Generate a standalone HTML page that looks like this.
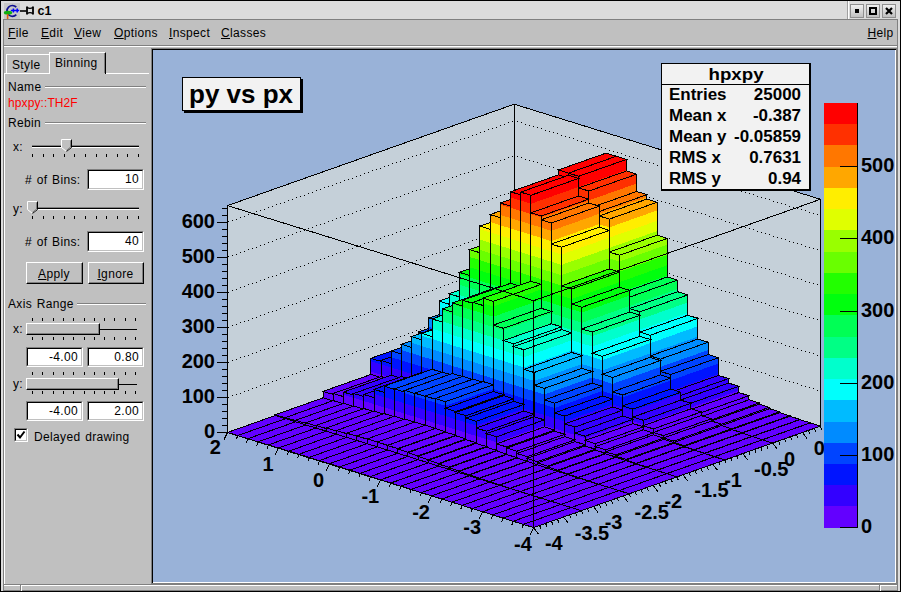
<!DOCTYPE html>
<html><head><meta charset="utf-8">
<style>
*{margin:0;padding:0;box-sizing:border-box}
html,body{width:901px;height:592px;overflow:hidden;background:#c0c0c0;font-family:"Liberation Sans",sans-serif;font-size:12px;color:#000;letter-spacing:0.35px;word-spacing:1px}
.a{position:absolute}
.t{position:absolute;white-space:nowrap;line-height:1}
.u{text-decoration:underline}
.entry{position:absolute;background:#fff;border-top:1px solid #808080;border-left:1px solid #808080;border-right:1px solid #fff;border-bottom:1px solid #fff}
.entry::before{content:"";position:absolute;left:0;top:0;right:0;bottom:0;border-top:1px solid #000;border-left:1px solid #000;border-right:1px solid #c0c0c0;border-bottom:1px solid #c0c0c0}
.entry span{position:absolute;right:4px;top:3px;line-height:1}
.btn{position:absolute;background:#c0c0c0;border-top:1px solid #fff;border-left:1px solid #fff;border-right:1px solid #000;border-bottom:1px solid #000}
.btn::before{content:"";position:absolute;left:0;top:0;right:0;bottom:0;border-right:1px solid #808080;border-bottom:1px solid #808080}
.btn>span{position:absolute;left:-1px;right:0;text-align:center;top:5px;line-height:1}
.groove{position:absolute;height:2px;border-top:1px solid #808080;border-bottom:1px solid #fff}
.tick{position:absolute;width:1px;height:3px;background:#000}
svg text{font-family:"Liberation Sans",sans-serif;font-weight:bold;letter-spacing:0;word-spacing:0}
.nb{letter-spacing:0;word-spacing:0}
</style></head>
<body>
<!-- outer window frame -->
<div class="a" style="left:0;top:0;width:901px;height:592px;background:#000"></div>
<div class="a" style="left:1px;top:1px;width:899px;height:590px;background:#dcdcdc"></div>
<!-- title bar -->
<div class="a" style="left:4px;top:3px;width:16px;height:16px;background:#c8c8c8"></div>
<svg class="a" style="left:0;top:0" width="40" height="22" viewBox="0 0 40 22">
  <path d="M16.3 7.2A5.4 5.4 0 1 0 16.3 14.6" fill="none" stroke="#101090" stroke-width="1.7"/>
  <path d="M10.8 10.6h8.4M13.4 8.6v4M17.2 8.6v4" stroke="#0000ff" stroke-width="1.5" fill="none"/>
  <ellipse cx="8" cy="12.7" rx="4.2" ry="1.9" fill="#10b010"/>
  <path d="M7.6 14v5" stroke="#e06010" stroke-width="1.6"/>
  <path d="M20 11h6.5" stroke="#000" stroke-width="1.6"/>
  <path d="M27 6.5v8M33 6.5v8" stroke="#000" stroke-width="1.8"/>
  <path d="M27 7.2q3 2.5 6 0M27 13.8q3 -2.5 6 0" stroke="#000" stroke-width="1.3" fill="none"/>
</svg>
<div class="t nb" style="left:37.5px;top:5px;font-weight:bold;font-size:12.5px">c1</div>
<div class="a" style="left:847px;top:1px;width:1px;height:18px;background:#a0a0a0"></div>
<div class="a" style="left:848px;top:1px;width:1px;height:18px;background:#fff"></div>
<div class="a" style="left:850px;top:4px;width:14px;height:14px;border:1px solid #909090;background:linear-gradient(#f0f0f0,#c0c0c0)"></div>
<div class="a" style="left:855px;top:9px;width:4px;height:4px;background:#000"></div>
<div class="a" style="left:866px;top:4px;width:14px;height:14px;border:1px solid #909090;background:linear-gradient(#f0f0f0,#c0c0c0)"></div>
<div class="a" style="left:869px;top:7px;width:8px;height:8px;border:2px solid #000"></div>
<div class="a" style="left:882px;top:4px;width:14px;height:14px;border:1px solid #909090;background:linear-gradient(#f0f0f0,#c0c0c0)"></div>
<svg class="a" style="left:882px;top:4px" width="14" height="14"><path d="M4 4l6 6M10 4l-6 6" stroke="#000" stroke-width="2.2"/></svg>

<!-- inner window -->
<div class="a" style="left:3px;top:19px;width:894px;height:572px;background:#808080"></div>
<div class="a" style="left:4px;top:20px;width:893px;height:570px;background:#c0c0c0"></div>
<!-- right edge light strip -->
<div class="a" style="left:897px;top:19px;width:3px;height:572px;background:#dcdcdc"></div>
<div class="a" style="left:897px;top:19px;width:1px;height:572px;background:#808080"></div>

<!-- menu bar -->
<div class="t" style="left:8px;top:27px"><span class="u">F</span>ile</div>
<div class="t" style="left:41px;top:27px"><span class="u">E</span>dit</div>
<div class="t" style="left:74px;top:27px"><span class="u">V</span>iew</div>
<div class="t" style="left:114px;top:27px"><span class="u">O</span>ptions</div>
<div class="t" style="left:169px;top:27px"><span class="u">I</span>nspect</div>
<div class="t" style="left:221px;top:27px"><span class="u">C</span>lasses</div>
<div class="t" style="left:867.5px;top:27px"><span class="u">H</span>elp</div>
<div class="a" style="left:4px;top:45px;width:893px;height:1px;background:#808080"></div>
<div class="a" style="left:4px;top:46px;width:893px;height:1px;background:#fff"></div>

<!-- left panel frame -->
<div class="a" style="left:4px;top:73px;width:1px;height:511px;background:#fff"></div>

<!-- tabs -->
<div class="a" style="left:6px;top:54px;width:44px;height:20px;border-top:1px solid #fff;border-left:1px solid #fff"></div>
<div class="t" style="left:12px;top:59px">Style</div>
<div class="a" style="left:49px;top:52px;width:57px;height:22px;border-top:1px solid #fff;border-left:1px solid #fff;border-right:1px solid #000;background:#c0c0c0"></div><div class="a" style="left:104px;top:53px;width:1px;height:20px;background:#808080"></div>
<div class="t" style="left:55px;top:57px">Binning</div>
<div class="a" style="left:4px;top:73px;width:46px;height:1px;background:#fff"></div>
<div class="a" style="left:106px;top:73px;width:43px;height:1px;background:#fff"></div>

<div class="t" style="left:8px;top:81px">Name</div>
<div class="groove" style="left:45px;top:86px;width:101px"></div>
<div class="t" style="left:8px;top:97px;color:#f00;letter-spacing:0.1px">hpxpy::TH2F</div>
<div class="t" style="left:8px;top:117px">Rebin</div>
<div class="groove" style="left:45px;top:122px;width:101px"></div>

<div class="t" style="left:13px;top:141px">x:</div>
<div class="a" style="left:32px;top:145px;width:107px;height:1px;background:#808080"></div>
<div class="a" style="left:32px;top:146px;width:107px;height:1px;background:#000"></div>
<div class="a" style="left:32px;top:147px;width:107px;height:1px;background:#fff"></div>
<div class="tick" style="left:32px;top:154px"></div>
<div class="tick" style="left:43px;top:154px"></div>
<div class="tick" style="left:53px;top:154px"></div>
<div class="tick" style="left:64px;top:154px"></div>
<div class="tick" style="left:74px;top:154px"></div>
<div class="tick" style="left:85px;top:154px"></div>
<div class="tick" style="left:96px;top:154px"></div>
<div class="tick" style="left:106px;top:154px"></div>
<div class="tick" style="left:117px;top:154px"></div>
<div class="tick" style="left:127px;top:154px"></div>
<div class="tick" style="left:138px;top:154px"></div>
<svg class="a" style="left:61px;top:139px" width="11" height="13"><path d="M0.5 0.5h10v8l-5 4-5-4z" fill="#c0c0c0" stroke="#fff"/><path d="M10.5 0.5v8l-5 4" fill="none" stroke="#000"/><path d="M9.5 1.5v6.5l-4 3.3" fill="none" stroke="#808080"/></svg>
<div class="t" style="left:25px;top:174px"># of Bins:</div>
<div class="entry" style="left:87px;top:169px;width:57px;height:21px"><span>10</span></div>
<div class="t" style="left:13px;top:203px">y:</div>
<div class="a" style="left:32px;top:207px;width:107px;height:1px;background:#808080"></div>
<div class="a" style="left:32px;top:208px;width:107px;height:1px;background:#000"></div>
<div class="a" style="left:32px;top:209px;width:107px;height:1px;background:#fff"></div>
<div class="tick" style="left:32px;top:216px"></div>
<div class="tick" style="left:43px;top:216px"></div>
<div class="tick" style="left:53px;top:216px"></div>
<div class="tick" style="left:64px;top:216px"></div>
<div class="tick" style="left:74px;top:216px"></div>
<div class="tick" style="left:85px;top:216px"></div>
<div class="tick" style="left:96px;top:216px"></div>
<div class="tick" style="left:106px;top:216px"></div>
<div class="tick" style="left:117px;top:216px"></div>
<div class="tick" style="left:127px;top:216px"></div>
<div class="tick" style="left:138px;top:216px"></div>
<svg class="a" style="left:27px;top:201px" width="11" height="13"><path d="M0.5 0.5h10v8l-5 4-5-4z" fill="#c0c0c0" stroke="#fff"/><path d="M10.5 0.5v8l-5 4" fill="none" stroke="#000"/><path d="M9.5 1.5v6.5l-4 3.3" fill="none" stroke="#808080"/></svg>
<div class="t" style="left:25px;top:236px"># of Bins:</div>
<div class="entry" style="left:87px;top:231px;width:57px;height:21px"><span>40</span></div>
<div class="btn" style="left:26px;top:262px;width:57px;height:22px"><span><span class="u">A</span>pply</span></div>
<div class="btn" style="left:88px;top:262px;width:56px;height:22px"><span><span class="u">I</span>gnore</span></div>
<div class="t" style="left:8px;top:298px">Axis Range</div>
<div class="groove" style="left:77px;top:303px;width:69px"></div>
<div class="t" style="left:13px;top:323px">x:</div>
<div class="tick" style="left:32px;top:318px"></div>
<div class="tick" style="left:32px;top:337px"></div>
<div class="tick" style="left:42px;top:318px"></div>
<div class="tick" style="left:42px;top:337px"></div>
<div class="tick" style="left:53px;top:318px"></div>
<div class="tick" style="left:53px;top:337px"></div>
<div class="tick" style="left:63px;top:318px"></div>
<div class="tick" style="left:63px;top:337px"></div>
<div class="tick" style="left:73px;top:318px"></div>
<div class="tick" style="left:73px;top:337px"></div>
<div class="tick" style="left:84px;top:318px"></div>
<div class="tick" style="left:84px;top:337px"></div>
<div class="tick" style="left:94px;top:318px"></div>
<div class="tick" style="left:94px;top:337px"></div>
<div class="tick" style="left:104px;top:318px"></div>
<div class="tick" style="left:104px;top:337px"></div>
<div class="tick" style="left:114px;top:318px"></div>
<div class="tick" style="left:114px;top:337px"></div>
<div class="tick" style="left:125px;top:318px"></div>
<div class="tick" style="left:125px;top:337px"></div>
<div class="tick" style="left:135px;top:318px"></div>
<div class="tick" style="left:135px;top:337px"></div>
<div class="a" style="left:26px;top:329px;width:111px;height:1px;background:#000"></div>
<div class="btn" style="left:26px;top:323px;width:74px;height:12px"></div>
<div class="entry" style="left:26px;top:347px;width:57px;height:20px"><span>-4.00</span></div>
<div class="entry" style="left:87px;top:347px;width:57px;height:20px"><span>0.80</span></div>
<div class="t" style="left:13px;top:378px">y:</div>
<div class="tick" style="left:32px;top:372px"></div>
<div class="tick" style="left:32px;top:391px"></div>
<div class="tick" style="left:42px;top:372px"></div>
<div class="tick" style="left:42px;top:391px"></div>
<div class="tick" style="left:53px;top:372px"></div>
<div class="tick" style="left:53px;top:391px"></div>
<div class="tick" style="left:63px;top:372px"></div>
<div class="tick" style="left:63px;top:391px"></div>
<div class="tick" style="left:73px;top:372px"></div>
<div class="tick" style="left:73px;top:391px"></div>
<div class="tick" style="left:84px;top:372px"></div>
<div class="tick" style="left:84px;top:391px"></div>
<div class="tick" style="left:94px;top:372px"></div>
<div class="tick" style="left:94px;top:391px"></div>
<div class="tick" style="left:104px;top:372px"></div>
<div class="tick" style="left:104px;top:391px"></div>
<div class="tick" style="left:114px;top:372px"></div>
<div class="tick" style="left:114px;top:391px"></div>
<div class="tick" style="left:125px;top:372px"></div>
<div class="tick" style="left:125px;top:391px"></div>
<div class="tick" style="left:135px;top:372px"></div>
<div class="tick" style="left:135px;top:391px"></div>
<div class="a" style="left:26px;top:384px;width:111px;height:1px;background:#000"></div>
<div class="btn" style="left:26px;top:378px;width:93px;height:12px"></div>
<div class="entry" style="left:26px;top:401px;width:57px;height:20px"><span>-4.00</span></div>
<div class="entry" style="left:87px;top:401px;width:57px;height:20px"><span>2.00</span></div>
<div class="entry" style="left:14px;top:428px;width:14px;height:14px"></div>
<svg class="a" style="left:14px;top:428px" width="14" height="14"><path d="M3.5 6.5l2.5 3 4.5-6" fill="none" stroke="#000" stroke-width="2"/></svg>
<div class="t" style="left:34px;top:431px">Delayed drawing</div>

<!-- canvas frame -->
<div class="a" style="left:151px;top:48px;width:746px;height:536px;background:#808080"></div>
<div class="a" style="left:152px;top:49px;width:744px;height:534px;background:#000"></div>
<div class="a" style="left:153px;top:50px;width:743px;height:533px;background:#fff"></div>
<div class="a" style="left:153px;top:50px;width:742px;height:532px;background:#99b2d8"></div>

<!-- status bar -->
<div class="a" style="left:4px;top:584px;width:893px;height:1px;background:#808080"></div>
<div class="a" style="left:4px;top:585px;width:893px;height:1px;background:#fff"></div>
<div class="a" style="left:20px;top:585px;width:1px;height:6px;background:#808080"></div>
<div class="a" style="left:21px;top:585px;width:1px;height:6px;background:#fff"></div>
<div class="a" style="left:879px;top:585px;width:1px;height:6px;background:#808080"></div>
<div class="a" style="left:880px;top:585px;width:1px;height:6px;background:#fff"></div>
<div class="a" style="left:0;top:591px;width:901px;height:1px;background:#000"></div>

<!-- plot -->
<svg class="a" style="left:0;top:0" width="901" height="592" viewBox="0 0 901 592" shape-rendering="crispEdges">
<polygon points="227.48,432.5 514.28,331.1 514.28,104.2 227.48,205.6" fill="#c5d0d9"/>
<polygon points="514.28,331.1 820.4,426.2 820.4,199.3 514.28,104.2" fill="#c5d0d9"/>
<path d="M228 397h1v1h-1zM232 395h1v1h-1zM236 394h1v1h-1zM240 393h1v1h-1zM244 391h1v1h-1zM248 390h1v1h-1zM252 388h1v1h-1zM256 387h1v1h-1zM260 385h1v1h-1zM264 384h1v1h-1zM268 383h1v1h-1zM272 381h1v1h-1zM276 380h1v1h-1zM280 378h1v1h-1zM284 377h1v1h-1zM288 376h1v1h-1zM292 374h1v1h-1zM296 373h1v1h-1zM300 371h1v1h-1zM304 370h1v1h-1zM308 368h1v1h-1zM312 367h1v1h-1zM316 366h1v1h-1zM320 364h1v1h-1zM324 363h1v1h-1zM328 361h1v1h-1zM332 360h1v1h-1zM336 359h1v1h-1zM340 357h1v1h-1zM344 356h1v1h-1zM348 354h1v1h-1zM352 353h1v1h-1zM356 351h1v1h-1zM360 350h1v1h-1zM364 349h1v1h-1zM368 347h1v1h-1zM372 346h1v1h-1zM376 344h1v1h-1zM380 343h1v1h-1zM384 342h1v1h-1zM388 340h1v1h-1zM392 339h1v1h-1zM396 337h1v1h-1zM400 336h1v1h-1zM404 335h1v1h-1zM408 333h1v1h-1zM412 332h1v1h-1zM416 330h1v1h-1zM420 329h1v1h-1zM424 327h1v1h-1zM428 326h1v1h-1zM432 325h1v1h-1zM436 323h1v1h-1zM440 322h1v1h-1zM444 320h1v1h-1zM448 319h1v1h-1zM452 318h1v1h-1zM456 316h1v1h-1zM460 315h1v1h-1zM464 313h1v1h-1zM468 312h1v1h-1zM472 310h1v1h-1zM476 309h1v1h-1zM480 308h1v1h-1zM484 306h1v1h-1zM488 305h1v1h-1zM492 303h1v1h-1zM496 302h1v1h-1zM500 301h1v1h-1zM504 299h1v1h-1zM508 298h1v1h-1zM512 296h1v1h-1zM517 296h1v1h-1zM521 298h1v1h-1zM525 299h1v1h-1zM529 300h1v1h-1zM533 301h1v1h-1zM537 303h1v1h-1zM541 304h1v1h-1zM545 305h1v1h-1zM549 306h1v1h-1zM553 308h1v1h-1zM557 309h1v1h-1zM561 310h1v1h-1zM565 311h1v1h-1zM569 313h1v1h-1zM573 314h1v1h-1zM577 315h1v1h-1zM581 316h1v1h-1zM585 318h1v1h-1zM589 319h1v1h-1zM593 320h1v1h-1zM597 321h1v1h-1zM601 322h1v1h-1zM605 324h1v1h-1zM609 325h1v1h-1zM613 326h1v1h-1zM617 327h1v1h-1zM621 329h1v1h-1zM625 330h1v1h-1zM629 331h1v1h-1zM633 332h1v1h-1zM637 334h1v1h-1zM641 335h1v1h-1zM645 336h1v1h-1zM649 337h1v1h-1zM653 339h1v1h-1zM657 340h1v1h-1zM661 341h1v1h-1zM665 342h1v1h-1zM669 344h1v1h-1zM673 345h1v1h-1zM677 346h1v1h-1zM681 347h1v1h-1zM685 349h1v1h-1zM689 350h1v1h-1zM693 351h1v1h-1zM697 352h1v1h-1zM701 354h1v1h-1zM705 355h1v1h-1zM709 356h1v1h-1zM713 357h1v1h-1zM717 359h1v1h-1zM721 360h1v1h-1zM725 361h1v1h-1zM729 362h1v1h-1zM733 363h1v1h-1zM737 365h1v1h-1zM741 366h1v1h-1zM745 367h1v1h-1zM749 368h1v1h-1zM753 370h1v1h-1zM757 371h1v1h-1zM761 372h1v1h-1zM765 373h1v1h-1zM769 375h1v1h-1zM773 376h1v1h-1zM777 377h1v1h-1zM781 378h1v1h-1zM785 380h1v1h-1zM789 381h1v1h-1zM793 382h1v1h-1zM797 383h1v1h-1zM801 385h1v1h-1zM805 386h1v1h-1zM809 387h1v1h-1zM813 388h1v1h-1zM817 390h1v1h-1zM228 362h1v1h-1zM232 360h1v1h-1zM236 359h1v1h-1zM240 357h1v1h-1zM244 356h1v1h-1zM248 355h1v1h-1zM252 353h1v1h-1zM256 352h1v1h-1zM260 350h1v1h-1zM264 349h1v1h-1zM268 348h1v1h-1zM272 346h1v1h-1zM276 345h1v1h-1zM280 343h1v1h-1zM284 342h1v1h-1zM288 340h1v1h-1zM292 339h1v1h-1zM296 338h1v1h-1zM300 336h1v1h-1zM304 335h1v1h-1zM308 333h1v1h-1zM312 332h1v1h-1zM316 331h1v1h-1zM320 329h1v1h-1zM324 328h1v1h-1zM328 326h1v1h-1zM332 325h1v1h-1zM336 323h1v1h-1zM340 322h1v1h-1zM344 321h1v1h-1zM348 319h1v1h-1zM352 318h1v1h-1zM356 316h1v1h-1zM360 315h1v1h-1zM364 314h1v1h-1zM368 312h1v1h-1zM372 311h1v1h-1zM376 309h1v1h-1zM380 308h1v1h-1zM384 307h1v1h-1zM388 305h1v1h-1zM392 304h1v1h-1zM396 302h1v1h-1zM400 301h1v1h-1zM404 299h1v1h-1zM408 298h1v1h-1zM412 297h1v1h-1zM416 295h1v1h-1zM420 294h1v1h-1zM424 292h1v1h-1zM428 291h1v1h-1zM432 290h1v1h-1zM436 288h1v1h-1zM440 287h1v1h-1zM444 285h1v1h-1zM448 284h1v1h-1zM452 282h1v1h-1zM456 281h1v1h-1zM460 280h1v1h-1zM464 278h1v1h-1zM468 277h1v1h-1zM472 275h1v1h-1zM476 274h1v1h-1zM480 273h1v1h-1zM484 271h1v1h-1zM488 270h1v1h-1zM492 268h1v1h-1zM496 267h1v1h-1zM500 266h1v1h-1zM504 264h1v1h-1zM508 263h1v1h-1zM512 261h1v1h-1zM517 261h1v1h-1zM521 263h1v1h-1zM525 264h1v1h-1zM529 265h1v1h-1zM533 266h1v1h-1zM537 268h1v1h-1zM541 269h1v1h-1zM545 270h1v1h-1zM549 271h1v1h-1zM553 272h1v1h-1zM557 274h1v1h-1zM561 275h1v1h-1zM565 276h1v1h-1zM569 277h1v1h-1zM573 279h1v1h-1zM577 280h1v1h-1zM581 281h1v1h-1zM585 282h1v1h-1zM589 284h1v1h-1zM593 285h1v1h-1zM597 286h1v1h-1zM601 287h1v1h-1zM605 289h1v1h-1zM609 290h1v1h-1zM613 291h1v1h-1zM617 292h1v1h-1zM621 294h1v1h-1zM625 295h1v1h-1zM629 296h1v1h-1zM633 297h1v1h-1zM637 299h1v1h-1zM641 300h1v1h-1zM645 301h1v1h-1zM649 302h1v1h-1zM653 304h1v1h-1zM657 305h1v1h-1zM661 306h1v1h-1zM665 307h1v1h-1zM669 309h1v1h-1zM673 310h1v1h-1zM677 311h1v1h-1zM681 312h1v1h-1zM685 313h1v1h-1zM689 315h1v1h-1zM693 316h1v1h-1zM697 317h1v1h-1zM701 318h1v1h-1zM705 320h1v1h-1zM709 321h1v1h-1zM713 322h1v1h-1zM717 323h1v1h-1zM721 325h1v1h-1zM725 326h1v1h-1zM729 327h1v1h-1zM733 328h1v1h-1zM737 330h1v1h-1zM741 331h1v1h-1zM745 332h1v1h-1zM749 333h1v1h-1zM753 335h1v1h-1zM757 336h1v1h-1zM761 337h1v1h-1zM765 338h1v1h-1zM769 340h1v1h-1zM773 341h1v1h-1zM777 342h1v1h-1zM781 343h1v1h-1zM785 345h1v1h-1zM789 346h1v1h-1zM793 347h1v1h-1zM797 348h1v1h-1zM801 350h1v1h-1zM805 351h1v1h-1zM809 352h1v1h-1zM813 353h1v1h-1zM817 355h1v1h-1zM228 327h1v1h-1zM232 325h1v1h-1zM236 324h1v1h-1zM240 322h1v1h-1zM244 321h1v1h-1zM248 320h1v1h-1zM252 318h1v1h-1zM256 317h1v1h-1zM260 315h1v1h-1zM264 314h1v1h-1zM268 312h1v1h-1zM272 311h1v1h-1zM276 310h1v1h-1zM280 308h1v1h-1zM284 307h1v1h-1zM288 305h1v1h-1zM292 304h1v1h-1zM296 303h1v1h-1zM300 301h1v1h-1zM304 300h1v1h-1zM308 298h1v1h-1zM312 297h1v1h-1zM316 295h1v1h-1zM320 294h1v1h-1zM324 293h1v1h-1zM328 291h1v1h-1zM332 290h1v1h-1zM336 288h1v1h-1zM340 287h1v1h-1zM344 286h1v1h-1zM348 284h1v1h-1zM352 283h1v1h-1zM356 281h1v1h-1zM360 280h1v1h-1zM364 279h1v1h-1zM368 277h1v1h-1zM372 276h1v1h-1zM376 274h1v1h-1zM380 273h1v1h-1zM384 271h1v1h-1zM388 270h1v1h-1zM392 269h1v1h-1zM396 267h1v1h-1zM400 266h1v1h-1zM404 264h1v1h-1zM408 263h1v1h-1zM412 262h1v1h-1zM416 260h1v1h-1zM420 259h1v1h-1zM424 257h1v1h-1zM428 256h1v1h-1zM432 254h1v1h-1zM436 253h1v1h-1zM440 252h1v1h-1zM444 250h1v1h-1zM448 249h1v1h-1zM452 247h1v1h-1zM456 246h1v1h-1zM460 245h1v1h-1zM464 243h1v1h-1zM468 242h1v1h-1zM472 240h1v1h-1zM476 239h1v1h-1zM480 238h1v1h-1zM484 236h1v1h-1zM488 235h1v1h-1zM492 233h1v1h-1zM496 232h1v1h-1zM500 230h1v1h-1zM504 229h1v1h-1zM508 228h1v1h-1zM512 226h1v1h-1zM517 226h1v1h-1zM521 227h1v1h-1zM525 229h1v1h-1zM529 230h1v1h-1zM533 231h1v1h-1zM537 232h1v1h-1zM541 234h1v1h-1zM545 235h1v1h-1zM549 236h1v1h-1zM553 237h1v1h-1zM557 239h1v1h-1zM561 240h1v1h-1zM565 241h1v1h-1zM569 242h1v1h-1zM573 244h1v1h-1zM577 245h1v1h-1zM581 246h1v1h-1zM585 247h1v1h-1zM589 249h1v1h-1zM593 250h1v1h-1zM597 251h1v1h-1zM601 252h1v1h-1zM605 254h1v1h-1zM609 255h1v1h-1zM613 256h1v1h-1zM617 257h1v1h-1zM621 259h1v1h-1zM625 260h1v1h-1zM629 261h1v1h-1zM633 262h1v1h-1zM637 264h1v1h-1zM641 265h1v1h-1zM645 266h1v1h-1zM649 267h1v1h-1zM653 268h1v1h-1zM657 270h1v1h-1zM661 271h1v1h-1zM665 272h1v1h-1zM669 273h1v1h-1zM673 275h1v1h-1zM677 276h1v1h-1zM681 277h1v1h-1zM685 278h1v1h-1zM689 280h1v1h-1zM693 281h1v1h-1zM697 282h1v1h-1zM701 283h1v1h-1zM705 285h1v1h-1zM709 286h1v1h-1zM713 287h1v1h-1zM717 288h1v1h-1zM721 290h1v1h-1zM725 291h1v1h-1zM729 292h1v1h-1zM733 293h1v1h-1zM737 295h1v1h-1zM741 296h1v1h-1zM745 297h1v1h-1zM749 298h1v1h-1zM753 300h1v1h-1zM757 301h1v1h-1zM761 302h1v1h-1zM765 303h1v1h-1zM769 305h1v1h-1zM773 306h1v1h-1zM777 307h1v1h-1zM781 308h1v1h-1zM785 309h1v1h-1zM789 311h1v1h-1zM793 312h1v1h-1zM797 313h1v1h-1zM801 314h1v1h-1zM805 316h1v1h-1zM809 317h1v1h-1zM813 318h1v1h-1zM817 319h1v1h-1zM228 292h1v1h-1zM232 290h1v1h-1zM236 289h1v1h-1zM240 287h1v1h-1zM244 286h1v1h-1zM248 284h1v1h-1zM252 283h1v1h-1zM256 282h1v1h-1zM260 280h1v1h-1zM264 279h1v1h-1zM268 277h1v1h-1zM272 276h1v1h-1zM276 275h1v1h-1zM280 273h1v1h-1zM284 272h1v1h-1zM288 270h1v1h-1zM292 269h1v1h-1zM296 267h1v1h-1zM300 266h1v1h-1zM304 265h1v1h-1zM308 263h1v1h-1zM312 262h1v1h-1zM316 260h1v1h-1zM320 259h1v1h-1zM324 258h1v1h-1zM328 256h1v1h-1zM332 255h1v1h-1zM336 253h1v1h-1zM340 252h1v1h-1zM344 251h1v1h-1zM348 249h1v1h-1zM352 248h1v1h-1zM356 246h1v1h-1zM360 245h1v1h-1zM364 243h1v1h-1zM368 242h1v1h-1zM372 241h1v1h-1zM376 239h1v1h-1zM380 238h1v1h-1zM384 236h1v1h-1zM388 235h1v1h-1zM392 234h1v1h-1zM396 232h1v1h-1zM400 231h1v1h-1zM404 229h1v1h-1zM408 228h1v1h-1zM412 226h1v1h-1zM416 225h1v1h-1zM420 224h1v1h-1zM424 222h1v1h-1zM428 221h1v1h-1zM432 219h1v1h-1zM436 218h1v1h-1zM440 217h1v1h-1zM444 215h1v1h-1zM448 214h1v1h-1zM452 212h1v1h-1zM456 211h1v1h-1zM460 210h1v1h-1zM464 208h1v1h-1zM468 207h1v1h-1zM472 205h1v1h-1zM476 204h1v1h-1zM480 202h1v1h-1zM484 201h1v1h-1zM488 200h1v1h-1zM492 198h1v1h-1zM496 197h1v1h-1zM500 195h1v1h-1zM504 194h1v1h-1zM508 193h1v1h-1zM512 191h1v1h-1zM517 191h1v1h-1zM521 192h1v1h-1zM525 194h1v1h-1zM529 195h1v1h-1zM533 196h1v1h-1zM537 197h1v1h-1zM541 199h1v1h-1zM545 200h1v1h-1zM549 201h1v1h-1zM553 202h1v1h-1zM557 204h1v1h-1zM561 205h1v1h-1zM565 206h1v1h-1zM569 207h1v1h-1zM573 209h1v1h-1zM577 210h1v1h-1zM581 211h1v1h-1zM585 212h1v1h-1zM589 214h1v1h-1zM593 215h1v1h-1zM597 216h1v1h-1zM601 217h1v1h-1zM605 219h1v1h-1zM609 220h1v1h-1zM613 221h1v1h-1zM617 222h1v1h-1zM621 223h1v1h-1zM625 225h1v1h-1zM629 226h1v1h-1zM633 227h1v1h-1zM637 228h1v1h-1zM641 230h1v1h-1zM645 231h1v1h-1zM649 232h1v1h-1zM653 233h1v1h-1zM657 235h1v1h-1zM661 236h1v1h-1zM665 237h1v1h-1zM669 238h1v1h-1zM673 240h1v1h-1zM677 241h1v1h-1zM681 242h1v1h-1zM685 243h1v1h-1zM689 245h1v1h-1zM693 246h1v1h-1zM697 247h1v1h-1zM701 248h1v1h-1zM705 250h1v1h-1zM709 251h1v1h-1zM713 252h1v1h-1zM717 253h1v1h-1zM721 255h1v1h-1zM725 256h1v1h-1zM729 257h1v1h-1zM733 258h1v1h-1zM737 260h1v1h-1zM741 261h1v1h-1zM745 262h1v1h-1zM749 263h1v1h-1zM753 264h1v1h-1zM757 266h1v1h-1zM761 267h1v1h-1zM765 268h1v1h-1zM769 269h1v1h-1zM773 271h1v1h-1zM777 272h1v1h-1zM781 273h1v1h-1zM785 274h1v1h-1zM789 276h1v1h-1zM793 277h1v1h-1zM797 278h1v1h-1zM801 279h1v1h-1zM805 281h1v1h-1zM809 282h1v1h-1zM813 283h1v1h-1zM817 284h1v1h-1zM228 256h1v1h-1zM232 255h1v1h-1zM236 254h1v1h-1zM240 252h1v1h-1zM244 251h1v1h-1zM248 249h1v1h-1zM252 248h1v1h-1zM256 247h1v1h-1zM260 245h1v1h-1zM264 244h1v1h-1zM268 242h1v1h-1zM272 241h1v1h-1zM276 239h1v1h-1zM280 238h1v1h-1zM284 237h1v1h-1zM288 235h1v1h-1zM292 234h1v1h-1zM296 232h1v1h-1zM300 231h1v1h-1zM304 230h1v1h-1zM308 228h1v1h-1zM312 227h1v1h-1zM316 225h1v1h-1zM320 224h1v1h-1zM324 223h1v1h-1zM328 221h1v1h-1zM332 220h1v1h-1zM336 218h1v1h-1zM340 217h1v1h-1zM344 215h1v1h-1zM348 214h1v1h-1zM352 213h1v1h-1zM356 211h1v1h-1zM360 210h1v1h-1zM364 208h1v1h-1zM368 207h1v1h-1zM372 206h1v1h-1zM376 204h1v1h-1zM380 203h1v1h-1zM384 201h1v1h-1zM388 200h1v1h-1zM392 198h1v1h-1zM396 197h1v1h-1zM400 196h1v1h-1zM404 194h1v1h-1zM408 193h1v1h-1zM412 191h1v1h-1zM416 190h1v1h-1zM420 189h1v1h-1zM424 187h1v1h-1zM428 186h1v1h-1zM432 184h1v1h-1zM436 183h1v1h-1zM440 182h1v1h-1zM444 180h1v1h-1zM448 179h1v1h-1zM452 177h1v1h-1zM456 176h1v1h-1zM460 174h1v1h-1zM464 173h1v1h-1zM468 172h1v1h-1zM472 170h1v1h-1zM476 169h1v1h-1zM480 167h1v1h-1zM484 166h1v1h-1zM488 165h1v1h-1zM492 163h1v1h-1zM496 162h1v1h-1zM500 160h1v1h-1zM504 159h1v1h-1zM508 157h1v1h-1zM512 156h1v1h-1zM517 156h1v1h-1zM521 157h1v1h-1zM525 159h1v1h-1zM529 160h1v1h-1zM533 161h1v1h-1zM537 162h1v1h-1zM541 164h1v1h-1zM545 165h1v1h-1zM549 166h1v1h-1zM553 167h1v1h-1zM557 169h1v1h-1zM561 170h1v1h-1zM565 171h1v1h-1zM569 172h1v1h-1zM573 173h1v1h-1zM577 175h1v1h-1zM581 176h1v1h-1zM585 177h1v1h-1zM589 178h1v1h-1zM593 180h1v1h-1zM597 181h1v1h-1zM601 182h1v1h-1zM605 183h1v1h-1zM609 185h1v1h-1zM613 186h1v1h-1zM617 187h1v1h-1zM621 188h1v1h-1zM625 190h1v1h-1zM629 191h1v1h-1zM633 192h1v1h-1zM637 193h1v1h-1zM641 195h1v1h-1zM645 196h1v1h-1zM649 197h1v1h-1zM653 198h1v1h-1zM657 200h1v1h-1zM661 201h1v1h-1zM665 202h1v1h-1zM669 203h1v1h-1zM673 205h1v1h-1zM677 206h1v1h-1zM681 207h1v1h-1zM685 208h1v1h-1zM689 210h1v1h-1zM693 211h1v1h-1zM697 212h1v1h-1zM701 213h1v1h-1zM705 214h1v1h-1zM709 216h1v1h-1zM713 217h1v1h-1zM717 218h1v1h-1zM721 219h1v1h-1zM725 221h1v1h-1zM729 222h1v1h-1zM733 223h1v1h-1zM737 224h1v1h-1zM741 226h1v1h-1zM745 227h1v1h-1zM749 228h1v1h-1zM753 229h1v1h-1zM757 231h1v1h-1zM761 232h1v1h-1zM765 233h1v1h-1zM769 234h1v1h-1zM773 236h1v1h-1zM777 237h1v1h-1zM781 238h1v1h-1zM785 239h1v1h-1zM789 241h1v1h-1zM793 242h1v1h-1zM797 243h1v1h-1zM801 244h1v1h-1zM805 246h1v1h-1zM809 247h1v1h-1zM813 248h1v1h-1zM817 249h1v1h-1zM228 221h1v1h-1zM232 220h1v1h-1zM236 219h1v1h-1zM240 217h1v1h-1zM244 216h1v1h-1zM248 214h1v1h-1zM252 213h1v1h-1zM256 211h1v1h-1zM260 210h1v1h-1zM264 209h1v1h-1zM268 207h1v1h-1zM272 206h1v1h-1zM276 204h1v1h-1zM280 203h1v1h-1zM284 202h1v1h-1zM288 200h1v1h-1zM292 199h1v1h-1zM296 197h1v1h-1zM300 196h1v1h-1zM304 195h1v1h-1zM308 193h1v1h-1zM312 192h1v1h-1zM316 190h1v1h-1zM320 189h1v1h-1zM324 187h1v1h-1zM328 186h1v1h-1zM332 185h1v1h-1zM336 183h1v1h-1zM340 182h1v1h-1zM344 180h1v1h-1zM348 179h1v1h-1zM352 178h1v1h-1zM356 176h1v1h-1zM360 175h1v1h-1zM364 173h1v1h-1zM368 172h1v1h-1zM372 170h1v1h-1zM376 169h1v1h-1zM380 168h1v1h-1zM384 166h1v1h-1zM388 165h1v1h-1zM392 163h1v1h-1zM396 162h1v1h-1zM400 161h1v1h-1zM404 159h1v1h-1zM408 158h1v1h-1zM412 156h1v1h-1zM416 155h1v1h-1zM420 154h1v1h-1zM424 152h1v1h-1zM428 151h1v1h-1zM432 149h1v1h-1zM436 148h1v1h-1zM440 146h1v1h-1zM444 145h1v1h-1zM448 144h1v1h-1zM452 142h1v1h-1zM456 141h1v1h-1zM460 139h1v1h-1zM464 138h1v1h-1zM468 137h1v1h-1zM472 135h1v1h-1zM476 134h1v1h-1zM480 132h1v1h-1zM484 131h1v1h-1zM488 129h1v1h-1zM492 128h1v1h-1zM496 127h1v1h-1zM500 125h1v1h-1zM504 124h1v1h-1zM508 122h1v1h-1zM512 121h1v1h-1zM517 121h1v1h-1zM521 122h1v1h-1zM525 124h1v1h-1zM529 125h1v1h-1zM533 126h1v1h-1zM537 127h1v1h-1zM541 128h1v1h-1zM545 130h1v1h-1zM549 131h1v1h-1zM553 132h1v1h-1zM557 133h1v1h-1zM561 135h1v1h-1zM565 136h1v1h-1zM569 137h1v1h-1zM573 138h1v1h-1zM577 140h1v1h-1zM581 141h1v1h-1zM585 142h1v1h-1zM589 143h1v1h-1zM593 145h1v1h-1zM597 146h1v1h-1zM601 147h1v1h-1zM605 148h1v1h-1zM609 150h1v1h-1zM613 151h1v1h-1zM617 152h1v1h-1zM621 153h1v1h-1zM625 155h1v1h-1zM629 156h1v1h-1zM633 157h1v1h-1zM637 158h1v1h-1zM641 160h1v1h-1zM645 161h1v1h-1zM649 162h1v1h-1zM653 163h1v1h-1zM657 165h1v1h-1zM661 166h1v1h-1zM665 167h1v1h-1zM669 168h1v1h-1zM673 169h1v1h-1zM677 171h1v1h-1zM681 172h1v1h-1zM685 173h1v1h-1zM689 174h1v1h-1zM693 176h1v1h-1zM697 177h1v1h-1zM701 178h1v1h-1zM705 179h1v1h-1zM709 181h1v1h-1zM713 182h1v1h-1zM717 183h1v1h-1zM721 184h1v1h-1zM725 186h1v1h-1zM729 187h1v1h-1zM733 188h1v1h-1zM737 189h1v1h-1zM741 191h1v1h-1zM745 192h1v1h-1zM749 193h1v1h-1zM753 194h1v1h-1zM757 196h1v1h-1zM761 197h1v1h-1zM765 198h1v1h-1zM769 199h1v1h-1zM773 201h1v1h-1zM777 202h1v1h-1zM781 203h1v1h-1zM785 204h1v1h-1zM789 206h1v1h-1zM793 207h1v1h-1zM797 208h1v1h-1zM801 209h1v1h-1zM805 210h1v1h-1zM809 212h1v1h-1zM813 213h1v1h-1zM817 214h1v1h-1z" fill="#000"/>
<line x1="227.48" y1="432.5" x2="227.48" y2="205.6" stroke="#000"/>
<line x1="514.28" y1="331.1" x2="514.28" y2="104.2" stroke="#000"/>
<line x1="820.4" y1="426.2" x2="820.4" y2="199.3" stroke="#000"/>
<line x1="227.48" y1="205.6" x2="514.28" y2="104.2" stroke="#000"/>
<line x1="514.28" y1="104.2" x2="820.4" y2="199.3" stroke="#000"/>
<line x1="227.48" y1="432.5" x2="514.28" y2="331.1" stroke="#000"/>
<line x1="514.28" y1="331.1" x2="820.4" y2="426.2" stroke="#000"/>
<polygon points="466.48,348 476.68,351.17 476.68,340.86 466.48,337.69" fill="#6300ff"/>
<polygon points="466.48,337.69 476.68,340.86 476.68,330.54 466.48,327.37" fill="#3300ff"/>
<polygon points="466.48,327.37 476.68,330.54 476.68,320.23 466.48,317.06" fill="#0014ff"/>
<polygon points="466.48,317.06 476.68,320.23 476.68,317.87 466.48,314.7" fill="#0044ff"/>
<polygon points="476.68,351.17 524.48,334.27 524.48,323.96 476.68,340.86" fill="#6300ff"/>
<polygon points="476.68,340.86 524.48,323.96 524.48,313.64 476.68,330.54" fill="#3300ff"/>
<polygon points="476.68,330.54 524.48,313.64 524.48,303.33 476.68,320.23" fill="#0014ff"/>
<polygon points="476.68,320.23 524.48,303.33 524.48,300.97 476.68,317.87" fill="#0044ff"/>
<polygon points="476.68,317.87 524.48,300.97 514.28,297.8 466.48,314.7" fill="#0044ff"/>
<polygon points="476.68,317.87 524.48,300.97 514.28,297.8 466.48,314.7" fill="none" stroke="#000"/>
<polygon points="466.48,348 476.68,351.17 476.68,317.87 466.48,314.7" fill="none" stroke="#000"/>
<polygon points="476.68,351.17 524.48,334.27 524.48,300.97 476.68,317.87" fill="none" stroke="#000"/>
<polygon points="476.68,351.17 486.89,354.34 486.89,344.03 476.68,340.86" fill="#6300ff"/>
<polygon points="476.68,340.86 486.89,344.03 486.89,333.71 476.68,330.54" fill="#3300ff"/>
<polygon points="476.68,330.54 486.89,333.71 486.89,323.4 476.68,320.23" fill="#0014ff"/>
<polygon points="476.68,320.23 486.89,323.4 486.89,313.08 476.68,309.91" fill="#0044ff"/>
<polygon points="476.68,309.91 486.89,313.08 486.89,306.67 476.68,303.5" fill="#008bff"/>
<polygon points="486.89,354.34 534.69,337.44 534.69,327.13 486.89,344.03" fill="#6300ff"/>
<polygon points="486.89,344.03 534.69,327.13 534.69,316.81 486.89,333.71" fill="#3300ff"/>
<polygon points="486.89,333.71 534.69,316.81 534.69,306.5 486.89,323.4" fill="#0014ff"/>
<polygon points="486.89,323.4 534.69,306.5 534.69,296.18 486.89,313.08" fill="#0044ff"/>
<polygon points="486.89,313.08 534.69,296.18 534.69,289.77 486.89,306.67" fill="#008bff"/>
<polygon points="486.89,306.67 534.69,289.77 524.48,286.6 476.68,303.5" fill="#008bff"/>
<polygon points="486.89,306.67 534.69,289.77 524.48,286.6 476.68,303.5" fill="none" stroke="#000"/>
<polygon points="476.68,351.17 486.89,354.34 486.89,306.67 476.68,303.5" fill="none" stroke="#000"/>
<polygon points="486.89,354.34 534.69,337.44 534.69,289.77 486.89,306.67" fill="none" stroke="#000"/>
<polygon points="486.89,354.34 497.09,357.51 497.09,347.2 486.89,344.03" fill="#6300ff"/>
<polygon points="486.89,344.03 497.09,347.2 497.09,336.88 486.89,333.71" fill="#3300ff"/>
<polygon points="486.89,333.71 497.09,336.88 497.09,326.57 486.89,323.4" fill="#0014ff"/>
<polygon points="486.89,323.4 497.09,326.57 497.09,316.25 486.89,313.08" fill="#0044ff"/>
<polygon points="486.89,313.08 497.09,316.25 497.09,305.94 486.89,302.77" fill="#008bff"/>
<polygon points="486.89,302.77 497.09,305.94 497.09,295.63 486.89,292.46" fill="#00bbff"/>
<polygon points="486.89,292.46 497.09,295.63 497.09,291.93 486.89,288.76" fill="#00fffc"/>
<polygon points="497.09,357.51 544.89,340.61 544.89,330.3 497.09,347.2" fill="#6300ff"/>
<polygon points="497.09,347.2 544.89,330.3 544.89,319.98 497.09,336.88" fill="#3300ff"/>
<polygon points="497.09,336.88 544.89,319.98 544.89,309.67 497.09,326.57" fill="#0014ff"/>
<polygon points="497.09,326.57 544.89,309.67 544.89,299.35 497.09,316.25" fill="#0044ff"/>
<polygon points="497.09,316.25 544.89,299.35 544.89,289.04 497.09,305.94" fill="#008bff"/>
<polygon points="497.09,305.94 544.89,289.04 544.89,278.73 497.09,295.63" fill="#00bbff"/>
<polygon points="497.09,295.63 544.89,278.73 544.89,275.03 497.09,291.93" fill="#00fffc"/>
<polygon points="497.09,291.93 544.89,275.03 534.69,271.86 486.89,288.76" fill="#00fffc"/>
<polygon points="497.09,291.93 544.89,275.03 534.69,271.86 486.89,288.76" fill="none" stroke="#000"/>
<polygon points="486.89,354.34 497.09,357.51 497.09,291.93 486.89,288.76" fill="none" stroke="#000"/>
<polygon points="497.09,357.51 544.89,340.61 544.89,275.03 497.09,291.93" fill="none" stroke="#000"/>
<polygon points="497.09,357.51 507.3,360.68 507.3,350.37 497.09,347.2" fill="#6300ff"/>
<polygon points="497.09,347.2 507.3,350.37 507.3,340.05 497.09,336.88" fill="#3300ff"/>
<polygon points="497.09,336.88 507.3,340.05 507.3,329.74 497.09,326.57" fill="#0014ff"/>
<polygon points="497.09,326.57 507.3,329.74 507.3,319.42 497.09,316.25" fill="#0044ff"/>
<polygon points="497.09,316.25 507.3,319.42 507.3,309.11 497.09,305.94" fill="#008bff"/>
<polygon points="497.09,305.94 507.3,309.11 507.3,298.8 497.09,295.63" fill="#00bbff"/>
<polygon points="497.09,295.63 507.3,298.8 507.3,288.48 497.09,285.31" fill="#00fffc"/>
<polygon points="497.09,285.31 507.3,288.48 507.3,278.17 497.09,275" fill="#00ffcc"/>
<polygon points="497.09,275 507.3,278.17 507.3,273.99 497.09,270.82" fill="#00ff85"/>
<polygon points="507.3,360.68 555.1,343.78 555.1,333.47 507.3,350.37" fill="#6300ff"/>
<polygon points="507.3,350.37 555.1,333.47 555.1,323.15 507.3,340.05" fill="#3300ff"/>
<polygon points="507.3,340.05 555.1,323.15 555.1,312.84 507.3,329.74" fill="#0014ff"/>
<polygon points="507.3,329.74 555.1,312.84 555.1,302.52 507.3,319.42" fill="#0044ff"/>
<polygon points="507.3,319.42 555.1,302.52 555.1,292.21 507.3,309.11" fill="#008bff"/>
<polygon points="507.3,309.11 555.1,292.21 555.1,281.9 507.3,298.8" fill="#00bbff"/>
<polygon points="507.3,298.8 555.1,281.9 555.1,271.58 507.3,288.48" fill="#00fffc"/>
<polygon points="507.3,288.48 555.1,271.58 555.1,261.27 507.3,278.17" fill="#00ffcc"/>
<polygon points="507.3,278.17 555.1,261.27 555.1,257.09 507.3,273.99" fill="#00ff85"/>
<polygon points="507.3,273.99 555.1,257.09 544.89,253.92 497.09,270.82" fill="#00ff85"/>
<polygon points="507.3,273.99 555.1,257.09 544.89,253.92 497.09,270.82" fill="none" stroke="#000"/>
<polygon points="497.09,357.51 507.3,360.68 507.3,273.99 497.09,270.82" fill="none" stroke="#000"/>
<polygon points="507.3,360.68 555.1,343.78 555.1,257.09 507.3,273.99" fill="none" stroke="#000"/>
<polygon points="507.3,360.68 517.5,363.85 517.5,353.54 507.3,350.37" fill="#6300ff"/>
<polygon points="507.3,350.37 517.5,353.54 517.5,343.22 507.3,340.05" fill="#3300ff"/>
<polygon points="507.3,340.05 517.5,343.22 517.5,332.91 507.3,329.74" fill="#0014ff"/>
<polygon points="507.3,329.74 517.5,332.91 517.5,322.59 507.3,319.42" fill="#0044ff"/>
<polygon points="507.3,319.42 517.5,322.59 517.5,312.28 507.3,309.11" fill="#008bff"/>
<polygon points="507.3,309.11 517.5,312.28 517.5,301.97 507.3,298.8" fill="#00bbff"/>
<polygon points="507.3,298.8 517.5,301.97 517.5,291.65 507.3,288.48" fill="#00fffc"/>
<polygon points="507.3,288.48 517.5,291.65 517.5,281.34 507.3,278.17" fill="#00ffcc"/>
<polygon points="507.3,278.17 517.5,281.34 517.5,271.02 507.3,267.85" fill="#00ff85"/>
<polygon points="507.3,267.85 517.5,271.02 517.5,260.71 507.3,257.54" fill="#00ff55"/>
<polygon points="507.3,257.54 517.5,260.71 517.5,253.74 507.3,250.57" fill="#00ff0e"/>
<polygon points="517.5,363.85 565.3,346.95 565.3,336.64 517.5,353.54" fill="#6300ff"/>
<polygon points="517.5,353.54 565.3,336.64 565.3,326.32 517.5,343.22" fill="#3300ff"/>
<polygon points="517.5,343.22 565.3,326.32 565.3,316.01 517.5,332.91" fill="#0014ff"/>
<polygon points="517.5,332.91 565.3,316.01 565.3,305.69 517.5,322.59" fill="#0044ff"/>
<polygon points="517.5,322.59 565.3,305.69 565.3,295.38 517.5,312.28" fill="#008bff"/>
<polygon points="517.5,312.28 565.3,295.38 565.3,285.07 517.5,301.97" fill="#00bbff"/>
<polygon points="517.5,301.97 565.3,285.07 565.3,274.75 517.5,291.65" fill="#00fffc"/>
<polygon points="517.5,291.65 565.3,274.75 565.3,264.44 517.5,281.34" fill="#00ffcc"/>
<polygon points="517.5,281.34 565.3,264.44 565.3,254.12 517.5,271.02" fill="#00ff85"/>
<polygon points="517.5,271.02 565.3,254.12 565.3,243.81 517.5,260.71" fill="#00ff55"/>
<polygon points="517.5,260.71 565.3,243.81 565.3,236.84 517.5,253.74" fill="#00ff0e"/>
<polygon points="517.5,253.74 565.3,236.84 555.1,233.67 507.3,250.57" fill="#00ff0e"/>
<polygon points="517.5,253.74 565.3,236.84 555.1,233.67 507.3,250.57" fill="none" stroke="#000"/>
<polygon points="507.3,360.68 517.5,363.85 517.5,253.74 507.3,250.57" fill="none" stroke="#000"/>
<polygon points="517.5,363.85 565.3,346.95 565.3,236.84 517.5,253.74" fill="none" stroke="#000"/>
<polygon points="517.5,363.85 527.7,367.02 527.7,356.71 517.5,353.54" fill="#6300ff"/>
<polygon points="517.5,353.54 527.7,356.71 527.7,346.39 517.5,343.22" fill="#3300ff"/>
<polygon points="517.5,343.22 527.7,346.39 527.7,336.08 517.5,332.91" fill="#0014ff"/>
<polygon points="517.5,332.91 527.7,336.08 527.7,325.76 517.5,322.59" fill="#0044ff"/>
<polygon points="517.5,322.59 527.7,325.76 527.7,315.45 517.5,312.28" fill="#008bff"/>
<polygon points="517.5,312.28 527.7,315.45 527.7,305.14 517.5,301.97" fill="#00bbff"/>
<polygon points="517.5,301.97 527.7,305.14 527.7,294.82 517.5,291.65" fill="#00fffc"/>
<polygon points="517.5,291.65 527.7,294.82 527.7,284.51 517.5,281.34" fill="#00ffcc"/>
<polygon points="517.5,281.34 527.7,284.51 527.7,274.19 517.5,271.02" fill="#00ff85"/>
<polygon points="517.5,271.02 527.7,274.19 527.7,263.88 517.5,260.71" fill="#00ff55"/>
<polygon points="517.5,260.71 527.7,263.88 527.7,253.57 517.5,250.4" fill="#00ff0e"/>
<polygon points="517.5,250.4 527.7,253.57 527.7,243.25 517.5,240.08" fill="#22ff00"/>
<polygon points="517.5,240.08 527.7,243.25 527.7,232.94 517.5,229.77" fill="#69ff00"/>
<polygon points="517.5,229.77 527.7,232.94 527.7,232.62 517.5,229.45" fill="#99ff00"/>
<polygon points="527.7,367.02 575.5,350.12 575.5,339.81 527.7,356.71" fill="#6300ff"/>
<polygon points="527.7,356.71 575.5,339.81 575.5,329.49 527.7,346.39" fill="#3300ff"/>
<polygon points="527.7,346.39 575.5,329.49 575.5,319.18 527.7,336.08" fill="#0014ff"/>
<polygon points="527.7,336.08 575.5,319.18 575.5,308.86 527.7,325.76" fill="#0044ff"/>
<polygon points="527.7,325.76 575.5,308.86 575.5,298.55 527.7,315.45" fill="#008bff"/>
<polygon points="527.7,315.45 575.5,298.55 575.5,288.24 527.7,305.14" fill="#00bbff"/>
<polygon points="527.7,305.14 575.5,288.24 575.5,277.92 527.7,294.82" fill="#00fffc"/>
<polygon points="527.7,294.82 575.5,277.92 575.5,267.61 527.7,284.51" fill="#00ffcc"/>
<polygon points="527.7,284.51 575.5,267.61 575.5,257.29 527.7,274.19" fill="#00ff85"/>
<polygon points="527.7,274.19 575.5,257.29 575.5,246.98 527.7,263.88" fill="#00ff55"/>
<polygon points="527.7,263.88 575.5,246.98 575.5,236.67 527.7,253.57" fill="#00ff0e"/>
<polygon points="527.7,253.57 575.5,236.67 575.5,226.35 527.7,243.25" fill="#22ff00"/>
<polygon points="527.7,243.25 575.5,226.35 575.5,216.04 527.7,232.94" fill="#69ff00"/>
<polygon points="527.7,232.94 575.5,216.04 575.5,215.72 527.7,232.62" fill="#99ff00"/>
<polygon points="527.7,232.62 575.5,215.72 565.3,212.55 517.5,229.45" fill="#99ff00"/>
<polygon points="527.7,232.62 575.5,215.72 565.3,212.55 517.5,229.45" fill="none" stroke="#000"/>
<polygon points="517.5,363.85 527.7,367.02 527.7,232.62 517.5,229.45" fill="none" stroke="#000"/>
<polygon points="527.7,367.02 575.5,350.12 575.5,215.72 527.7,232.62" fill="none" stroke="#000"/>
<polygon points="527.7,367.02 537.91,370.19 537.91,359.88 527.7,356.71" fill="#6300ff"/>
<polygon points="527.7,356.71 537.91,359.88 537.91,349.56 527.7,346.39" fill="#3300ff"/>
<polygon points="527.7,346.39 537.91,349.56 537.91,339.25 527.7,336.08" fill="#0014ff"/>
<polygon points="527.7,336.08 537.91,339.25 537.91,328.93 527.7,325.76" fill="#0044ff"/>
<polygon points="527.7,325.76 537.91,328.93 537.91,318.62 527.7,315.45" fill="#008bff"/>
<polygon points="527.7,315.45 537.91,318.62 537.91,308.31 527.7,305.14" fill="#00bbff"/>
<polygon points="527.7,305.14 537.91,308.31 537.91,297.99 527.7,294.82" fill="#00fffc"/>
<polygon points="527.7,294.82 537.91,297.99 537.91,287.68 527.7,284.51" fill="#00ffcc"/>
<polygon points="527.7,284.51 537.91,287.68 537.91,277.36 527.7,274.19" fill="#00ff85"/>
<polygon points="527.7,274.19 537.91,277.36 537.91,267.05 527.7,263.88" fill="#00ff55"/>
<polygon points="527.7,263.88 537.91,267.05 537.91,256.74 527.7,253.57" fill="#00ff0e"/>
<polygon points="527.7,253.57 537.91,256.74 537.91,246.42 527.7,243.25" fill="#22ff00"/>
<polygon points="527.7,243.25 537.91,246.42 537.91,236.11 527.7,232.94" fill="#69ff00"/>
<polygon points="527.7,232.94 537.91,236.11 537.91,225.79 527.7,222.62" fill="#99ff00"/>
<polygon points="527.7,222.62 537.91,225.79 537.91,215.48 527.7,212.31" fill="#e0ff00"/>
<polygon points="527.7,212.31 537.91,215.48 537.91,212.55 527.7,209.38" fill="#ffee00"/>
<polygon points="537.91,370.19 585.71,353.29 585.71,342.98 537.91,359.88" fill="#6300ff"/>
<polygon points="537.91,359.88 585.71,342.98 585.71,332.66 537.91,349.56" fill="#3300ff"/>
<polygon points="537.91,349.56 585.71,332.66 585.71,322.35 537.91,339.25" fill="#0014ff"/>
<polygon points="537.91,339.25 585.71,322.35 585.71,312.03 537.91,328.93" fill="#0044ff"/>
<polygon points="537.91,328.93 585.71,312.03 585.71,301.72 537.91,318.62" fill="#008bff"/>
<polygon points="537.91,318.62 585.71,301.72 585.71,291.41 537.91,308.31" fill="#00bbff"/>
<polygon points="537.91,308.31 585.71,291.41 585.71,281.09 537.91,297.99" fill="#00fffc"/>
<polygon points="537.91,297.99 585.71,281.09 585.71,270.78 537.91,287.68" fill="#00ffcc"/>
<polygon points="537.91,287.68 585.71,270.78 585.71,260.46 537.91,277.36" fill="#00ff85"/>
<polygon points="537.91,277.36 585.71,260.46 585.71,250.15 537.91,267.05" fill="#00ff55"/>
<polygon points="537.91,267.05 585.71,250.15 585.71,239.84 537.91,256.74" fill="#00ff0e"/>
<polygon points="537.91,256.74 585.71,239.84 585.71,229.52 537.91,246.42" fill="#22ff00"/>
<polygon points="537.91,246.42 585.71,229.52 585.71,219.21 537.91,236.11" fill="#69ff00"/>
<polygon points="537.91,236.11 585.71,219.21 585.71,208.89 537.91,225.79" fill="#99ff00"/>
<polygon points="537.91,225.79 585.71,208.89 585.71,198.58 537.91,215.48" fill="#e0ff00"/>
<polygon points="537.91,215.48 585.71,198.58 585.71,195.65 537.91,212.55" fill="#ffee00"/>
<polygon points="537.91,212.55 585.71,195.65 575.5,192.48 527.7,209.38" fill="#ffee00"/>
<polygon points="537.91,212.55 585.71,195.65 575.5,192.48 527.7,209.38" fill="none" stroke="#000"/>
<polygon points="527.7,367.02 537.91,370.19 537.91,212.55 527.7,209.38" fill="none" stroke="#000"/>
<polygon points="537.91,370.19 585.71,353.29 585.71,195.65 537.91,212.55" fill="none" stroke="#000"/>
<polygon points="537.91,370.19 548.11,373.36 548.11,363.05 537.91,359.88" fill="#6300ff"/>
<polygon points="537.91,359.88 548.11,363.05 548.11,352.73 537.91,349.56" fill="#3300ff"/>
<polygon points="537.91,349.56 548.11,352.73 548.11,342.42 537.91,339.25" fill="#0014ff"/>
<polygon points="537.91,339.25 548.11,342.42 548.11,332.1 537.91,328.93" fill="#0044ff"/>
<polygon points="537.91,328.93 548.11,332.1 548.11,321.79 537.91,318.62" fill="#008bff"/>
<polygon points="537.91,318.62 548.11,321.79 548.11,311.48 537.91,308.31" fill="#00bbff"/>
<polygon points="537.91,308.31 548.11,311.48 548.11,301.16 537.91,297.99" fill="#00fffc"/>
<polygon points="537.91,297.99 548.11,301.16 548.11,290.85 537.91,287.68" fill="#00ffcc"/>
<polygon points="537.91,287.68 548.11,290.85 548.11,280.53 537.91,277.36" fill="#00ff85"/>
<polygon points="537.91,277.36 548.11,280.53 548.11,270.22 537.91,267.05" fill="#00ff55"/>
<polygon points="537.91,267.05 548.11,270.22 548.11,259.91 537.91,256.74" fill="#00ff0e"/>
<polygon points="537.91,256.74 548.11,259.91 548.11,249.59 537.91,246.42" fill="#22ff00"/>
<polygon points="537.91,246.42 548.11,249.59 548.11,239.28 537.91,236.11" fill="#69ff00"/>
<polygon points="537.91,236.11 548.11,239.28 548.11,228.96 537.91,225.79" fill="#99ff00"/>
<polygon points="537.91,225.79 548.11,228.96 548.11,218.65 537.91,215.48" fill="#e0ff00"/>
<polygon points="537.91,215.48 548.11,218.65 548.11,208.33 537.91,205.16" fill="#ffee00"/>
<polygon points="537.91,205.16 548.11,208.33 548.11,198.02 537.91,194.85" fill="#ffa700"/>
<polygon points="537.91,194.85 548.11,198.02 548.11,195.7 537.91,192.53" fill="#ff7700"/>
<polygon points="548.11,373.36 595.91,356.46 595.91,346.15 548.11,363.05" fill="#6300ff"/>
<polygon points="548.11,363.05 595.91,346.15 595.91,335.83 548.11,352.73" fill="#3300ff"/>
<polygon points="548.11,352.73 595.91,335.83 595.91,325.52 548.11,342.42" fill="#0014ff"/>
<polygon points="548.11,342.42 595.91,325.52 595.91,315.2 548.11,332.1" fill="#0044ff"/>
<polygon points="548.11,332.1 595.91,315.2 595.91,304.89 548.11,321.79" fill="#008bff"/>
<polygon points="548.11,321.79 595.91,304.89 595.91,294.58 548.11,311.48" fill="#00bbff"/>
<polygon points="548.11,311.48 595.91,294.58 595.91,284.26 548.11,301.16" fill="#00fffc"/>
<polygon points="548.11,301.16 595.91,284.26 595.91,273.95 548.11,290.85" fill="#00ffcc"/>
<polygon points="548.11,290.85 595.91,273.95 595.91,263.63 548.11,280.53" fill="#00ff85"/>
<polygon points="548.11,280.53 595.91,263.63 595.91,253.32 548.11,270.22" fill="#00ff55"/>
<polygon points="548.11,270.22 595.91,253.32 595.91,243.01 548.11,259.91" fill="#00ff0e"/>
<polygon points="548.11,259.91 595.91,243.01 595.91,232.69 548.11,249.59" fill="#22ff00"/>
<polygon points="548.11,249.59 595.91,232.69 595.91,222.38 548.11,239.28" fill="#69ff00"/>
<polygon points="548.11,239.28 595.91,222.38 595.91,212.06 548.11,228.96" fill="#99ff00"/>
<polygon points="548.11,228.96 595.91,212.06 595.91,201.75 548.11,218.65" fill="#e0ff00"/>
<polygon points="548.11,218.65 595.91,201.75 595.91,191.43 548.11,208.33" fill="#ffee00"/>
<polygon points="548.11,208.33 595.91,191.43 595.91,181.12 548.11,198.02" fill="#ffa700"/>
<polygon points="548.11,198.02 595.91,181.12 595.91,178.8 548.11,195.7" fill="#ff7700"/>
<polygon points="548.11,195.7 595.91,178.8 585.71,175.63 537.91,192.53" fill="#ff7700"/>
<polygon points="548.11,195.7 595.91,178.8 585.71,175.63 537.91,192.53" fill="none" stroke="#000"/>
<polygon points="537.91,370.19 548.11,373.36 548.11,195.7 537.91,192.53" fill="none" stroke="#000"/>
<polygon points="548.11,373.36 595.91,356.46 595.91,178.8 548.11,195.7" fill="none" stroke="#000"/>
<polygon points="548.11,373.36 558.32,376.53 558.32,366.22 548.11,363.05" fill="#6300ff"/>
<polygon points="548.11,363.05 558.32,366.22 558.32,355.9 548.11,352.73" fill="#3300ff"/>
<polygon points="548.11,352.73 558.32,355.9 558.32,345.59 548.11,342.42" fill="#0014ff"/>
<polygon points="548.11,342.42 558.32,345.59 558.32,335.27 548.11,332.1" fill="#0044ff"/>
<polygon points="548.11,332.1 558.32,335.27 558.32,324.96 548.11,321.79" fill="#008bff"/>
<polygon points="548.11,321.79 558.32,324.96 558.32,314.65 548.11,311.48" fill="#00bbff"/>
<polygon points="548.11,311.48 558.32,314.65 558.32,304.33 548.11,301.16" fill="#00fffc"/>
<polygon points="548.11,301.16 558.32,304.33 558.32,294.02 548.11,290.85" fill="#00ffcc"/>
<polygon points="548.11,290.85 558.32,294.02 558.32,283.7 548.11,280.53" fill="#00ff85"/>
<polygon points="548.11,280.53 558.32,283.7 558.32,273.39 548.11,270.22" fill="#00ff55"/>
<polygon points="548.11,270.22 558.32,273.39 558.32,263.08 548.11,259.91" fill="#00ff0e"/>
<polygon points="548.11,259.91 558.32,263.08 558.32,252.76 548.11,249.59" fill="#22ff00"/>
<polygon points="548.11,249.59 558.32,252.76 558.32,242.45 548.11,239.28" fill="#69ff00"/>
<polygon points="548.11,239.28 558.32,242.45 558.32,232.13 548.11,228.96" fill="#99ff00"/>
<polygon points="548.11,228.96 558.32,232.13 558.32,221.82 548.11,218.65" fill="#e0ff00"/>
<polygon points="548.11,218.65 558.32,221.82 558.32,211.5 548.11,208.33" fill="#ffee00"/>
<polygon points="548.11,208.33 558.32,211.5 558.32,201.19 548.11,198.02" fill="#ffa700"/>
<polygon points="548.11,198.02 558.32,201.19 558.32,190.88 548.11,187.71" fill="#ff7700"/>
<polygon points="548.11,187.71 558.32,190.88 558.32,184.12 548.11,180.95" fill="#ff3000"/>
<polygon points="558.32,376.53 606.12,359.63 606.12,349.32 558.32,366.22" fill="#6300ff"/>
<polygon points="558.32,366.22 606.12,349.32 606.12,339 558.32,355.9" fill="#3300ff"/>
<polygon points="558.32,355.9 606.12,339 606.12,328.69 558.32,345.59" fill="#0014ff"/>
<polygon points="558.32,345.59 606.12,328.69 606.12,318.37 558.32,335.27" fill="#0044ff"/>
<polygon points="558.32,335.27 606.12,318.37 606.12,308.06 558.32,324.96" fill="#008bff"/>
<polygon points="558.32,324.96 606.12,308.06 606.12,297.75 558.32,314.65" fill="#00bbff"/>
<polygon points="558.32,314.65 606.12,297.75 606.12,287.43 558.32,304.33" fill="#00fffc"/>
<polygon points="558.32,304.33 606.12,287.43 606.12,277.12 558.32,294.02" fill="#00ffcc"/>
<polygon points="558.32,294.02 606.12,277.12 606.12,266.8 558.32,283.7" fill="#00ff85"/>
<polygon points="558.32,283.7 606.12,266.8 606.12,256.49 558.32,273.39" fill="#00ff55"/>
<polygon points="558.32,273.39 606.12,256.49 606.12,246.18 558.32,263.08" fill="#00ff0e"/>
<polygon points="558.32,263.08 606.12,246.18 606.12,235.86 558.32,252.76" fill="#22ff00"/>
<polygon points="558.32,252.76 606.12,235.86 606.12,225.55 558.32,242.45" fill="#69ff00"/>
<polygon points="558.32,242.45 606.12,225.55 606.12,215.23 558.32,232.13" fill="#99ff00"/>
<polygon points="558.32,232.13 606.12,215.23 606.12,204.92 558.32,221.82" fill="#e0ff00"/>
<polygon points="558.32,221.82 606.12,204.92 606.12,194.6 558.32,211.5" fill="#ffee00"/>
<polygon points="558.32,211.5 606.12,194.6 606.12,184.29 558.32,201.19" fill="#ffa700"/>
<polygon points="558.32,201.19 606.12,184.29 606.12,173.98 558.32,190.88" fill="#ff7700"/>
<polygon points="558.32,190.88 606.12,173.98 606.12,167.22 558.32,184.12" fill="#ff3000"/>
<polygon points="558.32,184.12 606.12,167.22 595.91,164.05 548.11,180.95" fill="#ff3000"/>
<polygon points="558.32,184.12 606.12,167.22 595.91,164.05 548.11,180.95" fill="none" stroke="#000"/>
<polygon points="548.11,373.36 558.32,376.53 558.32,184.12 548.11,180.95" fill="none" stroke="#000"/>
<polygon points="558.32,376.53 606.12,359.63 606.12,167.22 558.32,184.12" fill="none" stroke="#000"/>
<polygon points="558.32,376.53 568.52,379.7 568.52,369.39 558.32,366.22" fill="#6300ff"/>
<polygon points="558.32,366.22 568.52,369.39 568.52,359.07 558.32,355.9" fill="#3300ff"/>
<polygon points="558.32,355.9 568.52,359.07 568.52,348.76 558.32,345.59" fill="#0014ff"/>
<polygon points="558.32,345.59 568.52,348.76 568.52,338.44 558.32,335.27" fill="#0044ff"/>
<polygon points="558.32,335.27 568.52,338.44 568.52,328.13 558.32,324.96" fill="#008bff"/>
<polygon points="558.32,324.96 568.52,328.13 568.52,317.82 558.32,314.65" fill="#00bbff"/>
<polygon points="558.32,314.65 568.52,317.82 568.52,307.5 558.32,304.33" fill="#00fffc"/>
<polygon points="558.32,304.33 568.52,307.5 568.52,297.19 558.32,294.02" fill="#00ffcc"/>
<polygon points="558.32,294.02 568.52,297.19 568.52,286.87 558.32,283.7" fill="#00ff85"/>
<polygon points="558.32,283.7 568.52,286.87 568.52,276.56 558.32,273.39" fill="#00ff55"/>
<polygon points="558.32,273.39 568.52,276.56 568.52,266.25 558.32,263.08" fill="#00ff0e"/>
<polygon points="558.32,263.08 568.52,266.25 568.52,255.93 558.32,252.76" fill="#22ff00"/>
<polygon points="558.32,252.76 568.52,255.93 568.52,245.62 558.32,242.45" fill="#69ff00"/>
<polygon points="558.32,242.45 568.52,245.62 568.52,235.3 558.32,232.13" fill="#99ff00"/>
<polygon points="558.32,232.13 568.52,235.3 568.52,224.99 558.32,221.82" fill="#e0ff00"/>
<polygon points="558.32,221.82 568.52,224.99 568.52,214.67 558.32,211.5" fill="#ffee00"/>
<polygon points="558.32,211.5 568.52,214.67 568.52,204.36 558.32,201.19" fill="#ffa700"/>
<polygon points="558.32,201.19 568.52,204.36 568.52,194.05 558.32,190.88" fill="#ff7700"/>
<polygon points="558.32,190.88 568.52,194.05 568.52,183.73 558.32,180.56" fill="#ff3000"/>
<polygon points="558.32,180.56 568.52,183.73 568.52,173.42 558.32,170.25" fill="#ff0000"/>
<polygon points="558.32,170.25 568.52,173.42 568.52,173.14 558.32,169.97" fill="#ff0000"/>
<polygon points="568.52,379.7 616.32,362.8 616.32,352.49 568.52,369.39" fill="#6300ff"/>
<polygon points="568.52,369.39 616.32,352.49 616.32,342.17 568.52,359.07" fill="#3300ff"/>
<polygon points="568.52,359.07 616.32,342.17 616.32,331.86 568.52,348.76" fill="#0014ff"/>
<polygon points="568.52,348.76 616.32,331.86 616.32,321.54 568.52,338.44" fill="#0044ff"/>
<polygon points="568.52,338.44 616.32,321.54 616.32,311.23 568.52,328.13" fill="#008bff"/>
<polygon points="568.52,328.13 616.32,311.23 616.32,300.92 568.52,317.82" fill="#00bbff"/>
<polygon points="568.52,317.82 616.32,300.92 616.32,290.6 568.52,307.5" fill="#00fffc"/>
<polygon points="568.52,307.5 616.32,290.6 616.32,280.29 568.52,297.19" fill="#00ffcc"/>
<polygon points="568.52,297.19 616.32,280.29 616.32,269.97 568.52,286.87" fill="#00ff85"/>
<polygon points="568.52,286.87 616.32,269.97 616.32,259.66 568.52,276.56" fill="#00ff55"/>
<polygon points="568.52,276.56 616.32,259.66 616.32,249.35 568.52,266.25" fill="#00ff0e"/>
<polygon points="568.52,266.25 616.32,249.35 616.32,239.03 568.52,255.93" fill="#22ff00"/>
<polygon points="568.52,255.93 616.32,239.03 616.32,228.72 568.52,245.62" fill="#69ff00"/>
<polygon points="568.52,245.62 616.32,228.72 616.32,218.4 568.52,235.3" fill="#99ff00"/>
<polygon points="568.52,235.3 616.32,218.4 616.32,208.09 568.52,224.99" fill="#e0ff00"/>
<polygon points="568.52,224.99 616.32,208.09 616.32,197.77 568.52,214.67" fill="#ffee00"/>
<polygon points="568.52,214.67 616.32,197.77 616.32,187.46 568.52,204.36" fill="#ffa700"/>
<polygon points="568.52,204.36 616.32,187.46 616.32,177.15 568.52,194.05" fill="#ff7700"/>
<polygon points="568.52,194.05 616.32,177.15 616.32,166.83 568.52,183.73" fill="#ff3000"/>
<polygon points="568.52,183.73 616.32,166.83 616.32,156.52 568.52,173.42" fill="#ff0000"/>
<polygon points="568.52,173.42 616.32,156.52 616.32,156.24 568.52,173.14" fill="#ff0000"/>
<polygon points="568.52,173.14 616.32,156.24 606.12,153.07 558.32,169.97" fill="#ff0000"/>
<polygon points="568.52,173.14 616.32,156.24 606.12,153.07 558.32,169.97" fill="none" stroke="#000"/>
<polygon points="558.32,376.53 568.52,379.7 568.52,173.14 558.32,169.97" fill="none" stroke="#000"/>
<polygon points="568.52,379.7 616.32,362.8 616.32,156.24 568.52,173.14" fill="none" stroke="#000"/>
<polygon points="568.52,379.7 578.72,382.87 578.72,372.56 568.52,369.39" fill="#6300ff"/>
<polygon points="568.52,369.39 578.72,372.56 578.72,362.24 568.52,359.07" fill="#3300ff"/>
<polygon points="568.52,359.07 578.72,362.24 578.72,351.93 568.52,348.76" fill="#0014ff"/>
<polygon points="568.52,348.76 578.72,351.93 578.72,341.61 568.52,338.44" fill="#0044ff"/>
<polygon points="568.52,338.44 578.72,341.61 578.72,331.3 568.52,328.13" fill="#008bff"/>
<polygon points="568.52,328.13 578.72,331.3 578.72,320.99 568.52,317.82" fill="#00bbff"/>
<polygon points="568.52,317.82 578.72,320.99 578.72,310.67 568.52,307.5" fill="#00fffc"/>
<polygon points="568.52,307.5 578.72,310.67 578.72,300.36 568.52,297.19" fill="#00ffcc"/>
<polygon points="568.52,297.19 578.72,300.36 578.72,290.04 568.52,286.87" fill="#00ff85"/>
<polygon points="568.52,286.87 578.72,290.04 578.72,279.73 568.52,276.56" fill="#00ff55"/>
<polygon points="568.52,276.56 578.72,279.73 578.72,269.42 568.52,266.25" fill="#00ff0e"/>
<polygon points="568.52,266.25 578.72,269.42 578.72,259.1 568.52,255.93" fill="#22ff00"/>
<polygon points="568.52,255.93 578.72,259.1 578.72,248.79 568.52,245.62" fill="#69ff00"/>
<polygon points="568.52,245.62 578.72,248.79 578.72,238.47 568.52,235.3" fill="#99ff00"/>
<polygon points="568.52,235.3 578.72,238.47 578.72,228.16 568.52,224.99" fill="#e0ff00"/>
<polygon points="568.52,224.99 578.72,228.16 578.72,217.84 568.52,214.67" fill="#ffee00"/>
<polygon points="568.52,214.67 578.72,217.84 578.72,207.53 568.52,204.36" fill="#ffa700"/>
<polygon points="568.52,204.36 578.72,207.53 578.72,197.22 568.52,194.05" fill="#ff7700"/>
<polygon points="568.52,194.05 578.72,197.22 578.72,186.9 568.52,183.73" fill="#ff3000"/>
<polygon points="568.52,183.73 578.72,186.9 578.72,176.59 568.52,173.42" fill="#ff0000"/>
<polygon points="568.52,173.42 578.72,176.59 578.72,176.31 568.52,173.14" fill="#ff0000"/>
<polygon points="578.72,382.87 626.52,365.97 626.52,355.66 578.72,372.56" fill="#6300ff"/>
<polygon points="578.72,372.56 626.52,355.66 626.52,345.34 578.72,362.24" fill="#3300ff"/>
<polygon points="578.72,362.24 626.52,345.34 626.52,335.03 578.72,351.93" fill="#0014ff"/>
<polygon points="578.72,351.93 626.52,335.03 626.52,324.71 578.72,341.61" fill="#0044ff"/>
<polygon points="578.72,341.61 626.52,324.71 626.52,314.4 578.72,331.3" fill="#008bff"/>
<polygon points="578.72,331.3 626.52,314.4 626.52,304.09 578.72,320.99" fill="#00bbff"/>
<polygon points="578.72,320.99 626.52,304.09 626.52,293.77 578.72,310.67" fill="#00fffc"/>
<polygon points="578.72,310.67 626.52,293.77 626.52,283.46 578.72,300.36" fill="#00ffcc"/>
<polygon points="578.72,300.36 626.52,283.46 626.52,273.14 578.72,290.04" fill="#00ff85"/>
<polygon points="578.72,290.04 626.52,273.14 626.52,262.83 578.72,279.73" fill="#00ff55"/>
<polygon points="578.72,279.73 626.52,262.83 626.52,252.52 578.72,269.42" fill="#00ff0e"/>
<polygon points="578.72,269.42 626.52,252.52 626.52,242.2 578.72,259.1" fill="#22ff00"/>
<polygon points="578.72,259.1 626.52,242.2 626.52,231.89 578.72,248.79" fill="#69ff00"/>
<polygon points="578.72,248.79 626.52,231.89 626.52,221.57 578.72,238.47" fill="#99ff00"/>
<polygon points="578.72,238.47 626.52,221.57 626.52,211.26 578.72,228.16" fill="#e0ff00"/>
<polygon points="578.72,228.16 626.52,211.26 626.52,200.94 578.72,217.84" fill="#ffee00"/>
<polygon points="578.72,217.84 626.52,200.94 626.52,190.63 578.72,207.53" fill="#ffa700"/>
<polygon points="578.72,207.53 626.52,190.63 626.52,180.32 578.72,197.22" fill="#ff7700"/>
<polygon points="578.72,197.22 626.52,180.32 626.52,170 578.72,186.9" fill="#ff3000"/>
<polygon points="578.72,186.9 626.52,170 626.52,159.69 578.72,176.59" fill="#ff0000"/>
<polygon points="578.72,176.59 626.52,159.69 626.52,159.41 578.72,176.31" fill="#ff0000"/>
<polygon points="578.72,176.31 626.52,159.41 616.32,156.24 568.52,173.14" fill="#ff0000"/>
<polygon points="578.72,176.31 626.52,159.41 616.32,156.24 568.52,173.14" fill="none" stroke="#000"/>
<polygon points="568.52,379.7 578.72,382.87 578.72,176.31 568.52,173.14" fill="none" stroke="#000"/>
<polygon points="578.72,382.87 626.52,365.97 626.52,159.41 578.72,176.31" fill="none" stroke="#000"/>
<polygon points="578.72,382.87 588.93,386.04 588.93,375.73 578.72,372.56" fill="#6300ff"/>
<polygon points="578.72,372.56 588.93,375.73 588.93,365.41 578.72,362.24" fill="#3300ff"/>
<polygon points="578.72,362.24 588.93,365.41 588.93,355.1 578.72,351.93" fill="#0014ff"/>
<polygon points="578.72,351.93 588.93,355.1 588.93,344.78 578.72,341.61" fill="#0044ff"/>
<polygon points="578.72,341.61 588.93,344.78 588.93,334.47 578.72,331.3" fill="#008bff"/>
<polygon points="578.72,331.3 588.93,334.47 588.93,324.16 578.72,320.99" fill="#00bbff"/>
<polygon points="578.72,320.99 588.93,324.16 588.93,313.84 578.72,310.67" fill="#00fffc"/>
<polygon points="578.72,310.67 588.93,313.84 588.93,303.53 578.72,300.36" fill="#00ffcc"/>
<polygon points="578.72,300.36 588.93,303.53 588.93,293.21 578.72,290.04" fill="#00ff85"/>
<polygon points="578.72,290.04 588.93,293.21 588.93,282.9 578.72,279.73" fill="#00ff55"/>
<polygon points="578.72,279.73 588.93,282.9 588.93,272.59 578.72,269.42" fill="#00ff0e"/>
<polygon points="578.72,269.42 588.93,272.59 588.93,262.27 578.72,259.1" fill="#22ff00"/>
<polygon points="578.72,259.1 588.93,262.27 588.93,251.96 578.72,248.79" fill="#69ff00"/>
<polygon points="578.72,248.79 588.93,251.96 588.93,241.64 578.72,238.47" fill="#99ff00"/>
<polygon points="578.72,238.47 588.93,241.64 588.93,231.33 578.72,228.16" fill="#e0ff00"/>
<polygon points="578.72,228.16 588.93,231.33 588.93,221.01 578.72,217.84" fill="#ffee00"/>
<polygon points="578.72,217.84 588.93,221.01 588.93,210.7 578.72,207.53" fill="#ffa700"/>
<polygon points="578.72,207.53 588.93,210.7 588.93,200.39 578.72,197.22" fill="#ff7700"/>
<polygon points="578.72,197.22 588.93,200.39 588.93,191.05 578.72,187.88" fill="#ff3000"/>
<polygon points="588.93,386.04 636.73,369.14 636.73,358.83 588.93,375.73" fill="#6300ff"/>
<polygon points="588.93,375.73 636.73,358.83 636.73,348.51 588.93,365.41" fill="#3300ff"/>
<polygon points="588.93,365.41 636.73,348.51 636.73,338.2 588.93,355.1" fill="#0014ff"/>
<polygon points="588.93,355.1 636.73,338.2 636.73,327.88 588.93,344.78" fill="#0044ff"/>
<polygon points="588.93,344.78 636.73,327.88 636.73,317.57 588.93,334.47" fill="#008bff"/>
<polygon points="588.93,334.47 636.73,317.57 636.73,307.26 588.93,324.16" fill="#00bbff"/>
<polygon points="588.93,324.16 636.73,307.26 636.73,296.94 588.93,313.84" fill="#00fffc"/>
<polygon points="588.93,313.84 636.73,296.94 636.73,286.63 588.93,303.53" fill="#00ffcc"/>
<polygon points="588.93,303.53 636.73,286.63 636.73,276.31 588.93,293.21" fill="#00ff85"/>
<polygon points="588.93,293.21 636.73,276.31 636.73,266 588.93,282.9" fill="#00ff55"/>
<polygon points="588.93,282.9 636.73,266 636.73,255.69 588.93,272.59" fill="#00ff0e"/>
<polygon points="588.93,272.59 636.73,255.69 636.73,245.37 588.93,262.27" fill="#22ff00"/>
<polygon points="588.93,262.27 636.73,245.37 636.73,235.06 588.93,251.96" fill="#69ff00"/>
<polygon points="588.93,251.96 636.73,235.06 636.73,224.74 588.93,241.64" fill="#99ff00"/>
<polygon points="588.93,241.64 636.73,224.74 636.73,214.43 588.93,231.33" fill="#e0ff00"/>
<polygon points="588.93,231.33 636.73,214.43 636.73,204.11 588.93,221.01" fill="#ffee00"/>
<polygon points="588.93,221.01 636.73,204.11 636.73,193.8 588.93,210.7" fill="#ffa700"/>
<polygon points="588.93,210.7 636.73,193.8 636.73,183.49 588.93,200.39" fill="#ff7700"/>
<polygon points="588.93,200.39 636.73,183.49 636.73,174.15 588.93,191.05" fill="#ff3000"/>
<polygon points="588.93,191.05 636.73,174.15 626.52,170.98 578.72,187.88" fill="#ff3000"/>
<polygon points="588.93,191.05 636.73,174.15 626.52,170.98 578.72,187.88" fill="none" stroke="#000"/>
<polygon points="578.72,382.87 588.93,386.04 588.93,191.05 578.72,187.88" fill="none" stroke="#000"/>
<polygon points="588.93,386.04 636.73,369.14 636.73,174.15 588.93,191.05" fill="none" stroke="#000"/>
<polygon points="588.93,386.04 599.13,389.21 599.13,378.9 588.93,375.73" fill="#6300ff"/>
<polygon points="588.93,375.73 599.13,378.9 599.13,368.58 588.93,365.41" fill="#3300ff"/>
<polygon points="588.93,365.41 599.13,368.58 599.13,358.27 588.93,355.1" fill="#0014ff"/>
<polygon points="588.93,355.1 599.13,358.27 599.13,347.95 588.93,344.78" fill="#0044ff"/>
<polygon points="588.93,344.78 599.13,347.95 599.13,337.64 588.93,334.47" fill="#008bff"/>
<polygon points="588.93,334.47 599.13,337.64 599.13,327.33 588.93,324.16" fill="#00bbff"/>
<polygon points="588.93,324.16 599.13,327.33 599.13,317.01 588.93,313.84" fill="#00fffc"/>
<polygon points="588.93,313.84 599.13,317.01 599.13,306.7 588.93,303.53" fill="#00ffcc"/>
<polygon points="588.93,303.53 599.13,306.7 599.13,296.38 588.93,293.21" fill="#00ff85"/>
<polygon points="588.93,293.21 599.13,296.38 599.13,286.07 588.93,282.9" fill="#00ff55"/>
<polygon points="588.93,282.9 599.13,286.07 599.13,275.76 588.93,272.59" fill="#00ff0e"/>
<polygon points="588.93,272.59 599.13,275.76 599.13,265.44 588.93,262.27" fill="#22ff00"/>
<polygon points="588.93,262.27 599.13,265.44 599.13,255.13 588.93,251.96" fill="#69ff00"/>
<polygon points="588.93,251.96 599.13,255.13 599.13,244.81 588.93,241.64" fill="#99ff00"/>
<polygon points="588.93,241.64 599.13,244.81 599.13,234.5 588.93,231.33" fill="#e0ff00"/>
<polygon points="588.93,231.33 599.13,234.5 599.13,224.18 588.93,221.01" fill="#ffee00"/>
<polygon points="588.93,221.01 599.13,224.18 599.13,213.87 588.93,210.7" fill="#ffa700"/>
<polygon points="588.93,210.7 599.13,213.87 599.13,211.55 588.93,208.38" fill="#ff7700"/>
<polygon points="599.13,389.21 646.93,372.31 646.93,362 599.13,378.9" fill="#6300ff"/>
<polygon points="599.13,378.9 646.93,362 646.93,351.68 599.13,368.58" fill="#3300ff"/>
<polygon points="599.13,368.58 646.93,351.68 646.93,341.37 599.13,358.27" fill="#0014ff"/>
<polygon points="599.13,358.27 646.93,341.37 646.93,331.05 599.13,347.95" fill="#0044ff"/>
<polygon points="599.13,347.95 646.93,331.05 646.93,320.74 599.13,337.64" fill="#008bff"/>
<polygon points="599.13,337.64 646.93,320.74 646.93,310.43 599.13,327.33" fill="#00bbff"/>
<polygon points="599.13,327.33 646.93,310.43 646.93,300.11 599.13,317.01" fill="#00fffc"/>
<polygon points="599.13,317.01 646.93,300.11 646.93,289.8 599.13,306.7" fill="#00ffcc"/>
<polygon points="599.13,306.7 646.93,289.8 646.93,279.48 599.13,296.38" fill="#00ff85"/>
<polygon points="599.13,296.38 646.93,279.48 646.93,269.17 599.13,286.07" fill="#00ff55"/>
<polygon points="599.13,286.07 646.93,269.17 646.93,258.86 599.13,275.76" fill="#00ff0e"/>
<polygon points="599.13,275.76 646.93,258.86 646.93,248.54 599.13,265.44" fill="#22ff00"/>
<polygon points="599.13,265.44 646.93,248.54 646.93,238.23 599.13,255.13" fill="#69ff00"/>
<polygon points="599.13,255.13 646.93,238.23 646.93,227.91 599.13,244.81" fill="#99ff00"/>
<polygon points="599.13,244.81 646.93,227.91 646.93,217.6 599.13,234.5" fill="#e0ff00"/>
<polygon points="599.13,234.5 646.93,217.6 646.93,207.28 599.13,224.18" fill="#ffee00"/>
<polygon points="599.13,224.18 646.93,207.28 646.93,196.97 599.13,213.87" fill="#ffa700"/>
<polygon points="599.13,213.87 646.93,196.97 646.93,194.65 599.13,211.55" fill="#ff7700"/>
<polygon points="599.13,211.55 646.93,194.65 636.73,191.48 588.93,208.38" fill="#ff7700"/>
<polygon points="599.13,211.55 646.93,194.65 636.73,191.48 588.93,208.38" fill="none" stroke="#000"/>
<polygon points="588.93,386.04 599.13,389.21 599.13,211.55 588.93,208.38" fill="none" stroke="#000"/>
<polygon points="599.13,389.21 646.93,372.31 646.93,194.65 599.13,211.55" fill="none" stroke="#000"/>
<polygon points="599.13,389.21 609.34,392.38 609.34,382.07 599.13,378.9" fill="#6300ff"/>
<polygon points="599.13,378.9 609.34,382.07 609.34,371.75 599.13,368.58" fill="#3300ff"/>
<polygon points="599.13,368.58 609.34,371.75 609.34,361.44 599.13,358.27" fill="#0014ff"/>
<polygon points="599.13,358.27 609.34,361.44 609.34,351.12 599.13,347.95" fill="#0044ff"/>
<polygon points="599.13,347.95 609.34,351.12 609.34,340.81 599.13,337.64" fill="#008bff"/>
<polygon points="599.13,337.64 609.34,340.81 609.34,330.5 599.13,327.33" fill="#00bbff"/>
<polygon points="599.13,327.33 609.34,330.5 609.34,320.18 599.13,317.01" fill="#00fffc"/>
<polygon points="599.13,317.01 609.34,320.18 609.34,309.87 599.13,306.7" fill="#00ffcc"/>
<polygon points="599.13,306.7 609.34,309.87 609.34,299.55 599.13,296.38" fill="#00ff85"/>
<polygon points="599.13,296.38 609.34,299.55 609.34,289.24 599.13,286.07" fill="#00ff55"/>
<polygon points="599.13,286.07 609.34,289.24 609.34,278.93 599.13,275.76" fill="#00ff0e"/>
<polygon points="599.13,275.76 609.34,278.93 609.34,268.61 599.13,265.44" fill="#22ff00"/>
<polygon points="599.13,265.44 609.34,268.61 609.34,258.3 599.13,255.13" fill="#69ff00"/>
<polygon points="599.13,255.13 609.34,258.3 609.34,247.98 599.13,244.81" fill="#99ff00"/>
<polygon points="599.13,244.81 609.34,247.98 609.34,237.67 599.13,234.5" fill="#e0ff00"/>
<polygon points="599.13,234.5 609.34,237.67 609.34,227.35 599.13,224.18" fill="#ffee00"/>
<polygon points="599.13,224.18 609.34,227.35 609.34,219.13 599.13,215.96" fill="#ffa700"/>
<polygon points="609.34,392.38 657.14,375.48 657.14,365.17 609.34,382.07" fill="#6300ff"/>
<polygon points="609.34,382.07 657.14,365.17 657.14,354.85 609.34,371.75" fill="#3300ff"/>
<polygon points="609.34,371.75 657.14,354.85 657.14,344.54 609.34,361.44" fill="#0014ff"/>
<polygon points="609.34,361.44 657.14,344.54 657.14,334.22 609.34,351.12" fill="#0044ff"/>
<polygon points="609.34,351.12 657.14,334.22 657.14,323.91 609.34,340.81" fill="#008bff"/>
<polygon points="609.34,340.81 657.14,323.91 657.14,313.6 609.34,330.5" fill="#00bbff"/>
<polygon points="609.34,330.5 657.14,313.6 657.14,303.28 609.34,320.18" fill="#00fffc"/>
<polygon points="609.34,320.18 657.14,303.28 657.14,292.97 609.34,309.87" fill="#00ffcc"/>
<polygon points="609.34,309.87 657.14,292.97 657.14,282.65 609.34,299.55" fill="#00ff85"/>
<polygon points="609.34,299.55 657.14,282.65 657.14,272.34 609.34,289.24" fill="#00ff55"/>
<polygon points="609.34,289.24 657.14,272.34 657.14,262.03 609.34,278.93" fill="#00ff0e"/>
<polygon points="609.34,278.93 657.14,262.03 657.14,251.71 609.34,268.61" fill="#22ff00"/>
<polygon points="609.34,268.61 657.14,251.71 657.14,241.4 609.34,258.3" fill="#69ff00"/>
<polygon points="609.34,258.3 657.14,241.4 657.14,231.08 609.34,247.98" fill="#99ff00"/>
<polygon points="609.34,247.98 657.14,231.08 657.14,220.77 609.34,237.67" fill="#e0ff00"/>
<polygon points="609.34,237.67 657.14,220.77 657.14,210.45 609.34,227.35" fill="#ffee00"/>
<polygon points="609.34,227.35 657.14,210.45 657.14,202.23 609.34,219.13" fill="#ffa700"/>
<polygon points="609.34,219.13 657.14,202.23 646.93,199.06 599.13,215.96" fill="#ffa700"/>
<polygon points="609.34,219.13 657.14,202.23 646.93,199.06 599.13,215.96" fill="none" stroke="#000"/>
<polygon points="599.13,389.21 609.34,392.38 609.34,219.13 599.13,215.96" fill="none" stroke="#000"/>
<polygon points="609.34,392.38 657.14,375.48 657.14,202.23 609.34,219.13" fill="none" stroke="#000"/>
<polygon points="609.34,392.38 619.54,395.55 619.54,385.24 609.34,382.07" fill="#6300ff"/>
<polygon points="609.34,382.07 619.54,385.24 619.54,374.92 609.34,371.75" fill="#3300ff"/>
<polygon points="609.34,371.75 619.54,374.92 619.54,364.61 609.34,361.44" fill="#0014ff"/>
<polygon points="609.34,361.44 619.54,364.61 619.54,354.29 609.34,351.12" fill="#0044ff"/>
<polygon points="609.34,351.12 619.54,354.29 619.54,343.98 609.34,340.81" fill="#008bff"/>
<polygon points="609.34,340.81 619.54,343.98 619.54,333.67 609.34,330.5" fill="#00bbff"/>
<polygon points="609.34,330.5 619.54,333.67 619.54,323.35 609.34,320.18" fill="#00fffc"/>
<polygon points="609.34,320.18 619.54,323.35 619.54,313.04 609.34,309.87" fill="#00ffcc"/>
<polygon points="609.34,309.87 619.54,313.04 619.54,302.72 609.34,299.55" fill="#00ff85"/>
<polygon points="609.34,299.55 619.54,302.72 619.54,292.41 609.34,289.24" fill="#00ff55"/>
<polygon points="609.34,289.24 619.54,292.41 619.54,282.1 609.34,278.93" fill="#00ff0e"/>
<polygon points="609.34,278.93 619.54,282.1 619.54,271.78 609.34,268.61" fill="#22ff00"/>
<polygon points="609.34,268.61 619.54,271.78 619.54,261.47 609.34,258.3" fill="#69ff00"/>
<polygon points="609.34,258.3 619.54,261.47 619.54,255.27 609.34,252.1" fill="#99ff00"/>
<polygon points="619.54,395.55 667.34,378.65 667.34,368.34 619.54,385.24" fill="#6300ff"/>
<polygon points="619.54,385.24 667.34,368.34 667.34,358.02 619.54,374.92" fill="#3300ff"/>
<polygon points="619.54,374.92 667.34,358.02 667.34,347.71 619.54,364.61" fill="#0014ff"/>
<polygon points="619.54,364.61 667.34,347.71 667.34,337.39 619.54,354.29" fill="#0044ff"/>
<polygon points="619.54,354.29 667.34,337.39 667.34,327.08 619.54,343.98" fill="#008bff"/>
<polygon points="619.54,343.98 667.34,327.08 667.34,316.77 619.54,333.67" fill="#00bbff"/>
<polygon points="619.54,333.67 667.34,316.77 667.34,306.45 619.54,323.35" fill="#00fffc"/>
<polygon points="619.54,323.35 667.34,306.45 667.34,296.14 619.54,313.04" fill="#00ffcc"/>
<polygon points="619.54,313.04 667.34,296.14 667.34,285.82 619.54,302.72" fill="#00ff85"/>
<polygon points="619.54,302.72 667.34,285.82 667.34,275.51 619.54,292.41" fill="#00ff55"/>
<polygon points="619.54,292.41 667.34,275.51 667.34,265.2 619.54,282.1" fill="#00ff0e"/>
<polygon points="619.54,282.1 667.34,265.2 667.34,254.88 619.54,271.78" fill="#22ff00"/>
<polygon points="619.54,271.78 667.34,254.88 667.34,244.57 619.54,261.47" fill="#69ff00"/>
<polygon points="619.54,261.47 667.34,244.57 667.34,238.37 619.54,255.27" fill="#99ff00"/>
<polygon points="619.54,255.27 667.34,238.37 657.14,235.2 609.34,252.1" fill="#99ff00"/>
<polygon points="619.54,255.27 667.34,238.37 657.14,235.2 609.34,252.1" fill="none" stroke="#000"/>
<polygon points="609.34,392.38 619.54,395.55 619.54,255.27 609.34,252.1" fill="none" stroke="#000"/>
<polygon points="619.54,395.55 667.34,378.65 667.34,238.37 619.54,255.27" fill="none" stroke="#000"/>
<polygon points="619.54,395.55 629.74,398.72 629.74,388.41 619.54,385.24" fill="#6300ff"/>
<polygon points="619.54,385.24 629.74,388.41 629.74,378.09 619.54,374.92" fill="#3300ff"/>
<polygon points="619.54,374.92 629.74,378.09 629.74,367.78 619.54,364.61" fill="#0014ff"/>
<polygon points="619.54,364.61 629.74,367.78 629.74,357.46 619.54,354.29" fill="#0044ff"/>
<polygon points="619.54,354.29 629.74,357.46 629.74,347.15 619.54,343.98" fill="#008bff"/>
<polygon points="619.54,343.98 629.74,347.15 629.74,336.84 619.54,333.67" fill="#00bbff"/>
<polygon points="619.54,333.67 629.74,336.84 629.74,326.52 619.54,323.35" fill="#00fffc"/>
<polygon points="619.54,323.35 629.74,326.52 629.74,316.21 619.54,313.04" fill="#00ffcc"/>
<polygon points="619.54,313.04 629.74,316.21 629.74,305.89 619.54,302.72" fill="#00ff85"/>
<polygon points="619.54,302.72 629.74,305.89 629.74,297.02 619.54,293.85" fill="#00ff55"/>
<polygon points="629.74,398.72 677.54,381.82 677.54,371.51 629.74,388.41" fill="#6300ff"/>
<polygon points="629.74,388.41 677.54,371.51 677.54,361.19 629.74,378.09" fill="#3300ff"/>
<polygon points="629.74,378.09 677.54,361.19 677.54,350.88 629.74,367.78" fill="#0014ff"/>
<polygon points="629.74,367.78 677.54,350.88 677.54,340.56 629.74,357.46" fill="#0044ff"/>
<polygon points="629.74,357.46 677.54,340.56 677.54,330.25 629.74,347.15" fill="#008bff"/>
<polygon points="629.74,347.15 677.54,330.25 677.54,319.94 629.74,336.84" fill="#00bbff"/>
<polygon points="629.74,336.84 677.54,319.94 677.54,309.62 629.74,326.52" fill="#00fffc"/>
<polygon points="629.74,326.52 677.54,309.62 677.54,299.31 629.74,316.21" fill="#00ffcc"/>
<polygon points="629.74,316.21 677.54,299.31 677.54,288.99 629.74,305.89" fill="#00ff85"/>
<polygon points="629.74,305.89 677.54,288.99 677.54,280.12 629.74,297.02" fill="#00ff55"/>
<polygon points="629.74,297.02 677.54,280.12 667.34,276.95 619.54,293.85" fill="#00ff55"/>
<polygon points="629.74,297.02 677.54,280.12 667.34,276.95 619.54,293.85" fill="none" stroke="#000"/>
<polygon points="619.54,395.55 629.74,398.72 629.74,297.02 619.54,293.85" fill="none" stroke="#000"/>
<polygon points="629.74,398.72 677.54,381.82 677.54,280.12 629.74,297.02" fill="none" stroke="#000"/>
<polygon points="629.74,398.72 639.95,401.89 639.95,391.58 629.74,388.41" fill="#6300ff"/>
<polygon points="629.74,388.41 639.95,391.58 639.95,381.26 629.74,378.09" fill="#3300ff"/>
<polygon points="629.74,378.09 639.95,381.26 639.95,370.95 629.74,367.78" fill="#0014ff"/>
<polygon points="629.74,367.78 639.95,370.95 639.95,360.63 629.74,357.46" fill="#0044ff"/>
<polygon points="629.74,357.46 639.95,360.63 639.95,350.32 629.74,347.15" fill="#008bff"/>
<polygon points="629.74,347.15 639.95,350.32 639.95,340.01 629.74,336.84" fill="#00bbff"/>
<polygon points="629.74,336.84 639.95,340.01 639.95,329.69 629.74,326.52" fill="#00fffc"/>
<polygon points="629.74,326.52 639.95,329.69 639.95,319.38 629.74,316.21" fill="#00ffcc"/>
<polygon points="629.74,316.21 639.95,319.38 639.95,311.76 629.74,308.59" fill="#00ff85"/>
<polygon points="639.95,401.89 687.75,384.99 687.75,374.68 639.95,391.58" fill="#6300ff"/>
<polygon points="639.95,391.58 687.75,374.68 687.75,364.36 639.95,381.26" fill="#3300ff"/>
<polygon points="639.95,381.26 687.75,364.36 687.75,354.05 639.95,370.95" fill="#0014ff"/>
<polygon points="639.95,370.95 687.75,354.05 687.75,343.73 639.95,360.63" fill="#0044ff"/>
<polygon points="639.95,360.63 687.75,343.73 687.75,333.42 639.95,350.32" fill="#008bff"/>
<polygon points="639.95,350.32 687.75,333.42 687.75,323.11 639.95,340.01" fill="#00bbff"/>
<polygon points="639.95,340.01 687.75,323.11 687.75,312.79 639.95,329.69" fill="#00fffc"/>
<polygon points="639.95,329.69 687.75,312.79 687.75,302.48 639.95,319.38" fill="#00ffcc"/>
<polygon points="639.95,319.38 687.75,302.48 687.75,294.86 639.95,311.76" fill="#00ff85"/>
<polygon points="639.95,311.76 687.75,294.86 677.54,291.69 629.74,308.59" fill="#00ff85"/>
<polygon points="639.95,311.76 687.75,294.86 677.54,291.69 629.74,308.59" fill="none" stroke="#000"/>
<polygon points="629.74,398.72 639.95,401.89 639.95,311.76 629.74,308.59" fill="none" stroke="#000"/>
<polygon points="639.95,401.89 687.75,384.99 687.75,294.86 639.95,311.76" fill="none" stroke="#000"/>
<polygon points="639.95,401.89 650.15,405.06 650.15,394.75 639.95,391.58" fill="#6300ff"/>
<polygon points="639.95,391.58 650.15,394.75 650.15,384.43 639.95,381.26" fill="#3300ff"/>
<polygon points="639.95,381.26 650.15,384.43 650.15,374.12 639.95,370.95" fill="#0014ff"/>
<polygon points="639.95,370.95 650.15,374.12 650.15,363.8 639.95,360.63" fill="#0044ff"/>
<polygon points="639.95,360.63 650.15,363.8 650.15,353.49 639.95,350.32" fill="#008bff"/>
<polygon points="639.95,350.32 650.15,353.49 650.15,343.18 639.95,340.01" fill="#00bbff"/>
<polygon points="639.95,340.01 650.15,343.18 650.15,335.27 639.95,332.1" fill="#00fffc"/>
<polygon points="650.15,405.06 697.95,388.16 697.95,377.85 650.15,394.75" fill="#6300ff"/>
<polygon points="650.15,394.75 697.95,377.85 697.95,367.53 650.15,384.43" fill="#3300ff"/>
<polygon points="650.15,384.43 697.95,367.53 697.95,357.22 650.15,374.12" fill="#0014ff"/>
<polygon points="650.15,374.12 697.95,357.22 697.95,346.9 650.15,363.8" fill="#0044ff"/>
<polygon points="650.15,363.8 697.95,346.9 697.95,336.59 650.15,353.49" fill="#008bff"/>
<polygon points="650.15,353.49 697.95,336.59 697.95,326.28 650.15,343.18" fill="#00bbff"/>
<polygon points="650.15,343.18 697.95,326.28 697.95,318.37 650.15,335.27" fill="#00fffc"/>
<polygon points="650.15,335.27 697.95,318.37 687.75,315.2 639.95,332.1" fill="#00fffc"/>
<polygon points="650.15,335.27 697.95,318.37 687.75,315.2 639.95,332.1" fill="none" stroke="#000"/>
<polygon points="639.95,401.89 650.15,405.06 650.15,335.27 639.95,332.1" fill="none" stroke="#000"/>
<polygon points="650.15,405.06 697.95,388.16 697.95,318.37 650.15,335.27" fill="none" stroke="#000"/>
<polygon points="650.15,405.06 660.36,408.23 660.36,397.92 650.15,394.75" fill="#6300ff"/>
<polygon points="650.15,394.75 660.36,397.92 660.36,387.6 650.15,384.43" fill="#3300ff"/>
<polygon points="650.15,384.43 660.36,387.6 660.36,377.29 650.15,374.12" fill="#0014ff"/>
<polygon points="650.15,374.12 660.36,377.29 660.36,366.97 650.15,363.8" fill="#0044ff"/>
<polygon points="650.15,363.8 660.36,366.97 660.36,359.13 650.15,355.96" fill="#008bff"/>
<polygon points="660.36,408.23 708.16,391.33 708.16,381.02 660.36,397.92" fill="#6300ff"/>
<polygon points="660.36,397.92 708.16,381.02 708.16,370.7 660.36,387.6" fill="#3300ff"/>
<polygon points="660.36,387.6 708.16,370.7 708.16,360.39 660.36,377.29" fill="#0014ff"/>
<polygon points="660.36,377.29 708.16,360.39 708.16,350.07 660.36,366.97" fill="#0044ff"/>
<polygon points="660.36,366.97 708.16,350.07 708.16,342.23 660.36,359.13" fill="#008bff"/>
<polygon points="660.36,359.13 708.16,342.23 697.95,339.06 650.15,355.96" fill="#008bff"/>
<polygon points="660.36,359.13 708.16,342.23 697.95,339.06 650.15,355.96" fill="none" stroke="#000"/>
<polygon points="650.15,405.06 660.36,408.23 660.36,359.13 650.15,355.96" fill="none" stroke="#000"/>
<polygon points="660.36,408.23 708.16,391.33 708.16,342.23 660.36,359.13" fill="none" stroke="#000"/>
<polygon points="660.36,408.23 670.56,411.4 670.56,401.09 660.36,397.92" fill="#6300ff"/>
<polygon points="660.36,397.92 670.56,401.09 670.56,390.77 660.36,387.6" fill="#3300ff"/>
<polygon points="660.36,387.6 670.56,390.77 670.56,380.46 660.36,377.29" fill="#0014ff"/>
<polygon points="660.36,377.29 670.56,380.46 670.56,374.58 660.36,371.41" fill="#0044ff"/>
<polygon points="670.56,411.4 718.36,394.5 718.36,384.19 670.56,401.09" fill="#6300ff"/>
<polygon points="670.56,401.09 718.36,384.19 718.36,373.87 670.56,390.77" fill="#3300ff"/>
<polygon points="670.56,390.77 718.36,373.87 718.36,363.56 670.56,380.46" fill="#0014ff"/>
<polygon points="670.56,380.46 718.36,363.56 718.36,357.68 670.56,374.58" fill="#0044ff"/>
<polygon points="670.56,374.58 718.36,357.68 708.16,354.51 660.36,371.41" fill="#0044ff"/>
<polygon points="670.56,374.58 718.36,357.68 708.16,354.51 660.36,371.41" fill="none" stroke="#000"/>
<polygon points="660.36,408.23 670.56,411.4 670.56,374.58 660.36,371.41" fill="none" stroke="#000"/>
<polygon points="670.56,411.4 718.36,394.5 718.36,357.68 670.56,374.58" fill="none" stroke="#000"/>
<polygon points="670.56,411.4 680.76,414.57 680.76,404.26 670.56,401.09" fill="#6300ff"/>
<polygon points="670.56,401.09 680.76,404.26 680.76,395.46 670.56,392.29" fill="#3300ff"/>
<polygon points="680.76,414.57 728.56,397.67 728.56,387.36 680.76,404.26" fill="#6300ff"/>
<polygon points="680.76,404.26 728.56,387.36 728.56,378.56 680.76,395.46" fill="#3300ff"/>
<polygon points="680.76,395.46 728.56,378.56 718.36,375.39 670.56,392.29" fill="#3300ff"/>
<polygon points="680.76,395.46 728.56,378.56 718.36,375.39 670.56,392.29" fill="none" stroke="#000"/>
<polygon points="670.56,411.4 680.76,414.57 680.76,395.46 670.56,392.29" fill="none" stroke="#000"/>
<polygon points="680.76,414.57 728.56,397.67 728.56,378.56 680.76,395.46" fill="none" stroke="#000"/>
<polygon points="680.76,414.57 690.97,417.74 690.97,407.43 680.76,404.26" fill="#6300ff"/>
<polygon points="680.76,404.26 690.97,407.43 690.97,403.15 680.76,399.98" fill="#3300ff"/>
<polygon points="690.97,417.74 738.77,400.84 738.77,390.53 690.97,407.43" fill="#6300ff"/>
<polygon points="690.97,407.43 738.77,390.53 738.77,386.25 690.97,403.15" fill="#3300ff"/>
<polygon points="690.97,403.15 738.77,386.25 728.56,383.08 680.76,399.98" fill="#3300ff"/>
<polygon points="690.97,403.15 738.77,386.25 728.56,383.08 680.76,399.98" fill="none" stroke="#000"/>
<polygon points="680.76,414.57 690.97,417.74 690.97,403.15 680.76,399.98" fill="none" stroke="#000"/>
<polygon points="690.97,417.74 738.77,400.84 738.77,386.25 690.97,403.15" fill="none" stroke="#000"/>
<polygon points="690.97,417.74 701.17,420.91 701.17,412.6 690.97,409.43" fill="#6300ff"/>
<polygon points="701.17,420.91 748.97,404.01 748.97,395.7 701.17,412.6" fill="#6300ff"/>
<polygon points="701.17,412.6 748.97,395.7 738.77,392.53 690.97,409.43" fill="#6300ff"/>
<polygon points="701.17,412.6 748.97,395.7 738.77,392.53 690.97,409.43" fill="none" stroke="#000"/>
<polygon points="690.97,417.74 701.17,420.91 701.17,412.6 690.97,409.43" fill="none" stroke="#000"/>
<polygon points="701.17,420.91 748.97,404.01 748.97,395.7 701.17,412.6" fill="none" stroke="#000"/>
<polygon points="701.17,420.91 711.38,424.08 711.38,419.87 701.17,416.7" fill="#6300ff"/>
<polygon points="711.38,424.08 759.18,407.18 759.18,402.97 711.38,419.87" fill="#6300ff"/>
<polygon points="711.38,419.87 759.18,402.97 748.97,399.8 701.17,416.7" fill="#6300ff"/>
<polygon points="711.38,419.87 759.18,402.97 748.97,399.8 701.17,416.7" fill="none" stroke="#000"/>
<polygon points="701.17,420.91 711.38,424.08 711.38,419.87 701.17,416.7" fill="none" stroke="#000"/>
<polygon points="711.38,424.08 759.18,407.18 759.18,402.97 711.38,419.87" fill="none" stroke="#000"/>
<polygon points="711.38,424.08 721.58,427.25 721.58,424.21 711.38,421.04" fill="#6300ff"/>
<polygon points="721.58,427.25 769.38,410.35 769.38,407.31 721.58,424.21" fill="#6300ff"/>
<polygon points="721.58,424.21 769.38,407.31 759.18,404.14 711.38,421.04" fill="#6300ff"/>
<polygon points="721.58,424.21 769.38,407.31 759.18,404.14 711.38,421.04" fill="none" stroke="#000"/>
<polygon points="711.38,424.08 721.58,427.25 721.58,424.21 711.38,421.04" fill="none" stroke="#000"/>
<polygon points="721.58,427.25 769.38,410.35 769.38,407.31 721.58,424.21" fill="none" stroke="#000"/>
<polygon points="721.58,427.25 731.78,430.42 731.78,428.75 721.58,425.58" fill="#6300ff"/>
<polygon points="731.78,430.42 779.58,413.52 779.58,411.85 731.78,428.75" fill="#6300ff"/>
<polygon points="731.78,428.75 779.58,411.85 769.38,408.68 721.58,425.58" fill="#6300ff"/>
<polygon points="731.78,428.75 779.58,411.85 769.38,408.68 721.58,425.58" fill="none" stroke="#000"/>
<polygon points="721.58,427.25 731.78,430.42 731.78,428.75 721.58,425.58" fill="none" stroke="#000"/>
<polygon points="731.78,430.42 779.58,413.52 779.58,411.85 731.78,428.75" fill="none" stroke="#000"/>
<polygon points="731.78,430.42 741.99,433.59 741.99,432.71 731.78,429.54" fill="#6300ff"/>
<polygon points="741.99,433.59 789.79,416.69 789.79,415.81 741.99,432.71" fill="#6300ff"/>
<polygon points="741.99,432.71 789.79,415.81 779.58,412.64 731.78,429.54" fill="#6300ff"/>
<polygon points="741.99,432.71 789.79,415.81 779.58,412.64 731.78,429.54" fill="none" stroke="#000"/>
<polygon points="731.78,430.42 741.99,433.59 741.99,432.71 731.78,429.54" fill="none" stroke="#000"/>
<polygon points="741.99,433.59 789.79,416.69 789.79,415.81 741.99,432.71" fill="none" stroke="#000"/>
<polygon points="741.99,433.59 752.19,436.76 752.19,436.31 741.99,433.14" fill="#6300ff"/>
<polygon points="752.19,436.76 799.99,419.86 799.99,419.41 752.19,436.31" fill="#6300ff"/>
<polygon points="752.19,436.31 799.99,419.41 789.79,416.24 741.99,433.14" fill="#6300ff"/>
<polygon points="752.19,436.31 799.99,419.41 789.79,416.24 741.99,433.14" fill="none" stroke="#000"/>
<polygon points="741.99,433.59 752.19,436.76 752.19,436.31 741.99,433.14" fill="none" stroke="#000"/>
<polygon points="752.19,436.76 799.99,419.86 799.99,419.41 752.19,436.31" fill="none" stroke="#000"/>
<polygon points="752.19,436.76 762.4,439.93 762.4,439.71 752.19,436.54" fill="#6300ff"/>
<polygon points="762.4,439.93 810.2,423.03 810.2,422.81 762.4,439.71" fill="#6300ff"/>
<polygon points="762.4,439.71 810.2,422.81 799.99,419.64 752.19,436.54" fill="#6300ff"/>
<polygon points="762.4,439.71 810.2,422.81 799.99,419.64 752.19,436.54" fill="none" stroke="#000"/>
<polygon points="752.19,436.76 762.4,439.93 762.4,439.71 752.19,436.54" fill="none" stroke="#000"/>
<polygon points="762.4,439.93 810.2,423.03 810.2,422.81 762.4,439.71" fill="none" stroke="#000"/>
<polygon points="762.4,439.93 772.6,443.1 772.6,443 762.4,439.83" fill="#6300ff"/>
<polygon points="772.6,443.1 820.4,426.2 820.4,426.1 772.6,443" fill="#6300ff"/>
<polygon points="772.6,443 820.4,426.1 810.2,422.93 762.4,439.83" fill="#6300ff"/>
<polygon points="772.6,443 820.4,426.1 810.2,422.93 762.4,439.83" fill="none" stroke="#000"/>
<polygon points="762.4,439.93 772.6,443.1 772.6,443 762.4,439.83" fill="none" stroke="#000"/>
<polygon points="772.6,443.1 820.4,426.2 820.4,426.1 772.6,443" fill="none" stroke="#000"/>
<polygon points="418.68,364.9 428.88,368.07 428.88,357.76 418.68,354.59" fill="#6300ff"/>
<polygon points="418.68,354.59 428.88,357.76 428.88,347.44 418.68,344.27" fill="#3300ff"/>
<polygon points="418.68,344.27 428.88,347.44 428.88,337.13 418.68,333.96" fill="#0014ff"/>
<polygon points="418.68,333.96 428.88,337.13 428.88,335.1 418.68,331.93" fill="#0044ff"/>
<polygon points="428.88,368.07 476.68,351.17 476.68,340.86 428.88,357.76" fill="#6300ff"/>
<polygon points="428.88,357.76 476.68,340.86 476.68,330.54 428.88,347.44" fill="#3300ff"/>
<polygon points="428.88,347.44 476.68,330.54 476.68,320.23 428.88,337.13" fill="#0014ff"/>
<polygon points="428.88,337.13 476.68,320.23 476.68,318.2 428.88,335.1" fill="#0044ff"/>
<polygon points="428.88,335.1 476.68,318.2 466.48,315.03 418.68,331.93" fill="#0044ff"/>
<polygon points="428.88,335.1 476.68,318.2 466.48,315.03 418.68,331.93" fill="none" stroke="#000"/>
<polygon points="418.68,364.9 428.88,368.07 428.88,335.1 418.68,331.93" fill="none" stroke="#000"/>
<polygon points="428.88,368.07 476.68,351.17 476.68,318.2 428.88,335.1" fill="none" stroke="#000"/>
<polygon points="428.88,368.07 439.09,371.24 439.09,360.93 428.88,357.76" fill="#6300ff"/>
<polygon points="428.88,357.76 439.09,360.93 439.09,350.61 428.88,347.44" fill="#3300ff"/>
<polygon points="428.88,347.44 439.09,350.61 439.09,340.3 428.88,337.13" fill="#0014ff"/>
<polygon points="428.88,337.13 439.09,340.3 439.09,329.98 428.88,326.81" fill="#0044ff"/>
<polygon points="428.88,326.81 439.09,329.98 439.09,321.27 428.88,318.1" fill="#008bff"/>
<polygon points="439.09,371.24 486.89,354.34 486.89,344.03 439.09,360.93" fill="#6300ff"/>
<polygon points="439.09,360.93 486.89,344.03 486.89,333.71 439.09,350.61" fill="#3300ff"/>
<polygon points="439.09,350.61 486.89,333.71 486.89,323.4 439.09,340.3" fill="#0014ff"/>
<polygon points="439.09,340.3 486.89,323.4 486.89,313.08 439.09,329.98" fill="#0044ff"/>
<polygon points="439.09,329.98 486.89,313.08 486.89,304.37 439.09,321.27" fill="#008bff"/>
<polygon points="439.09,321.27 486.89,304.37 476.68,301.2 428.88,318.1" fill="#008bff"/>
<polygon points="439.09,321.27 486.89,304.37 476.68,301.2 428.88,318.1" fill="none" stroke="#000"/>
<polygon points="428.88,368.07 439.09,371.24 439.09,321.27 428.88,318.1" fill="none" stroke="#000"/>
<polygon points="439.09,371.24 486.89,354.34 486.89,304.37 439.09,321.27" fill="none" stroke="#000"/>
<polygon points="439.09,371.24 449.29,374.41 449.29,364.1 439.09,360.93" fill="#6300ff"/>
<polygon points="439.09,360.93 449.29,364.1 449.29,353.78 439.09,350.61" fill="#3300ff"/>
<polygon points="439.09,350.61 449.29,353.78 449.29,343.47 439.09,340.3" fill="#0014ff"/>
<polygon points="439.09,340.3 449.29,343.47 449.29,333.15 439.09,329.98" fill="#0044ff"/>
<polygon points="439.09,329.98 449.29,333.15 449.29,322.84 439.09,319.67" fill="#008bff"/>
<polygon points="439.09,319.67 449.29,322.84 449.29,312.53 439.09,309.36" fill="#00bbff"/>
<polygon points="439.09,309.36 449.29,312.53 449.29,304.27 439.09,301.1" fill="#00fffc"/>
<polygon points="449.29,374.41 497.09,357.51 497.09,347.2 449.29,364.1" fill="#6300ff"/>
<polygon points="449.29,364.1 497.09,347.2 497.09,336.88 449.29,353.78" fill="#3300ff"/>
<polygon points="449.29,353.78 497.09,336.88 497.09,326.57 449.29,343.47" fill="#0014ff"/>
<polygon points="449.29,343.47 497.09,326.57 497.09,316.25 449.29,333.15" fill="#0044ff"/>
<polygon points="449.29,333.15 497.09,316.25 497.09,305.94 449.29,322.84" fill="#008bff"/>
<polygon points="449.29,322.84 497.09,305.94 497.09,295.63 449.29,312.53" fill="#00bbff"/>
<polygon points="449.29,312.53 497.09,295.63 497.09,287.37 449.29,304.27" fill="#00fffc"/>
<polygon points="449.29,304.27 497.09,287.37 486.89,284.2 439.09,301.1" fill="#00fffc"/>
<polygon points="449.29,304.27 497.09,287.37 486.89,284.2 439.09,301.1" fill="none" stroke="#000"/>
<polygon points="439.09,371.24 449.29,374.41 449.29,304.27 439.09,301.1" fill="none" stroke="#000"/>
<polygon points="449.29,374.41 497.09,357.51 497.09,287.37 449.29,304.27" fill="none" stroke="#000"/>
<polygon points="449.29,374.41 459.5,377.58 459.5,367.27 449.29,364.1" fill="#6300ff"/>
<polygon points="449.29,364.1 459.5,367.27 459.5,356.95 449.29,353.78" fill="#3300ff"/>
<polygon points="449.29,353.78 459.5,356.95 459.5,346.64 449.29,343.47" fill="#0014ff"/>
<polygon points="449.29,343.47 459.5,346.64 459.5,336.32 449.29,333.15" fill="#0044ff"/>
<polygon points="449.29,333.15 459.5,336.32 459.5,326.01 449.29,322.84" fill="#008bff"/>
<polygon points="449.29,322.84 459.5,326.01 459.5,315.7 449.29,312.53" fill="#00bbff"/>
<polygon points="449.29,312.53 459.5,315.7 459.5,305.38 449.29,302.21" fill="#00fffc"/>
<polygon points="449.29,302.21 459.5,305.38 459.5,296.92 449.29,293.75" fill="#00ffcc"/>
<polygon points="459.5,377.58 507.3,360.68 507.3,350.37 459.5,367.27" fill="#6300ff"/>
<polygon points="459.5,367.27 507.3,350.37 507.3,340.05 459.5,356.95" fill="#3300ff"/>
<polygon points="459.5,356.95 507.3,340.05 507.3,329.74 459.5,346.64" fill="#0014ff"/>
<polygon points="459.5,346.64 507.3,329.74 507.3,319.42 459.5,336.32" fill="#0044ff"/>
<polygon points="459.5,336.32 507.3,319.42 507.3,309.11 459.5,326.01" fill="#008bff"/>
<polygon points="459.5,326.01 507.3,309.11 507.3,298.8 459.5,315.7" fill="#00bbff"/>
<polygon points="459.5,315.7 507.3,298.8 507.3,288.48 459.5,305.38" fill="#00fffc"/>
<polygon points="459.5,305.38 507.3,288.48 507.3,280.02 459.5,296.92" fill="#00ffcc"/>
<polygon points="459.5,296.92 507.3,280.02 497.09,276.85 449.29,293.75" fill="#00ffcc"/>
<polygon points="459.5,296.92 507.3,280.02 497.09,276.85 449.29,293.75" fill="none" stroke="#000"/>
<polygon points="449.29,374.41 459.5,377.58 459.5,296.92 449.29,293.75" fill="none" stroke="#000"/>
<polygon points="459.5,377.58 507.3,360.68 507.3,280.02 459.5,296.92" fill="none" stroke="#000"/>
<polygon points="459.5,377.58 469.7,380.75 469.7,370.44 459.5,367.27" fill="#6300ff"/>
<polygon points="459.5,367.27 469.7,370.44 469.7,360.12 459.5,356.95" fill="#3300ff"/>
<polygon points="459.5,356.95 469.7,360.12 469.7,349.81 459.5,346.64" fill="#0014ff"/>
<polygon points="459.5,346.64 469.7,349.81 469.7,339.49 459.5,336.32" fill="#0044ff"/>
<polygon points="459.5,336.32 469.7,339.49 469.7,329.18 459.5,326.01" fill="#008bff"/>
<polygon points="459.5,326.01 469.7,329.18 469.7,318.87 459.5,315.7" fill="#00bbff"/>
<polygon points="459.5,315.7 469.7,318.87 469.7,308.55 459.5,305.38" fill="#00fffc"/>
<polygon points="459.5,305.38 469.7,308.55 469.7,298.24 459.5,295.07" fill="#00ffcc"/>
<polygon points="459.5,295.07 469.7,298.24 469.7,287.92 459.5,284.75" fill="#00ff85"/>
<polygon points="459.5,284.75 469.7,287.92 469.7,277.61 459.5,274.44" fill="#00ff55"/>
<polygon points="459.5,274.44 469.7,277.61 469.7,275.54 459.5,272.37" fill="#00ff0e"/>
<polygon points="469.7,380.75 517.5,363.85 517.5,353.54 469.7,370.44" fill="#6300ff"/>
<polygon points="469.7,370.44 517.5,353.54 517.5,343.22 469.7,360.12" fill="#3300ff"/>
<polygon points="469.7,360.12 517.5,343.22 517.5,332.91 469.7,349.81" fill="#0014ff"/>
<polygon points="469.7,349.81 517.5,332.91 517.5,322.59 469.7,339.49" fill="#0044ff"/>
<polygon points="469.7,339.49 517.5,322.59 517.5,312.28 469.7,329.18" fill="#008bff"/>
<polygon points="469.7,329.18 517.5,312.28 517.5,301.97 469.7,318.87" fill="#00bbff"/>
<polygon points="469.7,318.87 517.5,301.97 517.5,291.65 469.7,308.55" fill="#00fffc"/>
<polygon points="469.7,308.55 517.5,291.65 517.5,281.34 469.7,298.24" fill="#00ffcc"/>
<polygon points="469.7,298.24 517.5,281.34 517.5,271.02 469.7,287.92" fill="#00ff85"/>
<polygon points="469.7,287.92 517.5,271.02 517.5,260.71 469.7,277.61" fill="#00ff55"/>
<polygon points="469.7,277.61 517.5,260.71 517.5,258.64 469.7,275.54" fill="#00ff0e"/>
<polygon points="469.7,275.54 517.5,258.64 507.3,255.47 459.5,272.37" fill="#00ff0e"/>
<polygon points="469.7,275.54 517.5,258.64 507.3,255.47 459.5,272.37" fill="none" stroke="#000"/>
<polygon points="459.5,377.58 469.7,380.75 469.7,275.54 459.5,272.37" fill="none" stroke="#000"/>
<polygon points="469.7,380.75 517.5,363.85 517.5,258.64 469.7,275.54" fill="none" stroke="#000"/>
<polygon points="469.7,380.75 479.9,383.92 479.9,373.61 469.7,370.44" fill="#6300ff"/>
<polygon points="469.7,370.44 479.9,373.61 479.9,363.29 469.7,360.12" fill="#3300ff"/>
<polygon points="469.7,360.12 479.9,363.29 479.9,352.98 469.7,349.81" fill="#0014ff"/>
<polygon points="469.7,349.81 479.9,352.98 479.9,342.66 469.7,339.49" fill="#0044ff"/>
<polygon points="469.7,339.49 479.9,342.66 479.9,332.35 469.7,329.18" fill="#008bff"/>
<polygon points="469.7,329.18 479.9,332.35 479.9,322.04 469.7,318.87" fill="#00bbff"/>
<polygon points="469.7,318.87 479.9,322.04 479.9,311.72 469.7,308.55" fill="#00fffc"/>
<polygon points="469.7,308.55 479.9,311.72 479.9,301.41 469.7,298.24" fill="#00ffcc"/>
<polygon points="469.7,298.24 479.9,301.41 479.9,291.09 469.7,287.92" fill="#00ff85"/>
<polygon points="469.7,287.92 479.9,291.09 479.9,280.78 469.7,277.61" fill="#00ff55"/>
<polygon points="469.7,277.61 479.9,280.78 479.9,270.47 469.7,267.3" fill="#00ff0e"/>
<polygon points="469.7,267.3 479.9,270.47 479.9,260.15 469.7,256.98" fill="#22ff00"/>
<polygon points="469.7,256.98 479.9,260.15 479.9,252.76 469.7,249.59" fill="#69ff00"/>
<polygon points="479.9,383.92 527.7,367.02 527.7,356.71 479.9,373.61" fill="#6300ff"/>
<polygon points="479.9,373.61 527.7,356.71 527.7,346.39 479.9,363.29" fill="#3300ff"/>
<polygon points="479.9,363.29 527.7,346.39 527.7,336.08 479.9,352.98" fill="#0014ff"/>
<polygon points="479.9,352.98 527.7,336.08 527.7,325.76 479.9,342.66" fill="#0044ff"/>
<polygon points="479.9,342.66 527.7,325.76 527.7,315.45 479.9,332.35" fill="#008bff"/>
<polygon points="479.9,332.35 527.7,315.45 527.7,305.14 479.9,322.04" fill="#00bbff"/>
<polygon points="479.9,322.04 527.7,305.14 527.7,294.82 479.9,311.72" fill="#00fffc"/>
<polygon points="479.9,311.72 527.7,294.82 527.7,284.51 479.9,301.41" fill="#00ffcc"/>
<polygon points="479.9,301.41 527.7,284.51 527.7,274.19 479.9,291.09" fill="#00ff85"/>
<polygon points="479.9,291.09 527.7,274.19 527.7,263.88 479.9,280.78" fill="#00ff55"/>
<polygon points="479.9,280.78 527.7,263.88 527.7,253.57 479.9,270.47" fill="#00ff0e"/>
<polygon points="479.9,270.47 527.7,253.57 527.7,243.25 479.9,260.15" fill="#22ff00"/>
<polygon points="479.9,260.15 527.7,243.25 527.7,235.86 479.9,252.76" fill="#69ff00"/>
<polygon points="479.9,252.76 527.7,235.86 517.5,232.69 469.7,249.59" fill="#69ff00"/>
<polygon points="479.9,252.76 527.7,235.86 517.5,232.69 469.7,249.59" fill="none" stroke="#000"/>
<polygon points="469.7,380.75 479.9,383.92 479.9,252.76 469.7,249.59" fill="none" stroke="#000"/>
<polygon points="479.9,383.92 527.7,367.02 527.7,235.86 479.9,252.76" fill="none" stroke="#000"/>
<polygon points="479.9,383.92 490.11,387.09 490.11,376.78 479.9,373.61" fill="#6300ff"/>
<polygon points="479.9,373.61 490.11,376.78 490.11,366.46 479.9,363.29" fill="#3300ff"/>
<polygon points="479.9,363.29 490.11,366.46 490.11,356.15 479.9,352.98" fill="#0014ff"/>
<polygon points="479.9,352.98 490.11,356.15 490.11,345.83 479.9,342.66" fill="#0044ff"/>
<polygon points="479.9,342.66 490.11,345.83 490.11,335.52 479.9,332.35" fill="#008bff"/>
<polygon points="479.9,332.35 490.11,335.52 490.11,325.21 479.9,322.04" fill="#00bbff"/>
<polygon points="479.9,322.04 490.11,325.21 490.11,314.89 479.9,311.72" fill="#00fffc"/>
<polygon points="479.9,311.72 490.11,314.89 490.11,304.58 479.9,301.41" fill="#00ffcc"/>
<polygon points="479.9,301.41 490.11,304.58 490.11,294.26 479.9,291.09" fill="#00ff85"/>
<polygon points="479.9,291.09 490.11,294.26 490.11,283.95 479.9,280.78" fill="#00ff55"/>
<polygon points="479.9,280.78 490.11,283.95 490.11,273.64 479.9,270.47" fill="#00ff0e"/>
<polygon points="479.9,270.47 490.11,273.64 490.11,263.32 479.9,260.15" fill="#22ff00"/>
<polygon points="479.9,260.15 490.11,263.32 490.11,253.01 479.9,249.84" fill="#69ff00"/>
<polygon points="479.9,249.84 490.11,253.01 490.11,242.69 479.9,239.52" fill="#99ff00"/>
<polygon points="479.9,239.52 490.11,242.69 490.11,232.38 479.9,229.21" fill="#e0ff00"/>
<polygon points="479.9,229.21 490.11,232.38 490.11,229.27 479.9,226.1" fill="#ffee00"/>
<polygon points="490.11,387.09 537.91,370.19 537.91,359.88 490.11,376.78" fill="#6300ff"/>
<polygon points="490.11,376.78 537.91,359.88 537.91,349.56 490.11,366.46" fill="#3300ff"/>
<polygon points="490.11,366.46 537.91,349.56 537.91,339.25 490.11,356.15" fill="#0014ff"/>
<polygon points="490.11,356.15 537.91,339.25 537.91,328.93 490.11,345.83" fill="#0044ff"/>
<polygon points="490.11,345.83 537.91,328.93 537.91,318.62 490.11,335.52" fill="#008bff"/>
<polygon points="490.11,335.52 537.91,318.62 537.91,308.31 490.11,325.21" fill="#00bbff"/>
<polygon points="490.11,325.21 537.91,308.31 537.91,297.99 490.11,314.89" fill="#00fffc"/>
<polygon points="490.11,314.89 537.91,297.99 537.91,287.68 490.11,304.58" fill="#00ffcc"/>
<polygon points="490.11,304.58 537.91,287.68 537.91,277.36 490.11,294.26" fill="#00ff85"/>
<polygon points="490.11,294.26 537.91,277.36 537.91,267.05 490.11,283.95" fill="#00ff55"/>
<polygon points="490.11,283.95 537.91,267.05 537.91,256.74 490.11,273.64" fill="#00ff0e"/>
<polygon points="490.11,273.64 537.91,256.74 537.91,246.42 490.11,263.32" fill="#22ff00"/>
<polygon points="490.11,263.32 537.91,246.42 537.91,236.11 490.11,253.01" fill="#69ff00"/>
<polygon points="490.11,253.01 537.91,236.11 537.91,225.79 490.11,242.69" fill="#99ff00"/>
<polygon points="490.11,242.69 537.91,225.79 537.91,215.48 490.11,232.38" fill="#e0ff00"/>
<polygon points="490.11,232.38 537.91,215.48 537.91,212.38 490.11,229.27" fill="#ffee00"/>
<polygon points="490.11,229.27 537.91,212.38 527.7,209.2 479.9,226.1" fill="#ffee00"/>
<polygon points="490.11,229.27 537.91,212.38 527.7,209.2 479.9,226.1" fill="none" stroke="#000"/>
<polygon points="479.9,383.92 490.11,387.09 490.11,229.27 479.9,226.1" fill="none" stroke="#000"/>
<polygon points="490.11,387.09 537.91,370.19 537.91,212.38 490.11,229.27" fill="none" stroke="#000"/>
<polygon points="490.11,387.09 500.31,390.26 500.31,379.95 490.11,376.78" fill="#6300ff"/>
<polygon points="490.11,376.78 500.31,379.95 500.31,369.63 490.11,366.46" fill="#3300ff"/>
<polygon points="490.11,366.46 500.31,369.63 500.31,359.32 490.11,356.15" fill="#0014ff"/>
<polygon points="490.11,356.15 500.31,359.32 500.31,349 490.11,345.83" fill="#0044ff"/>
<polygon points="490.11,345.83 500.31,349 500.31,338.69 490.11,335.52" fill="#008bff"/>
<polygon points="490.11,335.52 500.31,338.69 500.31,328.38 490.11,325.21" fill="#00bbff"/>
<polygon points="490.11,325.21 500.31,328.38 500.31,318.06 490.11,314.89" fill="#00fffc"/>
<polygon points="490.11,314.89 500.31,318.06 500.31,307.75 490.11,304.58" fill="#00ffcc"/>
<polygon points="490.11,304.58 500.31,307.75 500.31,297.43 490.11,294.26" fill="#00ff85"/>
<polygon points="490.11,294.26 500.31,297.43 500.31,287.12 490.11,283.95" fill="#00ff55"/>
<polygon points="490.11,283.95 500.31,287.12 500.31,276.81 490.11,273.64" fill="#00ff0e"/>
<polygon points="490.11,273.64 500.31,276.81 500.31,266.49 490.11,263.32" fill="#22ff00"/>
<polygon points="490.11,263.32 500.31,266.49 500.31,256.18 490.11,253.01" fill="#69ff00"/>
<polygon points="490.11,253.01 500.31,256.18 500.31,245.86 490.11,242.69" fill="#99ff00"/>
<polygon points="490.11,242.69 500.31,245.86 500.31,235.55 490.11,232.38" fill="#e0ff00"/>
<polygon points="490.11,232.38 500.31,235.55 500.31,225.23 490.11,222.06" fill="#ffee00"/>
<polygon points="490.11,222.06 500.31,225.23 500.31,217.72 490.11,214.55" fill="#ffa700"/>
<polygon points="500.31,390.26 548.11,373.36 548.11,363.05 500.31,379.95" fill="#6300ff"/>
<polygon points="500.31,379.95 548.11,363.05 548.11,352.73 500.31,369.63" fill="#3300ff"/>
<polygon points="500.31,369.63 548.11,352.73 548.11,342.42 500.31,359.32" fill="#0014ff"/>
<polygon points="500.31,359.32 548.11,342.42 548.11,332.1 500.31,349" fill="#0044ff"/>
<polygon points="500.31,349 548.11,332.1 548.11,321.79 500.31,338.69" fill="#008bff"/>
<polygon points="500.31,338.69 548.11,321.79 548.11,311.48 500.31,328.38" fill="#00bbff"/>
<polygon points="500.31,328.38 548.11,311.48 548.11,301.16 500.31,318.06" fill="#00fffc"/>
<polygon points="500.31,318.06 548.11,301.16 548.11,290.85 500.31,307.75" fill="#00ffcc"/>
<polygon points="500.31,307.75 548.11,290.85 548.11,280.53 500.31,297.43" fill="#00ff85"/>
<polygon points="500.31,297.43 548.11,280.53 548.11,270.22 500.31,287.12" fill="#00ff55"/>
<polygon points="500.31,287.12 548.11,270.22 548.11,259.91 500.31,276.81" fill="#00ff0e"/>
<polygon points="500.31,276.81 548.11,259.91 548.11,249.59 500.31,266.49" fill="#22ff00"/>
<polygon points="500.31,266.49 548.11,249.59 548.11,239.28 500.31,256.18" fill="#69ff00"/>
<polygon points="500.31,256.18 548.11,239.28 548.11,228.96 500.31,245.86" fill="#99ff00"/>
<polygon points="500.31,245.86 548.11,228.96 548.11,218.65 500.31,235.55" fill="#e0ff00"/>
<polygon points="500.31,235.55 548.11,218.65 548.11,208.33 500.31,225.23" fill="#ffee00"/>
<polygon points="500.31,225.23 548.11,208.33 548.11,200.82 500.31,217.72" fill="#ffa700"/>
<polygon points="500.31,217.72 548.11,200.82 537.91,197.65 490.11,214.55" fill="#ffa700"/>
<polygon points="500.31,217.72 548.11,200.82 537.91,197.65 490.11,214.55" fill="none" stroke="#000"/>
<polygon points="490.11,387.09 500.31,390.26 500.31,217.72 490.11,214.55" fill="none" stroke="#000"/>
<polygon points="500.31,390.26 548.11,373.36 548.11,200.82 500.31,217.72" fill="none" stroke="#000"/>
<polygon points="500.31,390.26 510.52,393.43 510.52,383.12 500.31,379.95" fill="#6300ff"/>
<polygon points="500.31,379.95 510.52,383.12 510.52,372.8 500.31,369.63" fill="#3300ff"/>
<polygon points="500.31,369.63 510.52,372.8 510.52,362.49 500.31,359.32" fill="#0014ff"/>
<polygon points="500.31,359.32 510.52,362.49 510.52,352.17 500.31,349" fill="#0044ff"/>
<polygon points="500.31,349 510.52,352.17 510.52,341.86 500.31,338.69" fill="#008bff"/>
<polygon points="500.31,338.69 510.52,341.86 510.52,331.55 500.31,328.38" fill="#00bbff"/>
<polygon points="500.31,328.38 510.52,331.55 510.52,321.23 500.31,318.06" fill="#00fffc"/>
<polygon points="500.31,318.06 510.52,321.23 510.52,310.92 500.31,307.75" fill="#00ffcc"/>
<polygon points="500.31,307.75 510.52,310.92 510.52,300.6 500.31,297.43" fill="#00ff85"/>
<polygon points="500.31,297.43 510.52,300.6 510.52,290.29 500.31,287.12" fill="#00ff55"/>
<polygon points="500.31,287.12 510.52,290.29 510.52,279.98 500.31,276.81" fill="#00ff0e"/>
<polygon points="500.31,276.81 510.52,279.98 510.52,269.66 500.31,266.49" fill="#22ff00"/>
<polygon points="500.31,266.49 510.52,269.66 510.52,259.35 500.31,256.18" fill="#69ff00"/>
<polygon points="500.31,256.18 510.52,259.35 510.52,249.03 500.31,245.86" fill="#99ff00"/>
<polygon points="500.31,245.86 510.52,249.03 510.52,238.72 500.31,235.55" fill="#e0ff00"/>
<polygon points="500.31,235.55 510.52,238.72 510.52,228.4 500.31,225.23" fill="#ffee00"/>
<polygon points="500.31,225.23 510.52,228.4 510.52,218.09 500.31,214.92" fill="#ffa700"/>
<polygon points="500.31,214.92 510.52,218.09 510.52,207.78 500.31,204.61" fill="#ff7700"/>
<polygon points="500.31,204.61 510.52,207.78 510.52,206.16 500.31,202.99" fill="#ff3000"/>
<polygon points="510.52,393.43 558.32,376.53 558.32,366.22 510.52,383.12" fill="#6300ff"/>
<polygon points="510.52,383.12 558.32,366.22 558.32,355.9 510.52,372.8" fill="#3300ff"/>
<polygon points="510.52,372.8 558.32,355.9 558.32,345.59 510.52,362.49" fill="#0014ff"/>
<polygon points="510.52,362.49 558.32,345.59 558.32,335.27 510.52,352.17" fill="#0044ff"/>
<polygon points="510.52,352.17 558.32,335.27 558.32,324.96 510.52,341.86" fill="#008bff"/>
<polygon points="510.52,341.86 558.32,324.96 558.32,314.65 510.52,331.55" fill="#00bbff"/>
<polygon points="510.52,331.55 558.32,314.65 558.32,304.33 510.52,321.23" fill="#00fffc"/>
<polygon points="510.52,321.23 558.32,304.33 558.32,294.02 510.52,310.92" fill="#00ffcc"/>
<polygon points="510.52,310.92 558.32,294.02 558.32,283.7 510.52,300.6" fill="#00ff85"/>
<polygon points="510.52,300.6 558.32,283.7 558.32,273.39 510.52,290.29" fill="#00ff55"/>
<polygon points="510.52,290.29 558.32,273.39 558.32,263.08 510.52,279.98" fill="#00ff0e"/>
<polygon points="510.52,279.98 558.32,263.08 558.32,252.76 510.52,269.66" fill="#22ff00"/>
<polygon points="510.52,269.66 558.32,252.76 558.32,242.45 510.52,259.35" fill="#69ff00"/>
<polygon points="510.52,259.35 558.32,242.45 558.32,232.13 510.52,249.03" fill="#99ff00"/>
<polygon points="510.52,249.03 558.32,232.13 558.32,221.82 510.52,238.72" fill="#e0ff00"/>
<polygon points="510.52,238.72 558.32,221.82 558.32,211.5 510.52,228.4" fill="#ffee00"/>
<polygon points="510.52,228.4 558.32,211.5 558.32,201.19 510.52,218.09" fill="#ffa700"/>
<polygon points="510.52,218.09 558.32,201.19 558.32,190.88 510.52,207.78" fill="#ff7700"/>
<polygon points="510.52,207.78 558.32,190.88 558.32,189.26 510.52,206.16" fill="#ff3000"/>
<polygon points="510.52,206.16 558.32,189.26 548.11,186.09 500.31,202.99" fill="#ff3000"/>
<polygon points="510.52,206.16 558.32,189.26 548.11,186.09 500.31,202.99" fill="none" stroke="#000"/>
<polygon points="500.31,390.26 510.52,393.43 510.52,206.16 500.31,202.99" fill="none" stroke="#000"/>
<polygon points="510.52,393.43 558.32,376.53 558.32,189.26 510.52,206.16" fill="none" stroke="#000"/>
<polygon points="510.52,393.43 520.72,396.6 520.72,386.29 510.52,383.12" fill="#6300ff"/>
<polygon points="510.52,383.12 520.72,386.29 520.72,375.97 510.52,372.8" fill="#3300ff"/>
<polygon points="510.52,372.8 520.72,375.97 520.72,365.66 510.52,362.49" fill="#0014ff"/>
<polygon points="510.52,362.49 520.72,365.66 520.72,355.34 510.52,352.17" fill="#0044ff"/>
<polygon points="510.52,352.17 520.72,355.34 520.72,345.03 510.52,341.86" fill="#008bff"/>
<polygon points="510.52,341.86 520.72,345.03 520.72,334.72 510.52,331.55" fill="#00bbff"/>
<polygon points="510.52,331.55 520.72,334.72 520.72,324.4 510.52,321.23" fill="#00fffc"/>
<polygon points="510.52,321.23 520.72,324.4 520.72,314.09 510.52,310.92" fill="#00ffcc"/>
<polygon points="510.52,310.92 520.72,314.09 520.72,303.77 510.52,300.6" fill="#00ff85"/>
<polygon points="510.52,300.6 520.72,303.77 520.72,293.46 510.52,290.29" fill="#00ff55"/>
<polygon points="510.52,290.29 520.72,293.46 520.72,283.15 510.52,279.98" fill="#00ff0e"/>
<polygon points="510.52,279.98 520.72,283.15 520.72,272.83 510.52,269.66" fill="#22ff00"/>
<polygon points="510.52,269.66 520.72,272.83 520.72,262.52 510.52,259.35" fill="#69ff00"/>
<polygon points="510.52,259.35 520.72,262.52 520.72,252.2 510.52,249.03" fill="#99ff00"/>
<polygon points="510.52,249.03 520.72,252.2 520.72,241.89 510.52,238.72" fill="#e0ff00"/>
<polygon points="510.52,238.72 520.72,241.89 520.72,231.57 510.52,228.4" fill="#ffee00"/>
<polygon points="510.52,228.4 520.72,231.57 520.72,221.26 510.52,218.09" fill="#ffa700"/>
<polygon points="510.52,218.09 520.72,221.26 520.72,210.95 510.52,207.78" fill="#ff7700"/>
<polygon points="510.52,207.78 520.72,210.95 520.72,200.63 510.52,197.46" fill="#ff3000"/>
<polygon points="510.52,197.46 520.72,200.63 520.72,194.95 510.52,191.78" fill="#ff0000"/>
<polygon points="520.72,396.6 568.52,379.7 568.52,369.39 520.72,386.29" fill="#6300ff"/>
<polygon points="520.72,386.29 568.52,369.39 568.52,359.07 520.72,375.97" fill="#3300ff"/>
<polygon points="520.72,375.97 568.52,359.07 568.52,348.76 520.72,365.66" fill="#0014ff"/>
<polygon points="520.72,365.66 568.52,348.76 568.52,338.44 520.72,355.34" fill="#0044ff"/>
<polygon points="520.72,355.34 568.52,338.44 568.52,328.13 520.72,345.03" fill="#008bff"/>
<polygon points="520.72,345.03 568.52,328.13 568.52,317.82 520.72,334.72" fill="#00bbff"/>
<polygon points="520.72,334.72 568.52,317.82 568.52,307.5 520.72,324.4" fill="#00fffc"/>
<polygon points="520.72,324.4 568.52,307.5 568.52,297.19 520.72,314.09" fill="#00ffcc"/>
<polygon points="520.72,314.09 568.52,297.19 568.52,286.87 520.72,303.77" fill="#00ff85"/>
<polygon points="520.72,303.77 568.52,286.87 568.52,276.56 520.72,293.46" fill="#00ff55"/>
<polygon points="520.72,293.46 568.52,276.56 568.52,266.25 520.72,283.15" fill="#00ff0e"/>
<polygon points="520.72,283.15 568.52,266.25 568.52,255.93 520.72,272.83" fill="#22ff00"/>
<polygon points="520.72,272.83 568.52,255.93 568.52,245.62 520.72,262.52" fill="#69ff00"/>
<polygon points="520.72,262.52 568.52,245.62 568.52,235.3 520.72,252.2" fill="#99ff00"/>
<polygon points="520.72,252.2 568.52,235.3 568.52,224.99 520.72,241.89" fill="#e0ff00"/>
<polygon points="520.72,241.89 568.52,224.99 568.52,214.67 520.72,231.57" fill="#ffee00"/>
<polygon points="520.72,231.57 568.52,214.67 568.52,204.36 520.72,221.26" fill="#ffa700"/>
<polygon points="520.72,221.26 568.52,204.36 568.52,194.05 520.72,210.95" fill="#ff7700"/>
<polygon points="520.72,210.95 568.52,194.05 568.52,183.73 520.72,200.63" fill="#ff3000"/>
<polygon points="520.72,200.63 568.52,183.73 568.52,178.05 520.72,194.95" fill="#ff0000"/>
<polygon points="520.72,194.95 568.52,178.05 558.32,174.88 510.52,191.78" fill="#ff0000"/>
<polygon points="520.72,194.95 568.52,178.05 558.32,174.88 510.52,191.78" fill="none" stroke="#000"/>
<polygon points="510.52,393.43 520.72,396.6 520.72,194.95 510.52,191.78" fill="none" stroke="#000"/>
<polygon points="520.72,396.6 568.52,379.7 568.52,178.05 520.72,194.95" fill="none" stroke="#000"/>
<polygon points="520.72,396.6 530.92,399.77 530.92,389.46 520.72,386.29" fill="#6300ff"/>
<polygon points="520.72,386.29 530.92,389.46 530.92,379.14 520.72,375.97" fill="#3300ff"/>
<polygon points="520.72,375.97 530.92,379.14 530.92,368.83 520.72,365.66" fill="#0014ff"/>
<polygon points="520.72,365.66 530.92,368.83 530.92,358.51 520.72,355.34" fill="#0044ff"/>
<polygon points="520.72,355.34 530.92,358.51 530.92,348.2 520.72,345.03" fill="#008bff"/>
<polygon points="520.72,345.03 530.92,348.2 530.92,337.89 520.72,334.72" fill="#00bbff"/>
<polygon points="520.72,334.72 530.92,337.89 530.92,327.57 520.72,324.4" fill="#00fffc"/>
<polygon points="520.72,324.4 530.92,327.57 530.92,317.26 520.72,314.09" fill="#00ffcc"/>
<polygon points="520.72,314.09 530.92,317.26 530.92,306.94 520.72,303.77" fill="#00ff85"/>
<polygon points="520.72,303.77 530.92,306.94 530.92,296.63 520.72,293.46" fill="#00ff55"/>
<polygon points="520.72,293.46 530.92,296.63 530.92,286.32 520.72,283.15" fill="#00ff0e"/>
<polygon points="520.72,283.15 530.92,286.32 530.92,276 520.72,272.83" fill="#22ff00"/>
<polygon points="520.72,272.83 530.92,276 530.92,265.69 520.72,262.52" fill="#69ff00"/>
<polygon points="520.72,262.52 530.92,265.69 530.92,255.37 520.72,252.2" fill="#99ff00"/>
<polygon points="520.72,252.2 530.92,255.37 530.92,245.06 520.72,241.89" fill="#e0ff00"/>
<polygon points="520.72,241.89 530.92,245.06 530.92,234.74 520.72,231.57" fill="#ffee00"/>
<polygon points="520.72,231.57 530.92,234.74 530.92,224.43 520.72,221.26" fill="#ffa700"/>
<polygon points="520.72,221.26 530.92,224.43 530.92,214.12 520.72,210.95" fill="#ff7700"/>
<polygon points="520.72,210.95 530.92,214.12 530.92,203.8 520.72,200.63" fill="#ff3000"/>
<polygon points="520.72,200.63 530.92,203.8 530.92,195.31 520.72,192.14" fill="#ff0000"/>
<polygon points="530.92,399.77 578.72,382.87 578.72,372.56 530.92,389.46" fill="#6300ff"/>
<polygon points="530.92,389.46 578.72,372.56 578.72,362.24 530.92,379.14" fill="#3300ff"/>
<polygon points="530.92,379.14 578.72,362.24 578.72,351.93 530.92,368.83" fill="#0014ff"/>
<polygon points="530.92,368.83 578.72,351.93 578.72,341.61 530.92,358.51" fill="#0044ff"/>
<polygon points="530.92,358.51 578.72,341.61 578.72,331.3 530.92,348.2" fill="#008bff"/>
<polygon points="530.92,348.2 578.72,331.3 578.72,320.99 530.92,337.89" fill="#00bbff"/>
<polygon points="530.92,337.89 578.72,320.99 578.72,310.67 530.92,327.57" fill="#00fffc"/>
<polygon points="530.92,327.57 578.72,310.67 578.72,300.36 530.92,317.26" fill="#00ffcc"/>
<polygon points="530.92,317.26 578.72,300.36 578.72,290.04 530.92,306.94" fill="#00ff85"/>
<polygon points="530.92,306.94 578.72,290.04 578.72,279.73 530.92,296.63" fill="#00ff55"/>
<polygon points="530.92,296.63 578.72,279.73 578.72,269.42 530.92,286.32" fill="#00ff0e"/>
<polygon points="530.92,286.32 578.72,269.42 578.72,259.1 530.92,276" fill="#22ff00"/>
<polygon points="530.92,276 578.72,259.1 578.72,248.79 530.92,265.69" fill="#69ff00"/>
<polygon points="530.92,265.69 578.72,248.79 578.72,238.47 530.92,255.37" fill="#99ff00"/>
<polygon points="530.92,255.37 578.72,238.47 578.72,228.16 530.92,245.06" fill="#e0ff00"/>
<polygon points="530.92,245.06 578.72,228.16 578.72,217.84 530.92,234.74" fill="#ffee00"/>
<polygon points="530.92,234.74 578.72,217.84 578.72,207.53 530.92,224.43" fill="#ffa700"/>
<polygon points="530.92,224.43 578.72,207.53 578.72,197.22 530.92,214.12" fill="#ff7700"/>
<polygon points="530.92,214.12 578.72,197.22 578.72,186.9 530.92,203.8" fill="#ff3000"/>
<polygon points="530.92,203.8 578.72,186.9 578.72,178.41 530.92,195.31" fill="#ff0000"/>
<polygon points="530.92,195.31 578.72,178.41 568.52,175.24 520.72,192.14" fill="#ff0000"/>
<polygon points="530.92,195.31 578.72,178.41 568.52,175.24 520.72,192.14" fill="none" stroke="#000"/>
<polygon points="520.72,396.6 530.92,399.77 530.92,195.31 520.72,192.14" fill="none" stroke="#000"/>
<polygon points="530.92,399.77 578.72,382.87 578.72,178.41 530.92,195.31" fill="none" stroke="#000"/>
<polygon points="530.92,399.77 541.13,402.94 541.13,392.63 530.92,389.46" fill="#6300ff"/>
<polygon points="530.92,389.46 541.13,392.63 541.13,382.31 530.92,379.14" fill="#3300ff"/>
<polygon points="530.92,379.14 541.13,382.31 541.13,372 530.92,368.83" fill="#0014ff"/>
<polygon points="530.92,368.83 541.13,372 541.13,361.68 530.92,358.51" fill="#0044ff"/>
<polygon points="530.92,358.51 541.13,361.68 541.13,351.37 530.92,348.2" fill="#008bff"/>
<polygon points="530.92,348.2 541.13,351.37 541.13,341.06 530.92,337.89" fill="#00bbff"/>
<polygon points="530.92,337.89 541.13,341.06 541.13,330.74 530.92,327.57" fill="#00fffc"/>
<polygon points="530.92,327.57 541.13,330.74 541.13,320.43 530.92,317.26" fill="#00ffcc"/>
<polygon points="530.92,317.26 541.13,320.43 541.13,310.11 530.92,306.94" fill="#00ff85"/>
<polygon points="530.92,306.94 541.13,310.11 541.13,299.8 530.92,296.63" fill="#00ff55"/>
<polygon points="530.92,296.63 541.13,299.8 541.13,289.49 530.92,286.32" fill="#00ff0e"/>
<polygon points="530.92,286.32 541.13,289.49 541.13,279.17 530.92,276" fill="#22ff00"/>
<polygon points="530.92,276 541.13,279.17 541.13,268.86 530.92,265.69" fill="#69ff00"/>
<polygon points="530.92,265.69 541.13,268.86 541.13,258.54 530.92,255.37" fill="#99ff00"/>
<polygon points="530.92,255.37 541.13,258.54 541.13,248.23 530.92,245.06" fill="#e0ff00"/>
<polygon points="530.92,245.06 541.13,248.23 541.13,237.91 530.92,234.74" fill="#ffee00"/>
<polygon points="530.92,234.74 541.13,237.91 541.13,227.6 530.92,224.43" fill="#ffa700"/>
<polygon points="530.92,224.43 541.13,227.6 541.13,217.29 530.92,214.12" fill="#ff7700"/>
<polygon points="530.92,214.12 541.13,217.29 541.13,216.02 530.92,212.85" fill="#ff3000"/>
<polygon points="541.13,402.94 588.93,386.04 588.93,375.73 541.13,392.63" fill="#6300ff"/>
<polygon points="541.13,392.63 588.93,375.73 588.93,365.41 541.13,382.31" fill="#3300ff"/>
<polygon points="541.13,382.31 588.93,365.41 588.93,355.1 541.13,372" fill="#0014ff"/>
<polygon points="541.13,372 588.93,355.1 588.93,344.78 541.13,361.68" fill="#0044ff"/>
<polygon points="541.13,361.68 588.93,344.78 588.93,334.47 541.13,351.37" fill="#008bff"/>
<polygon points="541.13,351.37 588.93,334.47 588.93,324.16 541.13,341.06" fill="#00bbff"/>
<polygon points="541.13,341.06 588.93,324.16 588.93,313.84 541.13,330.74" fill="#00fffc"/>
<polygon points="541.13,330.74 588.93,313.84 588.93,303.53 541.13,320.43" fill="#00ffcc"/>
<polygon points="541.13,320.43 588.93,303.53 588.93,293.21 541.13,310.11" fill="#00ff85"/>
<polygon points="541.13,310.11 588.93,293.21 588.93,282.9 541.13,299.8" fill="#00ff55"/>
<polygon points="541.13,299.8 588.93,282.9 588.93,272.59 541.13,289.49" fill="#00ff0e"/>
<polygon points="541.13,289.49 588.93,272.59 588.93,262.27 541.13,279.17" fill="#22ff00"/>
<polygon points="541.13,279.17 588.93,262.27 588.93,251.96 541.13,268.86" fill="#69ff00"/>
<polygon points="541.13,268.86 588.93,251.96 588.93,241.64 541.13,258.54" fill="#99ff00"/>
<polygon points="541.13,258.54 588.93,241.64 588.93,231.33 541.13,248.23" fill="#e0ff00"/>
<polygon points="541.13,248.23 588.93,231.33 588.93,221.01 541.13,237.91" fill="#ffee00"/>
<polygon points="541.13,237.91 588.93,221.01 588.93,210.7 541.13,227.6" fill="#ffa700"/>
<polygon points="541.13,227.6 588.93,210.7 588.93,200.39 541.13,217.29" fill="#ff7700"/>
<polygon points="541.13,217.29 588.93,200.39 588.93,199.12 541.13,216.02" fill="#ff3000"/>
<polygon points="541.13,216.02 588.93,199.12 578.72,195.95 530.92,212.85" fill="#ff3000"/>
<polygon points="541.13,216.02 588.93,199.12 578.72,195.95 530.92,212.85" fill="none" stroke="#000"/>
<polygon points="530.92,399.77 541.13,402.94 541.13,216.02 530.92,212.85" fill="none" stroke="#000"/>
<polygon points="541.13,402.94 588.93,386.04 588.93,199.12 541.13,216.02" fill="none" stroke="#000"/>
<polygon points="541.13,402.94 551.33,406.11 551.33,395.8 541.13,392.63" fill="#6300ff"/>
<polygon points="541.13,392.63 551.33,395.8 551.33,385.48 541.13,382.31" fill="#3300ff"/>
<polygon points="541.13,382.31 551.33,385.48 551.33,375.17 541.13,372" fill="#0014ff"/>
<polygon points="541.13,372 551.33,375.17 551.33,364.85 541.13,361.68" fill="#0044ff"/>
<polygon points="541.13,361.68 551.33,364.85 551.33,354.54 541.13,351.37" fill="#008bff"/>
<polygon points="541.13,351.37 551.33,354.54 551.33,344.23 541.13,341.06" fill="#00bbff"/>
<polygon points="541.13,341.06 551.33,344.23 551.33,333.91 541.13,330.74" fill="#00fffc"/>
<polygon points="541.13,330.74 551.33,333.91 551.33,323.6 541.13,320.43" fill="#00ffcc"/>
<polygon points="541.13,320.43 551.33,323.6 551.33,313.28 541.13,310.11" fill="#00ff85"/>
<polygon points="541.13,310.11 551.33,313.28 551.33,302.97 541.13,299.8" fill="#00ff55"/>
<polygon points="541.13,299.8 551.33,302.97 551.33,292.66 541.13,289.49" fill="#00ff0e"/>
<polygon points="541.13,289.49 551.33,292.66 551.33,282.34 541.13,279.17" fill="#22ff00"/>
<polygon points="541.13,279.17 551.33,282.34 551.33,272.03 541.13,268.86" fill="#69ff00"/>
<polygon points="541.13,268.86 551.33,272.03 551.33,261.71 541.13,258.54" fill="#99ff00"/>
<polygon points="541.13,258.54 551.33,261.71 551.33,251.4 541.13,248.23" fill="#e0ff00"/>
<polygon points="541.13,248.23 551.33,251.4 551.33,241.08 541.13,237.91" fill="#ffee00"/>
<polygon points="541.13,237.91 551.33,241.08 551.33,230.77 541.13,227.6" fill="#ffa700"/>
<polygon points="541.13,227.6 551.33,230.77 551.33,223.04 541.13,219.87" fill="#ff7700"/>
<polygon points="551.33,406.11 599.13,389.21 599.13,378.9 551.33,395.8" fill="#6300ff"/>
<polygon points="551.33,395.8 599.13,378.9 599.13,368.58 551.33,385.48" fill="#3300ff"/>
<polygon points="551.33,385.48 599.13,368.58 599.13,358.27 551.33,375.17" fill="#0014ff"/>
<polygon points="551.33,375.17 599.13,358.27 599.13,347.95 551.33,364.85" fill="#0044ff"/>
<polygon points="551.33,364.85 599.13,347.95 599.13,337.64 551.33,354.54" fill="#008bff"/>
<polygon points="551.33,354.54 599.13,337.64 599.13,327.33 551.33,344.23" fill="#00bbff"/>
<polygon points="551.33,344.23 599.13,327.33 599.13,317.01 551.33,333.91" fill="#00fffc"/>
<polygon points="551.33,333.91 599.13,317.01 599.13,306.7 551.33,323.6" fill="#00ffcc"/>
<polygon points="551.33,323.6 599.13,306.7 599.13,296.38 551.33,313.28" fill="#00ff85"/>
<polygon points="551.33,313.28 599.13,296.38 599.13,286.07 551.33,302.97" fill="#00ff55"/>
<polygon points="551.33,302.97 599.13,286.07 599.13,275.76 551.33,292.66" fill="#00ff0e"/>
<polygon points="551.33,292.66 599.13,275.76 599.13,265.44 551.33,282.34" fill="#22ff00"/>
<polygon points="551.33,282.34 599.13,265.44 599.13,255.13 551.33,272.03" fill="#69ff00"/>
<polygon points="551.33,272.03 599.13,255.13 599.13,244.81 551.33,261.71" fill="#99ff00"/>
<polygon points="551.33,261.71 599.13,244.81 599.13,234.5 551.33,251.4" fill="#e0ff00"/>
<polygon points="551.33,251.4 599.13,234.5 599.13,224.18 551.33,241.08" fill="#ffee00"/>
<polygon points="551.33,241.08 599.13,224.18 599.13,213.87 551.33,230.77" fill="#ffa700"/>
<polygon points="551.33,230.77 599.13,213.87 599.13,206.14 551.33,223.04" fill="#ff7700"/>
<polygon points="551.33,223.04 599.13,206.14 588.93,202.97 541.13,219.87" fill="#ff7700"/>
<polygon points="551.33,223.04 599.13,206.14 588.93,202.97 541.13,219.87" fill="none" stroke="#000"/>
<polygon points="541.13,402.94 551.33,406.11 551.33,223.04 541.13,219.87" fill="none" stroke="#000"/>
<polygon points="551.33,406.11 599.13,389.21 599.13,206.14 551.33,223.04" fill="none" stroke="#000"/>
<polygon points="551.33,406.11 561.54,409.28 561.54,398.97 551.33,395.8" fill="#6300ff"/>
<polygon points="551.33,395.8 561.54,398.97 561.54,388.65 551.33,385.48" fill="#3300ff"/>
<polygon points="551.33,385.48 561.54,388.65 561.54,378.34 551.33,375.17" fill="#0014ff"/>
<polygon points="551.33,375.17 561.54,378.34 561.54,368.02 551.33,364.85" fill="#0044ff"/>
<polygon points="551.33,364.85 561.54,368.02 561.54,357.71 551.33,354.54" fill="#008bff"/>
<polygon points="551.33,354.54 561.54,357.71 561.54,347.4 551.33,344.23" fill="#00bbff"/>
<polygon points="551.33,344.23 561.54,347.4 561.54,337.08 551.33,333.91" fill="#00fffc"/>
<polygon points="551.33,333.91 561.54,337.08 561.54,326.77 551.33,323.6" fill="#00ffcc"/>
<polygon points="551.33,323.6 561.54,326.77 561.54,316.45 551.33,313.28" fill="#00ff85"/>
<polygon points="551.33,313.28 561.54,316.45 561.54,306.14 551.33,302.97" fill="#00ff55"/>
<polygon points="551.33,302.97 561.54,306.14 561.54,295.83 551.33,292.66" fill="#00ff0e"/>
<polygon points="551.33,292.66 561.54,295.83 561.54,285.51 551.33,282.34" fill="#22ff00"/>
<polygon points="551.33,282.34 561.54,285.51 561.54,275.2 551.33,272.03" fill="#69ff00"/>
<polygon points="551.33,272.03 561.54,275.2 561.54,264.88 551.33,261.71" fill="#99ff00"/>
<polygon points="551.33,261.71 561.54,264.88 561.54,254.57 551.33,251.4" fill="#e0ff00"/>
<polygon points="551.33,251.4 561.54,254.57 561.54,247.26 551.33,244.09" fill="#ffee00"/>
<polygon points="561.54,409.28 609.34,392.38 609.34,382.07 561.54,398.97" fill="#6300ff"/>
<polygon points="561.54,398.97 609.34,382.07 609.34,371.75 561.54,388.65" fill="#3300ff"/>
<polygon points="561.54,388.65 609.34,371.75 609.34,361.44 561.54,378.34" fill="#0014ff"/>
<polygon points="561.54,378.34 609.34,361.44 609.34,351.12 561.54,368.02" fill="#0044ff"/>
<polygon points="561.54,368.02 609.34,351.12 609.34,340.81 561.54,357.71" fill="#008bff"/>
<polygon points="561.54,357.71 609.34,340.81 609.34,330.5 561.54,347.4" fill="#00bbff"/>
<polygon points="561.54,347.4 609.34,330.5 609.34,320.18 561.54,337.08" fill="#00fffc"/>
<polygon points="561.54,337.08 609.34,320.18 609.34,309.87 561.54,326.77" fill="#00ffcc"/>
<polygon points="561.54,326.77 609.34,309.87 609.34,299.55 561.54,316.45" fill="#00ff85"/>
<polygon points="561.54,316.45 609.34,299.55 609.34,289.24 561.54,306.14" fill="#00ff55"/>
<polygon points="561.54,306.14 609.34,289.24 609.34,278.93 561.54,295.83" fill="#00ff0e"/>
<polygon points="561.54,295.83 609.34,278.93 609.34,268.61 561.54,285.51" fill="#22ff00"/>
<polygon points="561.54,285.51 609.34,268.61 609.34,258.3 561.54,275.2" fill="#69ff00"/>
<polygon points="561.54,275.2 609.34,258.3 609.34,247.98 561.54,264.88" fill="#99ff00"/>
<polygon points="561.54,264.88 609.34,247.98 609.34,237.67 561.54,254.57" fill="#e0ff00"/>
<polygon points="561.54,254.57 609.34,237.67 609.34,230.36 561.54,247.26" fill="#ffee00"/>
<polygon points="561.54,247.26 609.34,230.36 599.13,227.19 551.33,244.09" fill="#ffee00"/>
<polygon points="561.54,247.26 609.34,230.36 599.13,227.19 551.33,244.09" fill="none" stroke="#000"/>
<polygon points="551.33,406.11 561.54,409.28 561.54,247.26 551.33,244.09" fill="none" stroke="#000"/>
<polygon points="561.54,409.28 609.34,392.38 609.34,230.36 561.54,247.26" fill="none" stroke="#000"/>
<polygon points="561.54,409.28 571.74,412.45 571.74,402.14 561.54,398.97" fill="#6300ff"/>
<polygon points="561.54,398.97 571.74,402.14 571.74,391.82 561.54,388.65" fill="#3300ff"/>
<polygon points="561.54,388.65 571.74,391.82 571.74,381.51 561.54,378.34" fill="#0014ff"/>
<polygon points="561.54,378.34 571.74,381.51 571.74,371.19 561.54,368.02" fill="#0044ff"/>
<polygon points="561.54,368.02 571.74,371.19 571.74,360.88 561.54,357.71" fill="#008bff"/>
<polygon points="561.54,357.71 571.74,360.88 571.74,350.57 561.54,347.4" fill="#00bbff"/>
<polygon points="561.54,347.4 571.74,350.57 571.74,340.25 561.54,337.08" fill="#00fffc"/>
<polygon points="561.54,337.08 571.74,340.25 571.74,329.94 561.54,326.77" fill="#00ffcc"/>
<polygon points="561.54,326.77 571.74,329.94 571.74,319.62 561.54,316.45" fill="#00ff85"/>
<polygon points="561.54,316.45 571.74,319.62 571.74,309.31 561.54,306.14" fill="#00ff55"/>
<polygon points="561.54,306.14 571.74,309.31 571.74,299 561.54,295.83" fill="#00ff0e"/>
<polygon points="561.54,295.83 571.74,299 571.74,289 561.54,285.83" fill="#22ff00"/>
<polygon points="571.74,412.45 619.54,395.55 619.54,385.24 571.74,402.14" fill="#6300ff"/>
<polygon points="571.74,402.14 619.54,385.24 619.54,374.92 571.74,391.82" fill="#3300ff"/>
<polygon points="571.74,391.82 619.54,374.92 619.54,364.61 571.74,381.51" fill="#0014ff"/>
<polygon points="571.74,381.51 619.54,364.61 619.54,354.29 571.74,371.19" fill="#0044ff"/>
<polygon points="571.74,371.19 619.54,354.29 619.54,343.98 571.74,360.88" fill="#008bff"/>
<polygon points="571.74,360.88 619.54,343.98 619.54,333.67 571.74,350.57" fill="#00bbff"/>
<polygon points="571.74,350.57 619.54,333.67 619.54,323.35 571.74,340.25" fill="#00fffc"/>
<polygon points="571.74,340.25 619.54,323.35 619.54,313.04 571.74,329.94" fill="#00ffcc"/>
<polygon points="571.74,329.94 619.54,313.04 619.54,302.72 571.74,319.62" fill="#00ff85"/>
<polygon points="571.74,319.62 619.54,302.72 619.54,292.41 571.74,309.31" fill="#00ff55"/>
<polygon points="571.74,309.31 619.54,292.41 619.54,282.1 571.74,299" fill="#00ff0e"/>
<polygon points="571.74,299 619.54,282.1 619.54,272.1 571.74,289" fill="#22ff00"/>
<polygon points="571.74,289 619.54,272.1 609.34,268.93 561.54,285.83" fill="#22ff00"/>
<polygon points="571.74,289 619.54,272.1 609.34,268.93 561.54,285.83" fill="none" stroke="#000"/>
<polygon points="561.54,409.28 571.74,412.45 571.74,289 561.54,285.83" fill="none" stroke="#000"/>
<polygon points="571.74,412.45 619.54,395.55 619.54,272.1 571.74,289" fill="none" stroke="#000"/>
<polygon points="571.74,412.45 581.94,415.62 581.94,405.31 571.74,402.14" fill="#6300ff"/>
<polygon points="571.74,402.14 581.94,405.31 581.94,394.99 571.74,391.82" fill="#3300ff"/>
<polygon points="571.74,391.82 581.94,394.99 581.94,384.68 571.74,381.51" fill="#0014ff"/>
<polygon points="571.74,381.51 581.94,384.68 581.94,374.36 571.74,371.19" fill="#0044ff"/>
<polygon points="571.74,371.19 581.94,374.36 581.94,364.05 571.74,360.88" fill="#008bff"/>
<polygon points="571.74,360.88 581.94,364.05 581.94,353.74 571.74,350.57" fill="#00bbff"/>
<polygon points="571.74,350.57 581.94,353.74 581.94,343.42 571.74,340.25" fill="#00fffc"/>
<polygon points="571.74,340.25 581.94,343.42 581.94,333.11 571.74,329.94" fill="#00ffcc"/>
<polygon points="571.74,329.94 581.94,333.11 581.94,322.79 571.74,319.62" fill="#00ff85"/>
<polygon points="571.74,319.62 581.94,322.79 581.94,312.48 571.74,309.31" fill="#00ff55"/>
<polygon points="571.74,309.31 581.94,312.48 581.94,307.25 571.74,304.08" fill="#00ff0e"/>
<polygon points="581.94,415.62 629.74,398.72 629.74,388.41 581.94,405.31" fill="#6300ff"/>
<polygon points="581.94,405.31 629.74,388.41 629.74,378.09 581.94,394.99" fill="#3300ff"/>
<polygon points="581.94,394.99 629.74,378.09 629.74,367.78 581.94,384.68" fill="#0014ff"/>
<polygon points="581.94,384.68 629.74,367.78 629.74,357.46 581.94,374.36" fill="#0044ff"/>
<polygon points="581.94,374.36 629.74,357.46 629.74,347.15 581.94,364.05" fill="#008bff"/>
<polygon points="581.94,364.05 629.74,347.15 629.74,336.84 581.94,353.74" fill="#00bbff"/>
<polygon points="581.94,353.74 629.74,336.84 629.74,326.52 581.94,343.42" fill="#00fffc"/>
<polygon points="581.94,343.42 629.74,326.52 629.74,316.21 581.94,333.11" fill="#00ffcc"/>
<polygon points="581.94,333.11 629.74,316.21 629.74,305.89 581.94,322.79" fill="#00ff85"/>
<polygon points="581.94,322.79 629.74,305.89 629.74,295.58 581.94,312.48" fill="#00ff55"/>
<polygon points="581.94,312.48 629.74,295.58 629.74,290.35 581.94,307.25" fill="#00ff0e"/>
<polygon points="581.94,307.25 629.74,290.35 619.54,287.18 571.74,304.08" fill="#00ff0e"/>
<polygon points="581.94,307.25 629.74,290.35 619.54,287.18 571.74,304.08" fill="none" stroke="#000"/>
<polygon points="571.74,412.45 581.94,415.62 581.94,307.25 571.74,304.08" fill="none" stroke="#000"/>
<polygon points="581.94,415.62 629.74,398.72 629.74,290.35 581.94,307.25" fill="none" stroke="#000"/>
<polygon points="581.94,415.62 592.15,418.79 592.15,408.48 581.94,405.31" fill="#6300ff"/>
<polygon points="581.94,405.31 592.15,408.48 592.15,398.16 581.94,394.99" fill="#3300ff"/>
<polygon points="581.94,394.99 592.15,398.16 592.15,387.85 581.94,384.68" fill="#0014ff"/>
<polygon points="581.94,384.68 592.15,387.85 592.15,377.53 581.94,374.36" fill="#0044ff"/>
<polygon points="581.94,374.36 592.15,377.53 592.15,367.22 581.94,364.05" fill="#008bff"/>
<polygon points="581.94,364.05 592.15,367.22 592.15,356.91 581.94,353.74" fill="#00bbff"/>
<polygon points="581.94,353.74 592.15,356.91 592.15,346.59 581.94,343.42" fill="#00fffc"/>
<polygon points="581.94,343.42 592.15,346.59 592.15,336.28 581.94,333.11" fill="#00ffcc"/>
<polygon points="581.94,333.11 592.15,336.28 592.15,332.1 581.94,328.93" fill="#00ff85"/>
<polygon points="592.15,418.79 639.95,401.89 639.95,391.58 592.15,408.48" fill="#6300ff"/>
<polygon points="592.15,408.48 639.95,391.58 639.95,381.26 592.15,398.16" fill="#3300ff"/>
<polygon points="592.15,398.16 639.95,381.26 639.95,370.95 592.15,387.85" fill="#0014ff"/>
<polygon points="592.15,387.85 639.95,370.95 639.95,360.63 592.15,377.53" fill="#0044ff"/>
<polygon points="592.15,377.53 639.95,360.63 639.95,350.32 592.15,367.22" fill="#008bff"/>
<polygon points="592.15,367.22 639.95,350.32 639.95,340.01 592.15,356.91" fill="#00bbff"/>
<polygon points="592.15,356.91 639.95,340.01 639.95,329.69 592.15,346.59" fill="#00fffc"/>
<polygon points="592.15,346.59 639.95,329.69 639.95,319.38 592.15,336.28" fill="#00ffcc"/>
<polygon points="592.15,336.28 639.95,319.38 639.95,315.2 592.15,332.1" fill="#00ff85"/>
<polygon points="592.15,332.1 639.95,315.2 629.74,312.03 581.94,328.93" fill="#00ff85"/>
<polygon points="592.15,332.1 639.95,315.2 629.74,312.03 581.94,328.93" fill="none" stroke="#000"/>
<polygon points="581.94,415.62 592.15,418.79 592.15,332.1 581.94,328.93" fill="none" stroke="#000"/>
<polygon points="592.15,418.79 639.95,401.89 639.95,315.2 592.15,332.1" fill="none" stroke="#000"/>
<polygon points="592.15,418.79 602.35,421.96 602.35,411.65 592.15,408.48" fill="#6300ff"/>
<polygon points="592.15,408.48 602.35,411.65 602.35,401.33 592.15,398.16" fill="#3300ff"/>
<polygon points="592.15,398.16 602.35,401.33 602.35,391.02 592.15,387.85" fill="#0014ff"/>
<polygon points="592.15,387.85 602.35,391.02 602.35,380.7 592.15,377.53" fill="#0044ff"/>
<polygon points="592.15,377.53 602.35,380.7 602.35,370.39 592.15,367.22" fill="#008bff"/>
<polygon points="592.15,367.22 602.35,370.39 602.35,360.08 592.15,356.91" fill="#00bbff"/>
<polygon points="592.15,356.91 602.35,360.08 602.35,356.38 592.15,353.21" fill="#00fffc"/>
<polygon points="602.35,421.96 650.15,405.06 650.15,394.75 602.35,411.65" fill="#6300ff"/>
<polygon points="602.35,411.65 650.15,394.75 650.15,384.43 602.35,401.33" fill="#3300ff"/>
<polygon points="602.35,401.33 650.15,384.43 650.15,374.12 602.35,391.02" fill="#0014ff"/>
<polygon points="602.35,391.02 650.15,374.12 650.15,363.8 602.35,380.7" fill="#0044ff"/>
<polygon points="602.35,380.7 650.15,363.8 650.15,353.49 602.35,370.39" fill="#008bff"/>
<polygon points="602.35,370.39 650.15,353.49 650.15,343.18 602.35,360.08" fill="#00bbff"/>
<polygon points="602.35,360.08 650.15,343.18 650.15,339.48 602.35,356.38" fill="#00fffc"/>
<polygon points="602.35,356.38 650.15,339.48 639.95,336.31 592.15,353.21" fill="#00fffc"/>
<polygon points="602.35,356.38 650.15,339.48 639.95,336.31 592.15,353.21" fill="none" stroke="#000"/>
<polygon points="592.15,418.79 602.35,421.96 602.35,356.38 592.15,353.21" fill="none" stroke="#000"/>
<polygon points="602.35,421.96 650.15,405.06 650.15,339.48 602.35,356.38" fill="none" stroke="#000"/>
<polygon points="602.35,421.96 612.56,425.13 612.56,414.82 602.35,411.65" fill="#6300ff"/>
<polygon points="602.35,411.65 612.56,414.82 612.56,404.5 602.35,401.33" fill="#3300ff"/>
<polygon points="602.35,401.33 612.56,404.5 612.56,394.19 602.35,391.02" fill="#0014ff"/>
<polygon points="602.35,391.02 612.56,394.19 612.56,383.87 602.35,380.7" fill="#0044ff"/>
<polygon points="602.35,380.7 612.56,383.87 612.56,377.46 602.35,374.29" fill="#008bff"/>
<polygon points="612.56,425.13 660.36,408.23 660.36,397.92 612.56,414.82" fill="#6300ff"/>
<polygon points="612.56,414.82 660.36,397.92 660.36,387.6 612.56,404.5" fill="#3300ff"/>
<polygon points="612.56,404.5 660.36,387.6 660.36,377.29 612.56,394.19" fill="#0014ff"/>
<polygon points="612.56,394.19 660.36,377.29 660.36,366.97 612.56,383.87" fill="#0044ff"/>
<polygon points="612.56,383.87 660.36,366.97 660.36,360.56 612.56,377.46" fill="#008bff"/>
<polygon points="612.56,377.46 660.36,360.56 650.15,357.39 602.35,374.29" fill="#008bff"/>
<polygon points="612.56,377.46 660.36,360.56 650.15,357.39 602.35,374.29" fill="none" stroke="#000"/>
<polygon points="602.35,421.96 612.56,425.13 612.56,377.46 602.35,374.29" fill="none" stroke="#000"/>
<polygon points="612.56,425.13 660.36,408.23 660.36,360.56 612.56,377.46" fill="none" stroke="#000"/>
<polygon points="612.56,425.13 622.76,428.3 622.76,417.99 612.56,414.82" fill="#6300ff"/>
<polygon points="612.56,414.82 622.76,417.99 622.76,407.67 612.56,404.5" fill="#3300ff"/>
<polygon points="612.56,404.5 622.76,407.67 622.76,397.36 612.56,394.19" fill="#0014ff"/>
<polygon points="612.56,394.19 622.76,397.36 622.76,395 612.56,391.83" fill="#0044ff"/>
<polygon points="622.76,428.3 670.56,411.4 670.56,401.09 622.76,417.99" fill="#6300ff"/>
<polygon points="622.76,417.99 670.56,401.09 670.56,390.77 622.76,407.67" fill="#3300ff"/>
<polygon points="622.76,407.67 670.56,390.77 670.56,380.46 622.76,397.36" fill="#0014ff"/>
<polygon points="622.76,397.36 670.56,380.46 670.56,378.1 622.76,395" fill="#0044ff"/>
<polygon points="622.76,395 670.56,378.1 660.36,374.93 612.56,391.83" fill="#0044ff"/>
<polygon points="622.76,395 670.56,378.1 660.36,374.93 612.56,391.83" fill="none" stroke="#000"/>
<polygon points="612.56,425.13 622.76,428.3 622.76,395 612.56,391.83" fill="none" stroke="#000"/>
<polygon points="622.76,428.3 670.56,411.4 670.56,378.1 622.76,395" fill="none" stroke="#000"/>
<polygon points="622.76,428.3 632.96,431.47 632.96,421.16 622.76,417.99" fill="#6300ff"/>
<polygon points="622.76,417.99 632.96,421.16 632.96,410.84 622.76,407.67" fill="#3300ff"/>
<polygon points="622.76,407.67 632.96,410.84 632.96,409.12 622.76,405.95" fill="#0014ff"/>
<polygon points="632.96,431.47 680.76,414.57 680.76,404.26 632.96,421.16" fill="#6300ff"/>
<polygon points="632.96,421.16 680.76,404.26 680.76,393.94 632.96,410.84" fill="#3300ff"/>
<polygon points="632.96,410.84 680.76,393.94 680.76,392.22 632.96,409.12" fill="#0014ff"/>
<polygon points="632.96,409.12 680.76,392.22 670.56,389.05 622.76,405.95" fill="#0014ff"/>
<polygon points="632.96,409.12 680.76,392.22 670.56,389.05 622.76,405.95" fill="none" stroke="#000"/>
<polygon points="622.76,428.3 632.96,431.47 632.96,409.12 622.76,405.95" fill="none" stroke="#000"/>
<polygon points="632.96,431.47 680.76,414.57 680.76,392.22 632.96,409.12" fill="none" stroke="#000"/>
<polygon points="632.96,431.47 643.17,434.64 643.17,424.33 632.96,421.16" fill="#6300ff"/>
<polygon points="632.96,421.16 643.17,424.33 643.17,420.23 632.96,417.06" fill="#3300ff"/>
<polygon points="643.17,434.64 690.97,417.74 690.97,407.43 643.17,424.33" fill="#6300ff"/>
<polygon points="643.17,424.33 690.97,407.43 690.97,403.33 643.17,420.23" fill="#3300ff"/>
<polygon points="643.17,420.23 690.97,403.33 680.76,400.16 632.96,417.06" fill="#3300ff"/>
<polygon points="643.17,420.23 690.97,403.33 680.76,400.16 632.96,417.06" fill="none" stroke="#000"/>
<polygon points="632.96,431.47 643.17,434.64 643.17,420.23 632.96,417.06" fill="none" stroke="#000"/>
<polygon points="643.17,434.64 690.97,417.74 690.97,403.33 643.17,420.23" fill="none" stroke="#000"/>
<polygon points="643.17,434.64 653.37,437.81 653.37,428.88 643.17,425.71" fill="#6300ff"/>
<polygon points="653.37,437.81 701.17,420.91 701.17,411.98 653.37,428.88" fill="#6300ff"/>
<polygon points="653.37,428.88 701.17,411.98 690.97,408.81 643.17,425.71" fill="#6300ff"/>
<polygon points="653.37,428.88 701.17,411.98 690.97,408.81 643.17,425.71" fill="none" stroke="#000"/>
<polygon points="643.17,434.64 653.37,437.81 653.37,428.88 643.17,425.71" fill="none" stroke="#000"/>
<polygon points="653.37,437.81 701.17,420.91 701.17,411.98 653.37,428.88" fill="none" stroke="#000"/>
<polygon points="653.37,437.81 663.58,440.98 663.58,435.66 653.37,432.49" fill="#6300ff"/>
<polygon points="663.58,440.98 711.38,424.08 711.38,418.76 663.58,435.66" fill="#6300ff"/>
<polygon points="663.58,435.66 711.38,418.76 701.17,415.59 653.37,432.49" fill="#6300ff"/>
<polygon points="663.58,435.66 711.38,418.76 701.17,415.59 653.37,432.49" fill="none" stroke="#000"/>
<polygon points="653.37,437.81 663.58,440.98 663.58,435.66 653.37,432.49" fill="none" stroke="#000"/>
<polygon points="663.58,440.98 711.38,424.08 711.38,418.76 663.58,435.66" fill="none" stroke="#000"/>
<polygon points="663.58,440.98 673.78,444.15 673.78,441.11 663.58,437.94" fill="#6300ff"/>
<polygon points="673.78,444.15 721.58,427.25 721.58,424.21 673.78,441.11" fill="#6300ff"/>
<polygon points="673.78,441.11 721.58,424.21 711.38,421.04 663.58,437.94" fill="#6300ff"/>
<polygon points="673.78,441.11 721.58,424.21 711.38,421.04 663.58,437.94" fill="none" stroke="#000"/>
<polygon points="663.58,440.98 673.78,444.15 673.78,441.11 663.58,437.94" fill="none" stroke="#000"/>
<polygon points="673.78,444.15 721.58,427.25 721.58,424.21 673.78,441.11" fill="none" stroke="#000"/>
<polygon points="673.78,444.15 683.98,447.32 683.98,445.65 673.78,442.48" fill="#6300ff"/>
<polygon points="683.98,447.32 731.78,430.42 731.78,428.75 683.98,445.65" fill="#6300ff"/>
<polygon points="683.98,445.65 731.78,428.75 721.58,425.58 673.78,442.48" fill="#6300ff"/>
<polygon points="683.98,445.65 731.78,428.75 721.58,425.58 673.78,442.48" fill="none" stroke="#000"/>
<polygon points="673.78,444.15 683.98,447.32 683.98,445.65 673.78,442.48" fill="none" stroke="#000"/>
<polygon points="683.98,447.32 731.78,430.42 731.78,428.75 683.98,445.65" fill="none" stroke="#000"/>
<polygon points="683.98,447.32 694.19,450.49 694.19,449.61 683.98,446.44" fill="#6300ff"/>
<polygon points="694.19,450.49 741.99,433.59 741.99,432.71 694.19,449.61" fill="#6300ff"/>
<polygon points="694.19,449.61 741.99,432.71 731.78,429.54 683.98,446.44" fill="#6300ff"/>
<polygon points="694.19,449.61 741.99,432.71 731.78,429.54 683.98,446.44" fill="none" stroke="#000"/>
<polygon points="683.98,447.32 694.19,450.49 694.19,449.61 683.98,446.44" fill="none" stroke="#000"/>
<polygon points="694.19,450.49 741.99,433.59 741.99,432.71 694.19,449.61" fill="none" stroke="#000"/>
<polygon points="694.19,450.49 704.39,453.66 704.39,453.21 694.19,450.04" fill="#6300ff"/>
<polygon points="704.39,453.66 752.19,436.76 752.19,436.31 704.39,453.21" fill="#6300ff"/>
<polygon points="704.39,453.21 752.19,436.31 741.99,433.14 694.19,450.04" fill="#6300ff"/>
<polygon points="704.39,453.21 752.19,436.31 741.99,433.14 694.19,450.04" fill="none" stroke="#000"/>
<polygon points="694.19,450.49 704.39,453.66 704.39,453.21 694.19,450.04" fill="none" stroke="#000"/>
<polygon points="704.39,453.66 752.19,436.76 752.19,436.31 704.39,453.21" fill="none" stroke="#000"/>
<polygon points="704.39,453.66 714.6,456.83 714.6,456.61 704.39,453.44" fill="#6300ff"/>
<polygon points="714.6,456.83 762.4,439.93 762.4,439.71 714.6,456.61" fill="#6300ff"/>
<polygon points="714.6,456.61 762.4,439.71 752.19,436.54 704.39,453.44" fill="#6300ff"/>
<polygon points="714.6,456.61 762.4,439.71 752.19,436.54 704.39,453.44" fill="none" stroke="#000"/>
<polygon points="704.39,453.66 714.6,456.83 714.6,456.61 704.39,453.44" fill="none" stroke="#000"/>
<polygon points="714.6,456.83 762.4,439.93 762.4,439.71 714.6,456.61" fill="none" stroke="#000"/>
<polygon points="714.6,456.83 724.8,460 724.8,459.9 714.6,456.73" fill="#6300ff"/>
<polygon points="724.8,460 772.6,443.1 772.6,443 724.8,459.9" fill="#6300ff"/>
<polygon points="724.8,459.9 772.6,443 762.4,439.83 714.6,456.73" fill="#6300ff"/>
<polygon points="724.8,459.9 772.6,443 762.4,439.83 714.6,456.73" fill="none" stroke="#000"/>
<polygon points="714.6,456.83 724.8,460 724.8,459.9 714.6,456.73" fill="none" stroke="#000"/>
<polygon points="724.8,460 772.6,443.1 772.6,443 724.8,459.9" fill="none" stroke="#000"/>
<polygon points="370.88,381.8 381.08,384.97 381.08,374.66 370.88,371.49" fill="#6300ff"/>
<polygon points="370.88,371.49 381.08,374.66 381.08,364.34 370.88,361.17" fill="#3300ff"/>
<polygon points="370.88,361.17 381.08,364.34 381.08,361.47 370.88,358.3" fill="#0014ff"/>
<polygon points="381.08,384.97 428.88,368.07 428.88,357.76 381.08,374.66" fill="#6300ff"/>
<polygon points="381.08,374.66 428.88,357.76 428.88,347.44 381.08,364.34" fill="#3300ff"/>
<polygon points="381.08,364.34 428.88,347.44 428.88,344.57 381.08,361.47" fill="#0014ff"/>
<polygon points="381.08,361.47 428.88,344.57 418.68,341.4 370.88,358.3" fill="#0014ff"/>
<polygon points="381.08,361.47 428.88,344.57 418.68,341.4 370.88,358.3" fill="none" stroke="#000"/>
<polygon points="370.88,381.8 381.08,384.97 381.08,361.47 370.88,358.3" fill="none" stroke="#000"/>
<polygon points="381.08,384.97 428.88,368.07 428.88,344.57 381.08,361.47" fill="none" stroke="#000"/>
<polygon points="381.08,384.97 391.29,388.14 391.29,377.83 381.08,374.66" fill="#6300ff"/>
<polygon points="381.08,374.66 391.29,377.83 391.29,367.51 381.08,364.34" fill="#3300ff"/>
<polygon points="381.08,364.34 391.29,367.51 391.29,363.59 381.08,360.42" fill="#0014ff"/>
<polygon points="391.29,388.14 439.09,371.24 439.09,360.93 391.29,377.83" fill="#6300ff"/>
<polygon points="391.29,377.83 439.09,360.93 439.09,350.61 391.29,367.51" fill="#3300ff"/>
<polygon points="391.29,367.51 439.09,350.61 439.09,346.69 391.29,363.59" fill="#0014ff"/>
<polygon points="391.29,363.59 439.09,346.69 428.88,343.52 381.08,360.42" fill="#0014ff"/>
<polygon points="391.29,363.59 439.09,346.69 428.88,343.52 381.08,360.42" fill="none" stroke="#000"/>
<polygon points="381.08,384.97 391.29,388.14 391.29,363.59 381.08,360.42" fill="none" stroke="#000"/>
<polygon points="391.29,388.14 439.09,371.24 439.09,346.69 391.29,363.59" fill="none" stroke="#000"/>
<polygon points="391.29,388.14 401.49,391.31 401.49,381 391.29,377.83" fill="#6300ff"/>
<polygon points="391.29,377.83 401.49,381 401.49,370.68 391.29,367.51" fill="#3300ff"/>
<polygon points="391.29,367.51 401.49,370.68 401.49,360.37 391.29,357.2" fill="#0014ff"/>
<polygon points="391.29,357.2 401.49,360.37 401.49,354.14 391.29,350.97" fill="#0044ff"/>
<polygon points="401.49,391.31 449.29,374.41 449.29,364.1 401.49,381" fill="#6300ff"/>
<polygon points="401.49,381 449.29,364.1 449.29,353.78 401.49,370.68" fill="#3300ff"/>
<polygon points="401.49,370.68 449.29,353.78 449.29,343.47 401.49,360.37" fill="#0014ff"/>
<polygon points="401.49,360.37 449.29,343.47 449.29,337.24 401.49,354.14" fill="#0044ff"/>
<polygon points="401.49,354.14 449.29,337.24 439.09,334.07 391.29,350.97" fill="#0044ff"/>
<polygon points="401.49,354.14 449.29,337.24 439.09,334.07 391.29,350.97" fill="none" stroke="#000"/>
<polygon points="391.29,388.14 401.49,391.31 401.49,354.14 391.29,350.97" fill="none" stroke="#000"/>
<polygon points="401.49,391.31 449.29,374.41 449.29,337.24 401.49,354.14" fill="none" stroke="#000"/>
<polygon points="401.49,391.31 411.7,394.48 411.7,384.17 401.49,381" fill="#6300ff"/>
<polygon points="401.49,381 411.7,384.17 411.7,373.85 401.49,370.68" fill="#3300ff"/>
<polygon points="401.49,370.68 411.7,373.85 411.7,363.54 401.49,360.37" fill="#0014ff"/>
<polygon points="401.49,360.37 411.7,363.54 411.7,353.22 401.49,350.05" fill="#0044ff"/>
<polygon points="401.49,350.05 411.7,353.22 411.7,347.49 401.49,344.32" fill="#008bff"/>
<polygon points="411.7,394.48 459.5,377.58 459.5,367.27 411.7,384.17" fill="#6300ff"/>
<polygon points="411.7,384.17 459.5,367.27 459.5,356.95 411.7,373.85" fill="#3300ff"/>
<polygon points="411.7,373.85 459.5,356.95 459.5,346.64 411.7,363.54" fill="#0014ff"/>
<polygon points="411.7,363.54 459.5,346.64 459.5,336.32 411.7,353.22" fill="#0044ff"/>
<polygon points="411.7,353.22 459.5,336.32 459.5,330.59 411.7,347.49" fill="#008bff"/>
<polygon points="411.7,347.49 459.5,330.59 449.29,327.42 401.49,344.32" fill="#008bff"/>
<polygon points="411.7,347.49 459.5,330.59 449.29,327.42 401.49,344.32" fill="none" stroke="#000"/>
<polygon points="401.49,391.31 411.7,394.48 411.7,347.49 401.49,344.32" fill="none" stroke="#000"/>
<polygon points="411.7,394.48 459.5,377.58 459.5,330.59 411.7,347.49" fill="none" stroke="#000"/>
<polygon points="411.7,394.48 421.9,397.65 421.9,387.34 411.7,384.17" fill="#6300ff"/>
<polygon points="411.7,384.17 421.9,387.34 421.9,377.02 411.7,373.85" fill="#3300ff"/>
<polygon points="411.7,373.85 421.9,377.02 421.9,366.71 411.7,363.54" fill="#0014ff"/>
<polygon points="411.7,363.54 421.9,366.71 421.9,356.39 411.7,353.22" fill="#0044ff"/>
<polygon points="411.7,353.22 421.9,356.39 421.9,346.08 411.7,342.91" fill="#008bff"/>
<polygon points="411.7,342.91 421.9,346.08 421.9,339.78 411.7,336.61" fill="#00bbff"/>
<polygon points="421.9,397.65 469.7,380.75 469.7,370.44 421.9,387.34" fill="#6300ff"/>
<polygon points="421.9,387.34 469.7,370.44 469.7,360.12 421.9,377.02" fill="#3300ff"/>
<polygon points="421.9,377.02 469.7,360.12 469.7,349.81 421.9,366.71" fill="#0014ff"/>
<polygon points="421.9,366.71 469.7,349.81 469.7,339.49 421.9,356.39" fill="#0044ff"/>
<polygon points="421.9,356.39 469.7,339.49 469.7,329.18 421.9,346.08" fill="#008bff"/>
<polygon points="421.9,346.08 469.7,329.18 469.7,322.88 421.9,339.78" fill="#00bbff"/>
<polygon points="421.9,339.78 469.7,322.88 459.5,319.71 411.7,336.61" fill="#00bbff"/>
<polygon points="421.9,339.78 469.7,322.88 459.5,319.71 411.7,336.61" fill="none" stroke="#000"/>
<polygon points="411.7,394.48 421.9,397.65 421.9,339.78 411.7,336.61" fill="none" stroke="#000"/>
<polygon points="421.9,397.65 469.7,380.75 469.7,322.88 421.9,339.78" fill="none" stroke="#000"/>
<polygon points="421.9,397.65 432.1,400.82 432.1,390.51 421.9,387.34" fill="#6300ff"/>
<polygon points="421.9,387.34 432.1,390.51 432.1,380.19 421.9,377.02" fill="#3300ff"/>
<polygon points="421.9,377.02 432.1,380.19 432.1,369.88 421.9,366.71" fill="#0014ff"/>
<polygon points="421.9,366.71 432.1,369.88 432.1,359.56 421.9,356.39" fill="#0044ff"/>
<polygon points="421.9,356.39 432.1,359.56 432.1,349.25 421.9,346.08" fill="#008bff"/>
<polygon points="421.9,346.08 432.1,349.25 432.1,338.94 421.9,335.77" fill="#00bbff"/>
<polygon points="421.9,335.77 432.1,338.94 432.1,336.64 421.9,333.47" fill="#00fffc"/>
<polygon points="432.1,400.82 479.9,383.92 479.9,373.61 432.1,390.51" fill="#6300ff"/>
<polygon points="432.1,390.51 479.9,373.61 479.9,363.29 432.1,380.19" fill="#3300ff"/>
<polygon points="432.1,380.19 479.9,363.29 479.9,352.98 432.1,369.88" fill="#0014ff"/>
<polygon points="432.1,369.88 479.9,352.98 479.9,342.66 432.1,359.56" fill="#0044ff"/>
<polygon points="432.1,359.56 479.9,342.66 479.9,332.35 432.1,349.25" fill="#008bff"/>
<polygon points="432.1,349.25 479.9,332.35 479.9,322.04 432.1,338.94" fill="#00bbff"/>
<polygon points="432.1,338.94 479.9,322.04 479.9,319.74 432.1,336.64" fill="#00fffc"/>
<polygon points="432.1,336.64 479.9,319.74 469.7,316.57 421.9,333.47" fill="#00fffc"/>
<polygon points="432.1,336.64 479.9,319.74 469.7,316.57 421.9,333.47" fill="none" stroke="#000"/>
<polygon points="421.9,397.65 432.1,400.82 432.1,336.64 421.9,333.47" fill="none" stroke="#000"/>
<polygon points="432.1,400.82 479.9,383.92 479.9,319.74 432.1,336.64" fill="none" stroke="#000"/>
<polygon points="432.1,400.82 442.31,403.99 442.31,393.68 432.1,390.51" fill="#6300ff"/>
<polygon points="432.1,390.51 442.31,393.68 442.31,383.36 432.1,380.19" fill="#3300ff"/>
<polygon points="432.1,380.19 442.31,383.36 442.31,373.05 432.1,369.88" fill="#0014ff"/>
<polygon points="432.1,369.88 442.31,373.05 442.31,362.73 432.1,359.56" fill="#0044ff"/>
<polygon points="432.1,359.56 442.31,362.73 442.31,352.42 432.1,349.25" fill="#008bff"/>
<polygon points="432.1,349.25 442.31,352.42 442.31,342.11 432.1,338.94" fill="#00bbff"/>
<polygon points="432.1,338.94 442.31,342.11 442.31,331.79 432.1,328.62" fill="#00fffc"/>
<polygon points="432.1,328.62 442.31,331.79 442.31,322.1 432.1,318.93" fill="#00ffcc"/>
<polygon points="442.31,403.99 490.11,387.09 490.11,376.78 442.31,393.68" fill="#6300ff"/>
<polygon points="442.31,393.68 490.11,376.78 490.11,366.46 442.31,383.36" fill="#3300ff"/>
<polygon points="442.31,383.36 490.11,366.46 490.11,356.15 442.31,373.05" fill="#0014ff"/>
<polygon points="442.31,373.05 490.11,356.15 490.11,345.83 442.31,362.73" fill="#0044ff"/>
<polygon points="442.31,362.73 490.11,345.83 490.11,335.52 442.31,352.42" fill="#008bff"/>
<polygon points="442.31,352.42 490.11,335.52 490.11,325.21 442.31,342.11" fill="#00bbff"/>
<polygon points="442.31,342.11 490.11,325.21 490.11,314.89 442.31,331.79" fill="#00fffc"/>
<polygon points="442.31,331.79 490.11,314.89 490.11,305.2 442.31,322.1" fill="#00ffcc"/>
<polygon points="442.31,322.1 490.11,305.2 479.9,302.03 432.1,318.93" fill="#00ffcc"/>
<polygon points="442.31,322.1 490.11,305.2 479.9,302.03 432.1,318.93" fill="none" stroke="#000"/>
<polygon points="432.1,400.82 442.31,403.99 442.31,322.1 432.1,318.93" fill="none" stroke="#000"/>
<polygon points="442.31,403.99 490.11,387.09 490.11,305.2 442.31,322.1" fill="none" stroke="#000"/>
<polygon points="442.31,403.99 452.51,407.16 452.51,396.85 442.31,393.68" fill="#6300ff"/>
<polygon points="442.31,393.68 452.51,396.85 452.51,386.53 442.31,383.36" fill="#3300ff"/>
<polygon points="442.31,383.36 452.51,386.53 452.51,376.22 442.31,373.05" fill="#0014ff"/>
<polygon points="442.31,373.05 452.51,376.22 452.51,365.9 442.31,362.73" fill="#0044ff"/>
<polygon points="442.31,362.73 452.51,365.9 452.51,355.59 442.31,352.42" fill="#008bff"/>
<polygon points="442.31,352.42 452.51,355.59 452.51,345.28 442.31,342.11" fill="#00bbff"/>
<polygon points="442.31,342.11 452.51,345.28 452.51,334.96 442.31,331.79" fill="#00fffc"/>
<polygon points="442.31,331.79 452.51,334.96 452.51,324.65 442.31,321.48" fill="#00ffcc"/>
<polygon points="442.31,321.48 452.51,324.65 452.51,314.33 442.31,311.16" fill="#00ff85"/>
<polygon points="442.31,311.16 452.51,314.33 452.51,312.12 442.31,308.95" fill="#00ff55"/>
<polygon points="452.51,407.16 500.31,390.26 500.31,379.95 452.51,396.85" fill="#6300ff"/>
<polygon points="452.51,396.85 500.31,379.95 500.31,369.63 452.51,386.53" fill="#3300ff"/>
<polygon points="452.51,386.53 500.31,369.63 500.31,359.32 452.51,376.22" fill="#0014ff"/>
<polygon points="452.51,376.22 500.31,359.32 500.31,349 452.51,365.9" fill="#0044ff"/>
<polygon points="452.51,365.9 500.31,349 500.31,338.69 452.51,355.59" fill="#008bff"/>
<polygon points="452.51,355.59 500.31,338.69 500.31,328.38 452.51,345.28" fill="#00bbff"/>
<polygon points="452.51,345.28 500.31,328.38 500.31,318.06 452.51,334.96" fill="#00fffc"/>
<polygon points="452.51,334.96 500.31,318.06 500.31,307.75 452.51,324.65" fill="#00ffcc"/>
<polygon points="452.51,324.65 500.31,307.75 500.31,297.43 452.51,314.33" fill="#00ff85"/>
<polygon points="452.51,314.33 500.31,297.43 500.31,295.22 452.51,312.12" fill="#00ff55"/>
<polygon points="452.51,312.12 500.31,295.22 490.11,292.05 442.31,308.95" fill="#00ff55"/>
<polygon points="452.51,312.12 500.31,295.22 490.11,292.05 442.31,308.95" fill="none" stroke="#000"/>
<polygon points="442.31,403.99 452.51,407.16 452.51,312.12 442.31,308.95" fill="none" stroke="#000"/>
<polygon points="452.51,407.16 500.31,390.26 500.31,295.22 452.51,312.12" fill="none" stroke="#000"/>
<polygon points="452.51,407.16 462.72,410.33 462.72,400.02 452.51,396.85" fill="#6300ff"/>
<polygon points="452.51,396.85 462.72,400.02 462.72,389.7 452.51,386.53" fill="#3300ff"/>
<polygon points="452.51,386.53 462.72,389.7 462.72,379.39 452.51,376.22" fill="#0014ff"/>
<polygon points="452.51,376.22 462.72,379.39 462.72,369.07 452.51,365.9" fill="#0044ff"/>
<polygon points="452.51,365.9 462.72,369.07 462.72,358.76 452.51,355.59" fill="#008bff"/>
<polygon points="452.51,355.59 462.72,358.76 462.72,348.45 452.51,345.28" fill="#00bbff"/>
<polygon points="452.51,345.28 462.72,348.45 462.72,338.13 452.51,334.96" fill="#00fffc"/>
<polygon points="452.51,334.96 462.72,338.13 462.72,327.82 452.51,324.65" fill="#00ffcc"/>
<polygon points="452.51,324.65 462.72,327.82 462.72,317.5 452.51,314.33" fill="#00ff85"/>
<polygon points="452.51,314.33 462.72,317.5 462.72,307.19 452.51,304.02" fill="#00ff55"/>
<polygon points="452.51,304.02 462.72,307.19 462.72,306.17 452.51,303" fill="#00ff0e"/>
<polygon points="462.72,410.33 510.52,393.43 510.52,383.12 462.72,400.02" fill="#6300ff"/>
<polygon points="462.72,400.02 510.52,383.12 510.52,372.8 462.72,389.7" fill="#3300ff"/>
<polygon points="462.72,389.7 510.52,372.8 510.52,362.49 462.72,379.39" fill="#0014ff"/>
<polygon points="462.72,379.39 510.52,362.49 510.52,352.17 462.72,369.07" fill="#0044ff"/>
<polygon points="462.72,369.07 510.52,352.17 510.52,341.86 462.72,358.76" fill="#008bff"/>
<polygon points="462.72,358.76 510.52,341.86 510.52,331.55 462.72,348.45" fill="#00bbff"/>
<polygon points="462.72,348.45 510.52,331.55 510.52,321.23 462.72,338.13" fill="#00fffc"/>
<polygon points="462.72,338.13 510.52,321.23 510.52,310.92 462.72,327.82" fill="#00ffcc"/>
<polygon points="462.72,327.82 510.52,310.92 510.52,300.6 462.72,317.5" fill="#00ff85"/>
<polygon points="462.72,317.5 510.52,300.6 510.52,290.29 462.72,307.19" fill="#00ff55"/>
<polygon points="462.72,307.19 510.52,290.29 510.52,289.27 462.72,306.17" fill="#00ff0e"/>
<polygon points="462.72,306.17 510.52,289.27 500.31,286.1 452.51,303" fill="#00ff0e"/>
<polygon points="462.72,306.17 510.52,289.27 500.31,286.1 452.51,303" fill="none" stroke="#000"/>
<polygon points="452.51,407.16 462.72,410.33 462.72,306.17 452.51,303" fill="none" stroke="#000"/>
<polygon points="462.72,410.33 510.52,393.43 510.52,289.27 462.72,306.17" fill="none" stroke="#000"/>
<polygon points="462.72,410.33 472.92,413.5 472.92,403.19 462.72,400.02" fill="#6300ff"/>
<polygon points="462.72,400.02 472.92,403.19 472.92,392.87 462.72,389.7" fill="#3300ff"/>
<polygon points="462.72,389.7 472.92,392.87 472.92,382.56 462.72,379.39" fill="#0014ff"/>
<polygon points="462.72,379.39 472.92,382.56 472.92,372.24 462.72,369.07" fill="#0044ff"/>
<polygon points="462.72,369.07 472.92,372.24 472.92,361.93 462.72,358.76" fill="#008bff"/>
<polygon points="462.72,358.76 472.92,361.93 472.92,351.62 462.72,348.45" fill="#00bbff"/>
<polygon points="462.72,348.45 472.92,351.62 472.92,341.3 462.72,338.13" fill="#00fffc"/>
<polygon points="462.72,338.13 472.92,341.3 472.92,330.99 462.72,327.82" fill="#00ffcc"/>
<polygon points="462.72,327.82 472.92,330.99 472.92,320.67 462.72,317.5" fill="#00ff85"/>
<polygon points="462.72,317.5 472.92,320.67 472.92,310.36 462.72,307.19" fill="#00ff55"/>
<polygon points="462.72,307.19 472.92,310.36 472.92,303.38 462.72,300.21" fill="#00ff0e"/>
<polygon points="472.92,413.5 520.72,396.6 520.72,386.29 472.92,403.19" fill="#6300ff"/>
<polygon points="472.92,403.19 520.72,386.29 520.72,375.97 472.92,392.87" fill="#3300ff"/>
<polygon points="472.92,392.87 520.72,375.97 520.72,365.66 472.92,382.56" fill="#0014ff"/>
<polygon points="472.92,382.56 520.72,365.66 520.72,355.34 472.92,372.24" fill="#0044ff"/>
<polygon points="472.92,372.24 520.72,355.34 520.72,345.03 472.92,361.93" fill="#008bff"/>
<polygon points="472.92,361.93 520.72,345.03 520.72,334.72 472.92,351.62" fill="#00bbff"/>
<polygon points="472.92,351.62 520.72,334.72 520.72,324.4 472.92,341.3" fill="#00fffc"/>
<polygon points="472.92,341.3 520.72,324.4 520.72,314.09 472.92,330.99" fill="#00ffcc"/>
<polygon points="472.92,330.99 520.72,314.09 520.72,303.77 472.92,320.67" fill="#00ff85"/>
<polygon points="472.92,320.67 520.72,303.77 520.72,293.46 472.92,310.36" fill="#00ff55"/>
<polygon points="472.92,310.36 520.72,293.46 520.72,286.48 472.92,303.38" fill="#00ff0e"/>
<polygon points="472.92,303.38 520.72,286.48 510.52,283.31 462.72,300.21" fill="#00ff0e"/>
<polygon points="472.92,303.38 520.72,286.48 510.52,283.31 462.72,300.21" fill="none" stroke="#000"/>
<polygon points="462.72,410.33 472.92,413.5 472.92,303.38 462.72,300.21" fill="none" stroke="#000"/>
<polygon points="472.92,413.5 520.72,396.6 520.72,286.48 472.92,303.38" fill="none" stroke="#000"/>
<polygon points="472.92,413.5 483.12,416.67 483.12,406.36 472.92,403.19" fill="#6300ff"/>
<polygon points="472.92,403.19 483.12,406.36 483.12,396.04 472.92,392.87" fill="#3300ff"/>
<polygon points="472.92,392.87 483.12,396.04 483.12,385.73 472.92,382.56" fill="#0014ff"/>
<polygon points="472.92,382.56 483.12,385.73 483.12,375.41 472.92,372.24" fill="#0044ff"/>
<polygon points="472.92,372.24 483.12,375.41 483.12,365.1 472.92,361.93" fill="#008bff"/>
<polygon points="472.92,361.93 483.12,365.1 483.12,354.79 472.92,351.62" fill="#00bbff"/>
<polygon points="472.92,351.62 483.12,354.79 483.12,344.47 472.92,341.3" fill="#00fffc"/>
<polygon points="472.92,341.3 483.12,344.47 483.12,334.16 472.92,330.99" fill="#00ffcc"/>
<polygon points="472.92,330.99 483.12,334.16 483.12,323.84 472.92,320.67" fill="#00ff85"/>
<polygon points="472.92,320.67 483.12,323.84 483.12,313.53 472.92,310.36" fill="#00ff55"/>
<polygon points="472.92,310.36 483.12,313.53 483.12,305.5 472.92,302.33" fill="#00ff0e"/>
<polygon points="483.12,416.67 530.92,399.77 530.92,389.46 483.12,406.36" fill="#6300ff"/>
<polygon points="483.12,406.36 530.92,389.46 530.92,379.14 483.12,396.04" fill="#3300ff"/>
<polygon points="483.12,396.04 530.92,379.14 530.92,368.83 483.12,385.73" fill="#0014ff"/>
<polygon points="483.12,385.73 530.92,368.83 530.92,358.51 483.12,375.41" fill="#0044ff"/>
<polygon points="483.12,375.41 530.92,358.51 530.92,348.2 483.12,365.1" fill="#008bff"/>
<polygon points="483.12,365.1 530.92,348.2 530.92,337.89 483.12,354.79" fill="#00bbff"/>
<polygon points="483.12,354.79 530.92,337.89 530.92,327.57 483.12,344.47" fill="#00fffc"/>
<polygon points="483.12,344.47 530.92,327.57 530.92,317.26 483.12,334.16" fill="#00ffcc"/>
<polygon points="483.12,334.16 530.92,317.26 530.92,306.94 483.12,323.84" fill="#00ff85"/>
<polygon points="483.12,323.84 530.92,306.94 530.92,296.63 483.12,313.53" fill="#00ff55"/>
<polygon points="483.12,313.53 530.92,296.63 530.92,288.6 483.12,305.5" fill="#00ff0e"/>
<polygon points="483.12,305.5 530.92,288.6 520.72,285.43 472.92,302.33" fill="#00ff0e"/>
<polygon points="483.12,305.5 530.92,288.6 520.72,285.43 472.92,302.33" fill="none" stroke="#000"/>
<polygon points="472.92,413.5 483.12,416.67 483.12,305.5 472.92,302.33" fill="none" stroke="#000"/>
<polygon points="483.12,416.67 530.92,399.77 530.92,288.6 483.12,305.5" fill="none" stroke="#000"/>
<polygon points="483.12,416.67 493.33,419.84 493.33,409.53 483.12,406.36" fill="#6300ff"/>
<polygon points="483.12,406.36 493.33,409.53 493.33,399.21 483.12,396.04" fill="#3300ff"/>
<polygon points="483.12,396.04 493.33,399.21 493.33,388.9 483.12,385.73" fill="#0014ff"/>
<polygon points="483.12,385.73 493.33,388.9 493.33,378.58 483.12,375.41" fill="#0044ff"/>
<polygon points="483.12,375.41 493.33,378.58 493.33,368.27 483.12,365.1" fill="#008bff"/>
<polygon points="483.12,365.1 493.33,368.27 493.33,357.96 483.12,354.79" fill="#00bbff"/>
<polygon points="483.12,354.79 493.33,357.96 493.33,347.64 483.12,344.47" fill="#00fffc"/>
<polygon points="483.12,344.47 493.33,347.64 493.33,337.33 483.12,334.16" fill="#00ffcc"/>
<polygon points="483.12,334.16 493.33,337.33 493.33,327.01 483.12,323.84" fill="#00ff85"/>
<polygon points="483.12,323.84 493.33,327.01 493.33,316.7 483.12,313.53" fill="#00ff55"/>
<polygon points="483.12,313.53 493.33,316.7 493.33,306.39 483.12,303.22" fill="#00ff0e"/>
<polygon points="483.12,303.22 493.33,306.39 493.33,301.3 483.12,298.13" fill="#22ff00"/>
<polygon points="493.33,419.84 541.13,402.94 541.13,392.63 493.33,409.53" fill="#6300ff"/>
<polygon points="493.33,409.53 541.13,392.63 541.13,382.31 493.33,399.21" fill="#3300ff"/>
<polygon points="493.33,399.21 541.13,382.31 541.13,372 493.33,388.9" fill="#0014ff"/>
<polygon points="493.33,388.9 541.13,372 541.13,361.68 493.33,378.58" fill="#0044ff"/>
<polygon points="493.33,378.58 541.13,361.68 541.13,351.37 493.33,368.27" fill="#008bff"/>
<polygon points="493.33,368.27 541.13,351.37 541.13,341.06 493.33,357.96" fill="#00bbff"/>
<polygon points="493.33,357.96 541.13,341.06 541.13,330.74 493.33,347.64" fill="#00fffc"/>
<polygon points="493.33,347.64 541.13,330.74 541.13,320.43 493.33,337.33" fill="#00ffcc"/>
<polygon points="493.33,337.33 541.13,320.43 541.13,310.11 493.33,327.01" fill="#00ff85"/>
<polygon points="493.33,327.01 541.13,310.11 541.13,299.8 493.33,316.7" fill="#00ff55"/>
<polygon points="493.33,316.7 541.13,299.8 541.13,289.49 493.33,306.39" fill="#00ff0e"/>
<polygon points="493.33,306.39 541.13,289.49 541.13,284.4 493.33,301.3" fill="#22ff00"/>
<polygon points="493.33,301.3 541.13,284.4 530.92,281.23 483.12,298.13" fill="#22ff00"/>
<polygon points="493.33,301.3 541.13,284.4 530.92,281.23 483.12,298.13" fill="none" stroke="#000"/>
<polygon points="483.12,416.67 493.33,419.84 493.33,301.3 483.12,298.13" fill="none" stroke="#000"/>
<polygon points="493.33,419.84 541.13,402.94 541.13,284.4 493.33,301.3" fill="none" stroke="#000"/>
<polygon points="493.33,419.84 503.53,423.01 503.53,412.7 493.33,409.53" fill="#6300ff"/>
<polygon points="493.33,409.53 503.53,412.7 503.53,402.38 493.33,399.21" fill="#3300ff"/>
<polygon points="493.33,399.21 503.53,402.38 503.53,392.07 493.33,388.9" fill="#0014ff"/>
<polygon points="493.33,388.9 503.53,392.07 503.53,381.75 493.33,378.58" fill="#0044ff"/>
<polygon points="493.33,378.58 503.53,381.75 503.53,371.44 493.33,368.27" fill="#008bff"/>
<polygon points="493.33,368.27 503.53,371.44 503.53,361.13 493.33,357.96" fill="#00bbff"/>
<polygon points="493.33,357.96 503.53,361.13 503.53,350.81 493.33,347.64" fill="#00fffc"/>
<polygon points="493.33,347.64 503.53,350.81 503.53,340.5 493.33,337.33" fill="#00ffcc"/>
<polygon points="493.33,337.33 503.53,340.5 503.53,330.18 493.33,327.01" fill="#00ff85"/>
<polygon points="493.33,327.01 503.53,330.18 503.53,328.32 493.33,325.15" fill="#00ff55"/>
<polygon points="503.53,423.01 551.33,406.11 551.33,395.8 503.53,412.7" fill="#6300ff"/>
<polygon points="503.53,412.7 551.33,395.8 551.33,385.48 503.53,402.38" fill="#3300ff"/>
<polygon points="503.53,402.38 551.33,385.48 551.33,375.17 503.53,392.07" fill="#0014ff"/>
<polygon points="503.53,392.07 551.33,375.17 551.33,364.85 503.53,381.75" fill="#0044ff"/>
<polygon points="503.53,381.75 551.33,364.85 551.33,354.54 503.53,371.44" fill="#008bff"/>
<polygon points="503.53,371.44 551.33,354.54 551.33,344.23 503.53,361.13" fill="#00bbff"/>
<polygon points="503.53,361.13 551.33,344.23 551.33,333.91 503.53,350.81" fill="#00fffc"/>
<polygon points="503.53,350.81 551.33,333.91 551.33,323.6 503.53,340.5" fill="#00ffcc"/>
<polygon points="503.53,340.5 551.33,323.6 551.33,313.28 503.53,330.18" fill="#00ff85"/>
<polygon points="503.53,330.18 551.33,313.28 551.33,311.42 503.53,328.32" fill="#00ff55"/>
<polygon points="503.53,328.32 551.33,311.42 541.13,308.25 493.33,325.15" fill="#00ff55"/>
<polygon points="503.53,328.32 551.33,311.42 541.13,308.25 493.33,325.15" fill="none" stroke="#000"/>
<polygon points="493.33,419.84 503.53,423.01 503.53,328.32 493.33,325.15" fill="none" stroke="#000"/>
<polygon points="503.53,423.01 551.33,406.11 551.33,311.42 503.53,328.32" fill="none" stroke="#000"/>
<polygon points="503.53,423.01 513.74,426.18 513.74,415.87 503.53,412.7" fill="#6300ff"/>
<polygon points="503.53,412.7 513.74,415.87 513.74,405.55 503.53,402.38" fill="#3300ff"/>
<polygon points="503.53,402.38 513.74,405.55 513.74,395.24 503.53,392.07" fill="#0014ff"/>
<polygon points="503.53,392.07 513.74,395.24 513.74,384.92 503.53,381.75" fill="#0044ff"/>
<polygon points="503.53,381.75 513.74,384.92 513.74,374.61 503.53,371.44" fill="#008bff"/>
<polygon points="503.53,371.44 513.74,374.61 513.74,364.3 503.53,361.13" fill="#00bbff"/>
<polygon points="503.53,361.13 513.74,364.3 513.74,353.98 503.53,350.81" fill="#00fffc"/>
<polygon points="503.53,350.81 513.74,353.98 513.74,343.77 503.53,340.6" fill="#00ffcc"/>
<polygon points="513.74,426.18 561.54,409.28 561.54,398.97 513.74,415.87" fill="#6300ff"/>
<polygon points="513.74,415.87 561.54,398.97 561.54,388.65 513.74,405.55" fill="#3300ff"/>
<polygon points="513.74,405.55 561.54,388.65 561.54,378.34 513.74,395.24" fill="#0014ff"/>
<polygon points="513.74,395.24 561.54,378.34 561.54,368.02 513.74,384.92" fill="#0044ff"/>
<polygon points="513.74,384.92 561.54,368.02 561.54,357.71 513.74,374.61" fill="#008bff"/>
<polygon points="513.74,374.61 561.54,357.71 561.54,347.4 513.74,364.3" fill="#00bbff"/>
<polygon points="513.74,364.3 561.54,347.4 561.54,337.08 513.74,353.98" fill="#00fffc"/>
<polygon points="513.74,353.98 561.54,337.08 561.54,326.87 513.74,343.77" fill="#00ffcc"/>
<polygon points="513.74,343.77 561.54,326.87 551.33,323.7 503.53,340.6" fill="#00ffcc"/>
<polygon points="513.74,343.77 561.54,326.87 551.33,323.7 503.53,340.6" fill="none" stroke="#000"/>
<polygon points="503.53,423.01 513.74,426.18 513.74,343.77 503.53,340.6" fill="none" stroke="#000"/>
<polygon points="513.74,426.18 561.54,409.28 561.54,326.87 513.74,343.77" fill="none" stroke="#000"/>
<polygon points="513.74,426.18 523.94,429.35 523.94,419.04 513.74,415.87" fill="#6300ff"/>
<polygon points="513.74,415.87 523.94,419.04 523.94,408.72 513.74,405.55" fill="#3300ff"/>
<polygon points="513.74,405.55 523.94,408.72 523.94,398.41 513.74,395.24" fill="#0014ff"/>
<polygon points="513.74,395.24 523.94,398.41 523.94,388.09 513.74,384.92" fill="#0044ff"/>
<polygon points="513.74,384.92 523.94,388.09 523.94,377.78 513.74,374.61" fill="#008bff"/>
<polygon points="513.74,374.61 523.94,377.78 523.94,367.47 513.74,364.3" fill="#00bbff"/>
<polygon points="513.74,364.3 523.94,367.47 523.94,357.15 513.74,353.98" fill="#00fffc"/>
<polygon points="513.74,353.98 523.94,357.15 523.94,349.74 513.74,346.57" fill="#00ffcc"/>
<polygon points="523.94,429.35 571.74,412.45 571.74,402.14 523.94,419.04" fill="#6300ff"/>
<polygon points="523.94,419.04 571.74,402.14 571.74,391.82 523.94,408.72" fill="#3300ff"/>
<polygon points="523.94,408.72 571.74,391.82 571.74,381.51 523.94,398.41" fill="#0014ff"/>
<polygon points="523.94,398.41 571.74,381.51 571.74,371.19 523.94,388.09" fill="#0044ff"/>
<polygon points="523.94,388.09 571.74,371.19 571.74,360.88 523.94,377.78" fill="#008bff"/>
<polygon points="523.94,377.78 571.74,360.88 571.74,350.57 523.94,367.47" fill="#00bbff"/>
<polygon points="523.94,367.47 571.74,350.57 571.74,340.25 523.94,357.15" fill="#00fffc"/>
<polygon points="523.94,357.15 571.74,340.25 571.74,332.84 523.94,349.74" fill="#00ffcc"/>
<polygon points="523.94,349.74 571.74,332.84 561.54,329.67 513.74,346.57" fill="#00ffcc"/>
<polygon points="523.94,349.74 571.74,332.84 561.54,329.67 513.74,346.57" fill="none" stroke="#000"/>
<polygon points="513.74,426.18 523.94,429.35 523.94,349.74 513.74,346.57" fill="none" stroke="#000"/>
<polygon points="523.94,429.35 571.74,412.45 571.74,332.84 523.94,349.74" fill="none" stroke="#000"/>
<polygon points="523.94,429.35 534.14,432.52 534.14,422.21 523.94,419.04" fill="#6300ff"/>
<polygon points="523.94,419.04 534.14,422.21 534.14,411.89 523.94,408.72" fill="#3300ff"/>
<polygon points="523.94,408.72 534.14,411.89 534.14,401.58 523.94,398.41" fill="#0014ff"/>
<polygon points="523.94,398.41 534.14,401.58 534.14,391.26 523.94,388.09" fill="#0044ff"/>
<polygon points="523.94,388.09 534.14,391.26 534.14,380.95 523.94,377.78" fill="#008bff"/>
<polygon points="523.94,377.78 534.14,380.95 534.14,372.5 523.94,369.33" fill="#00bbff"/>
<polygon points="534.14,432.52 581.94,415.62 581.94,405.31 534.14,422.21" fill="#6300ff"/>
<polygon points="534.14,422.21 581.94,405.31 581.94,394.99 534.14,411.89" fill="#3300ff"/>
<polygon points="534.14,411.89 581.94,394.99 581.94,384.68 534.14,401.58" fill="#0014ff"/>
<polygon points="534.14,401.58 581.94,384.68 581.94,374.36 534.14,391.26" fill="#0044ff"/>
<polygon points="534.14,391.26 581.94,374.36 581.94,364.05 534.14,380.95" fill="#008bff"/>
<polygon points="534.14,380.95 581.94,364.05 581.94,355.6 534.14,372.5" fill="#00bbff"/>
<polygon points="534.14,372.5 581.94,355.6 571.74,352.43 523.94,369.33" fill="#00bbff"/>
<polygon points="534.14,372.5 581.94,355.6 571.74,352.43 523.94,369.33" fill="none" stroke="#000"/>
<polygon points="523.94,429.35 534.14,432.52 534.14,372.5 523.94,369.33" fill="none" stroke="#000"/>
<polygon points="534.14,432.52 581.94,415.62 581.94,355.6 534.14,372.5" fill="none" stroke="#000"/>
<polygon points="534.14,432.52 544.35,435.69 544.35,425.38 534.14,422.21" fill="#6300ff"/>
<polygon points="534.14,422.21 544.35,425.38 544.35,415.06 534.14,411.89" fill="#3300ff"/>
<polygon points="534.14,411.89 544.35,415.06 544.35,404.75 534.14,401.58" fill="#0014ff"/>
<polygon points="534.14,401.58 544.35,404.75 544.35,394.43 534.14,391.26" fill="#0044ff"/>
<polygon points="534.14,391.26 544.35,394.43 544.35,388.44 534.14,385.27" fill="#008bff"/>
<polygon points="544.35,435.69 592.15,418.79 592.15,408.48 544.35,425.38" fill="#6300ff"/>
<polygon points="544.35,425.38 592.15,408.48 592.15,398.16 544.35,415.06" fill="#3300ff"/>
<polygon points="544.35,415.06 592.15,398.16 592.15,387.85 544.35,404.75" fill="#0014ff"/>
<polygon points="544.35,404.75 592.15,387.85 592.15,377.53 544.35,394.43" fill="#0044ff"/>
<polygon points="544.35,394.43 592.15,377.53 592.15,371.54 544.35,388.44" fill="#008bff"/>
<polygon points="544.35,388.44 592.15,371.54 581.94,368.37 534.14,385.27" fill="#008bff"/>
<polygon points="544.35,388.44 592.15,371.54 581.94,368.37 534.14,385.27" fill="none" stroke="#000"/>
<polygon points="534.14,432.52 544.35,435.69 544.35,388.44 534.14,385.27" fill="none" stroke="#000"/>
<polygon points="544.35,435.69 592.15,418.79 592.15,371.54 544.35,388.44" fill="none" stroke="#000"/>
<polygon points="544.35,435.69 554.55,438.86 554.55,428.55 544.35,425.38" fill="#6300ff"/>
<polygon points="544.35,425.38 554.55,428.55 554.55,418.23 544.35,415.06" fill="#3300ff"/>
<polygon points="544.35,415.06 554.55,418.23 554.55,407.92 544.35,404.75" fill="#0014ff"/>
<polygon points="544.35,404.75 554.55,407.92 554.55,403.12 544.35,399.95" fill="#0044ff"/>
<polygon points="554.55,438.86 602.35,421.96 602.35,411.65 554.55,428.55" fill="#6300ff"/>
<polygon points="554.55,428.55 602.35,411.65 602.35,401.33 554.55,418.23" fill="#3300ff"/>
<polygon points="554.55,418.23 602.35,401.33 602.35,391.02 554.55,407.92" fill="#0014ff"/>
<polygon points="554.55,407.92 602.35,391.02 602.35,386.22 554.55,403.12" fill="#0044ff"/>
<polygon points="554.55,403.12 602.35,386.22 592.15,383.05 544.35,399.95" fill="#0044ff"/>
<polygon points="554.55,403.12 602.35,386.22 592.15,383.05 544.35,399.95" fill="none" stroke="#000"/>
<polygon points="544.35,435.69 554.55,438.86 554.55,403.12 544.35,399.95" fill="none" stroke="#000"/>
<polygon points="554.55,438.86 602.35,421.96 602.35,386.22 554.55,403.12" fill="none" stroke="#000"/>
<polygon points="554.55,438.86 564.76,442.03 564.76,431.72 554.55,428.55" fill="#6300ff"/>
<polygon points="554.55,428.55 564.76,431.72 564.76,421.4 554.55,418.23" fill="#3300ff"/>
<polygon points="554.55,418.23 564.76,421.4 564.76,416.05 554.55,412.88" fill="#0014ff"/>
<polygon points="564.76,442.03 612.56,425.13 612.56,414.82 564.76,431.72" fill="#6300ff"/>
<polygon points="564.76,431.72 612.56,414.82 612.56,404.5 564.76,421.4" fill="#3300ff"/>
<polygon points="564.76,421.4 612.56,404.5 612.56,399.15 564.76,416.05" fill="#0014ff"/>
<polygon points="564.76,416.05 612.56,399.15 602.35,395.98 554.55,412.88" fill="#0014ff"/>
<polygon points="564.76,416.05 612.56,399.15 602.35,395.98 554.55,412.88" fill="none" stroke="#000"/>
<polygon points="554.55,438.86 564.76,442.03 564.76,416.05 554.55,412.88" fill="none" stroke="#000"/>
<polygon points="564.76,442.03 612.56,425.13 612.56,399.15 564.76,416.05" fill="none" stroke="#000"/>
<polygon points="564.76,442.03 574.96,445.2 574.96,434.89 564.76,431.72" fill="#6300ff"/>
<polygon points="564.76,431.72 574.96,434.89 574.96,427.05 564.76,423.88" fill="#3300ff"/>
<polygon points="574.96,445.2 622.76,428.3 622.76,417.99 574.96,434.89" fill="#6300ff"/>
<polygon points="574.96,434.89 622.76,417.99 622.76,410.15 574.96,427.05" fill="#3300ff"/>
<polygon points="574.96,427.05 622.76,410.15 612.56,406.98 564.76,423.88" fill="#3300ff"/>
<polygon points="574.96,427.05 622.76,410.15 612.56,406.98 564.76,423.88" fill="none" stroke="#000"/>
<polygon points="564.76,442.03 574.96,445.2 574.96,427.05 564.76,423.88" fill="none" stroke="#000"/>
<polygon points="574.96,445.2 622.76,428.3 622.76,410.15 574.96,427.05" fill="none" stroke="#000"/>
<polygon points="574.96,445.2 585.16,448.37 585.16,438.06 574.96,434.89" fill="#6300ff"/>
<polygon points="574.96,434.89 585.16,438.06 585.16,436.19 574.96,433.02" fill="#3300ff"/>
<polygon points="585.16,448.37 632.96,431.47 632.96,421.16 585.16,438.06" fill="#6300ff"/>
<polygon points="585.16,438.06 632.96,421.16 632.96,419.29 585.16,436.19" fill="#3300ff"/>
<polygon points="585.16,436.19 632.96,419.29 622.76,416.12 574.96,433.02" fill="#3300ff"/>
<polygon points="585.16,436.19 632.96,419.29 622.76,416.12 574.96,433.02" fill="none" stroke="#000"/>
<polygon points="574.96,445.2 585.16,448.37 585.16,436.19 574.96,433.02" fill="none" stroke="#000"/>
<polygon points="585.16,448.37 632.96,431.47 632.96,419.29 585.16,436.19" fill="none" stroke="#000"/>
<polygon points="585.16,448.37 595.37,451.54 595.37,443.68 585.16,440.51" fill="#6300ff"/>
<polygon points="595.37,451.54 643.17,434.64 643.17,426.78 595.37,443.68" fill="#6300ff"/>
<polygon points="595.37,443.68 643.17,426.78 632.96,423.61 585.16,440.51" fill="#6300ff"/>
<polygon points="595.37,443.68 643.17,426.78 632.96,423.61 585.16,440.51" fill="none" stroke="#000"/>
<polygon points="585.16,448.37 595.37,451.54 595.37,443.68 585.16,440.51" fill="none" stroke="#000"/>
<polygon points="595.37,451.54 643.17,434.64 643.17,426.78 595.37,443.68" fill="none" stroke="#000"/>
<polygon points="595.37,451.54 605.57,454.71 605.57,449.84 595.37,446.67" fill="#6300ff"/>
<polygon points="605.57,454.71 653.37,437.81 653.37,432.94 605.57,449.84" fill="#6300ff"/>
<polygon points="605.57,449.84 653.37,432.94 643.17,429.77 595.37,446.67" fill="#6300ff"/>
<polygon points="605.57,449.84 653.37,432.94 643.17,429.77 595.37,446.67" fill="none" stroke="#000"/>
<polygon points="595.37,451.54 605.57,454.71 605.57,449.84 595.37,446.67" fill="none" stroke="#000"/>
<polygon points="605.57,454.71 653.37,437.81 653.37,432.94 605.57,449.84" fill="none" stroke="#000"/>
<polygon points="605.57,454.71 615.78,457.88 615.78,454.98 605.57,451.81" fill="#6300ff"/>
<polygon points="615.78,457.88 663.58,440.98 663.58,438.08 615.78,454.98" fill="#6300ff"/>
<polygon points="615.78,454.98 663.58,438.08 653.37,434.91 605.57,451.81" fill="#6300ff"/>
<polygon points="615.78,454.98 663.58,438.08 653.37,434.91 605.57,451.81" fill="none" stroke="#000"/>
<polygon points="605.57,454.71 615.78,457.88 615.78,454.98 605.57,451.81" fill="none" stroke="#000"/>
<polygon points="615.78,457.88 663.58,440.98 663.58,438.08 615.78,454.98" fill="none" stroke="#000"/>
<polygon points="615.78,457.88 625.98,461.05 625.98,459.39 615.78,456.22" fill="#6300ff"/>
<polygon points="625.98,461.05 673.78,444.15 673.78,442.49 625.98,459.39" fill="#6300ff"/>
<polygon points="625.98,459.39 673.78,442.49 663.58,439.32 615.78,456.22" fill="#6300ff"/>
<polygon points="625.98,459.39 673.78,442.49 663.58,439.32 615.78,456.22" fill="none" stroke="#000"/>
<polygon points="615.78,457.88 625.98,461.05 625.98,459.39 615.78,456.22" fill="none" stroke="#000"/>
<polygon points="625.98,461.05 673.78,444.15 673.78,442.49 625.98,459.39" fill="none" stroke="#000"/>
<polygon points="625.98,461.05 636.18,464.22 636.18,463.31 625.98,460.14" fill="#6300ff"/>
<polygon points="636.18,464.22 683.98,447.32 683.98,446.41 636.18,463.31" fill="#6300ff"/>
<polygon points="636.18,463.31 683.98,446.41 673.78,443.24 625.98,460.14" fill="#6300ff"/>
<polygon points="636.18,463.31 683.98,446.41 673.78,443.24 625.98,460.14" fill="none" stroke="#000"/>
<polygon points="625.98,461.05 636.18,464.22 636.18,463.31 625.98,460.14" fill="none" stroke="#000"/>
<polygon points="636.18,464.22 683.98,447.32 683.98,446.41 636.18,463.31" fill="none" stroke="#000"/>
<polygon points="636.18,464.22 646.39,467.39 646.39,466.91 636.18,463.74" fill="#6300ff"/>
<polygon points="646.39,467.39 694.19,450.49 694.19,450.01 646.39,466.91" fill="#6300ff"/>
<polygon points="646.39,466.91 694.19,450.01 683.98,446.84 636.18,463.74" fill="#6300ff"/>
<polygon points="646.39,466.91 694.19,450.01 683.98,446.84 636.18,463.74" fill="none" stroke="#000"/>
<polygon points="636.18,464.22 646.39,467.39 646.39,466.91 636.18,463.74" fill="none" stroke="#000"/>
<polygon points="646.39,467.39 694.19,450.49 694.19,450.01 646.39,466.91" fill="none" stroke="#000"/>
<polygon points="646.39,467.39 656.59,470.56 656.59,470.32 646.39,467.15" fill="#6300ff"/>
<polygon points="656.59,470.56 704.39,453.66 704.39,453.42 656.59,470.32" fill="#6300ff"/>
<polygon points="656.59,470.32 704.39,453.42 694.19,450.25 646.39,467.15" fill="#6300ff"/>
<polygon points="656.59,470.32 704.39,453.42 694.19,450.25 646.39,467.15" fill="none" stroke="#000"/>
<polygon points="646.39,467.39 656.59,470.56 656.59,470.32 646.39,467.15" fill="none" stroke="#000"/>
<polygon points="656.59,470.56 704.39,453.66 704.39,453.42 656.59,470.32" fill="none" stroke="#000"/>
<polygon points="656.59,470.56 666.8,473.73 666.8,473.61 656.59,470.44" fill="#6300ff"/>
<polygon points="666.8,473.73 714.6,456.83 714.6,456.71 666.8,473.61" fill="#6300ff"/>
<polygon points="666.8,473.61 714.6,456.71 704.39,453.54 656.59,470.44" fill="#6300ff"/>
<polygon points="666.8,473.61 714.6,456.71 704.39,453.54 656.59,470.44" fill="none" stroke="#000"/>
<polygon points="656.59,470.56 666.8,473.73 666.8,473.61 656.59,470.44" fill="none" stroke="#000"/>
<polygon points="666.8,473.73 714.6,456.83 714.6,456.71 666.8,473.61" fill="none" stroke="#000"/>
<polygon points="666.8,473.73 677,476.9 677,476.84 666.8,473.67" fill="#6300ff"/>
<polygon points="677,476.9 724.8,460 724.8,459.94 677,476.84" fill="#6300ff"/>
<polygon points="677,476.84 724.8,459.94 714.6,456.77 666.8,473.67" fill="#6300ff"/>
<polygon points="677,476.84 724.8,459.94 714.6,456.77 666.8,473.67" fill="none" stroke="#000"/>
<polygon points="666.8,473.73 677,476.9 677,476.84 666.8,473.67" fill="none" stroke="#000"/>
<polygon points="677,476.9 724.8,460 724.8,459.94 677,476.84" fill="none" stroke="#000"/>
<polygon points="323.08,398.7 333.28,401.87 333.28,394.51 323.08,391.34" fill="#6300ff"/>
<polygon points="333.28,401.87 381.08,384.97 381.08,377.61 333.28,394.51" fill="#6300ff"/>
<polygon points="333.28,394.51 381.08,377.61 370.88,374.44 323.08,391.34" fill="#6300ff"/>
<polygon points="333.28,394.51 381.08,377.61 370.88,374.44 323.08,391.34" fill="none" stroke="#000"/>
<polygon points="323.08,398.7 333.28,401.87 333.28,394.51 323.08,391.34" fill="none" stroke="#000"/>
<polygon points="333.28,401.87 381.08,384.97 381.08,377.61 333.28,394.51" fill="none" stroke="#000"/>
<polygon points="333.28,401.87 343.49,405.04 343.49,396.62 333.28,393.45" fill="#6300ff"/>
<polygon points="343.49,405.04 391.29,388.14 391.29,379.72 343.49,396.62" fill="#6300ff"/>
<polygon points="343.49,396.62 391.29,379.72 381.08,376.55 333.28,393.45" fill="#6300ff"/>
<polygon points="343.49,396.62 391.29,379.72 381.08,376.55 333.28,393.45" fill="none" stroke="#000"/>
<polygon points="333.28,401.87 343.49,405.04 343.49,396.62 333.28,393.45" fill="none" stroke="#000"/>
<polygon points="343.49,405.04 391.29,388.14 391.29,379.72 343.49,396.62" fill="none" stroke="#000"/>
<polygon points="343.49,405.04 353.69,408.21 353.69,397.9 343.49,394.73" fill="#6300ff"/>
<polygon points="343.49,394.73 353.69,397.9 353.69,395.23 343.49,392.06" fill="#3300ff"/>
<polygon points="353.69,408.21 401.49,391.31 401.49,381 353.69,397.9" fill="#6300ff"/>
<polygon points="353.69,397.9 401.49,381 401.49,378.33 353.69,395.23" fill="#3300ff"/>
<polygon points="353.69,395.23 401.49,378.33 391.29,375.16 343.49,392.06" fill="#3300ff"/>
<polygon points="353.69,395.23 401.49,378.33 391.29,375.16 343.49,392.06" fill="none" stroke="#000"/>
<polygon points="343.49,405.04 353.69,408.21 353.69,395.23 343.49,392.06" fill="none" stroke="#000"/>
<polygon points="353.69,408.21 401.49,391.31 401.49,378.33 353.69,395.23" fill="none" stroke="#000"/>
<polygon points="353.69,408.21 363.9,411.38 363.9,401.07 353.69,397.9" fill="#6300ff"/>
<polygon points="353.69,397.9 363.9,401.07 363.9,396.65 353.69,393.48" fill="#3300ff"/>
<polygon points="363.9,411.38 411.7,394.48 411.7,384.17 363.9,401.07" fill="#6300ff"/>
<polygon points="363.9,401.07 411.7,384.17 411.7,379.75 363.9,396.65" fill="#3300ff"/>
<polygon points="363.9,396.65 411.7,379.75 401.49,376.58 353.69,393.48" fill="#3300ff"/>
<polygon points="363.9,396.65 411.7,379.75 401.49,376.58 353.69,393.48" fill="none" stroke="#000"/>
<polygon points="353.69,408.21 363.9,411.38 363.9,396.65 353.69,393.48" fill="none" stroke="#000"/>
<polygon points="363.9,411.38 411.7,394.48 411.7,379.75 363.9,396.65" fill="none" stroke="#000"/>
<polygon points="363.9,411.38 374.1,414.55 374.1,404.24 363.9,401.07" fill="#6300ff"/>
<polygon points="363.9,401.07 374.1,404.24 374.1,397.72 363.9,394.55" fill="#3300ff"/>
<polygon points="374.1,414.55 421.9,397.65 421.9,387.34 374.1,404.24" fill="#6300ff"/>
<polygon points="374.1,404.24 421.9,387.34 421.9,380.82 374.1,397.72" fill="#3300ff"/>
<polygon points="374.1,397.72 421.9,380.82 411.7,377.65 363.9,394.55" fill="#3300ff"/>
<polygon points="374.1,397.72 421.9,380.82 411.7,377.65 363.9,394.55" fill="none" stroke="#000"/>
<polygon points="363.9,411.38 374.1,414.55 374.1,397.72 363.9,394.55" fill="none" stroke="#000"/>
<polygon points="374.1,414.55 421.9,397.65 421.9,380.82 374.1,397.72" fill="none" stroke="#000"/>
<polygon points="374.1,414.55 384.3,417.72 384.3,407.41 374.1,404.24" fill="#6300ff"/>
<polygon points="374.1,404.24 384.3,407.41 384.3,397.09 374.1,393.92" fill="#3300ff"/>
<polygon points="374.1,393.92 384.3,397.09 384.3,392.47 374.1,389.3" fill="#0014ff"/>
<polygon points="384.3,417.72 432.1,400.82 432.1,390.51 384.3,407.41" fill="#6300ff"/>
<polygon points="384.3,407.41 432.1,390.51 432.1,380.19 384.3,397.09" fill="#3300ff"/>
<polygon points="384.3,397.09 432.1,380.19 432.1,375.57 384.3,392.47" fill="#0014ff"/>
<polygon points="384.3,392.47 432.1,375.57 421.9,372.4 374.1,389.3" fill="#0014ff"/>
<polygon points="384.3,392.47 432.1,375.57 421.9,372.4 374.1,389.3" fill="none" stroke="#000"/>
<polygon points="374.1,414.55 384.3,417.72 384.3,392.47 374.1,389.3" fill="none" stroke="#000"/>
<polygon points="384.3,417.72 432.1,400.82 432.1,375.57 384.3,392.47" fill="none" stroke="#000"/>
<polygon points="384.3,417.72 394.51,420.89 394.51,410.58 384.3,407.41" fill="#6300ff"/>
<polygon points="384.3,407.41 394.51,410.58 394.51,400.26 384.3,397.09" fill="#3300ff"/>
<polygon points="384.3,397.09 394.51,400.26 394.51,389.95 384.3,386.78" fill="#0014ff"/>
<polygon points="384.3,386.78 394.51,389.95 394.51,389.33 384.3,386.16" fill="#0044ff"/>
<polygon points="394.51,420.89 442.31,403.99 442.31,393.68 394.51,410.58" fill="#6300ff"/>
<polygon points="394.51,410.58 442.31,393.68 442.31,383.36 394.51,400.26" fill="#3300ff"/>
<polygon points="394.51,400.26 442.31,383.36 442.31,373.05 394.51,389.95" fill="#0014ff"/>
<polygon points="394.51,389.95 442.31,373.05 442.31,372.43 394.51,389.33" fill="#0044ff"/>
<polygon points="394.51,389.33 442.31,372.43 432.1,369.26 384.3,386.16" fill="#0044ff"/>
<polygon points="394.51,389.33 442.31,372.43 432.1,369.26 384.3,386.16" fill="none" stroke="#000"/>
<polygon points="384.3,417.72 394.51,420.89 394.51,389.33 384.3,386.16" fill="none" stroke="#000"/>
<polygon points="394.51,420.89 442.31,403.99 442.31,372.43 394.51,389.33" fill="none" stroke="#000"/>
<polygon points="394.51,420.89 404.71,424.06 404.71,413.75 394.51,410.58" fill="#6300ff"/>
<polygon points="394.51,410.58 404.71,413.75 404.71,403.43 394.51,400.26" fill="#3300ff"/>
<polygon points="394.51,400.26 404.71,403.43 404.71,393.12 394.51,389.95" fill="#0014ff"/>
<polygon points="394.51,389.95 404.71,393.12 404.71,392.15 394.51,388.98" fill="#0044ff"/>
<polygon points="404.71,424.06 452.51,407.16 452.51,396.85 404.71,413.75" fill="#6300ff"/>
<polygon points="404.71,413.75 452.51,396.85 452.51,386.53 404.71,403.43" fill="#3300ff"/>
<polygon points="404.71,403.43 452.51,386.53 452.51,376.22 404.71,393.12" fill="#0014ff"/>
<polygon points="404.71,393.12 452.51,376.22 452.51,375.25 404.71,392.15" fill="#0044ff"/>
<polygon points="404.71,392.15 452.51,375.25 442.31,372.08 394.51,388.98" fill="#0044ff"/>
<polygon points="404.71,392.15 452.51,375.25 442.31,372.08 394.51,388.98" fill="none" stroke="#000"/>
<polygon points="394.51,420.89 404.71,424.06 404.71,392.15 394.51,388.98" fill="none" stroke="#000"/>
<polygon points="404.71,424.06 452.51,407.16 452.51,375.25 404.71,392.15" fill="none" stroke="#000"/>
<polygon points="404.71,424.06 414.92,427.23 414.92,416.92 404.71,413.75" fill="#6300ff"/>
<polygon points="404.71,413.75 414.92,416.92 414.92,406.6 404.71,403.43" fill="#3300ff"/>
<polygon points="404.71,403.43 414.92,406.6 414.92,396.29 404.71,393.12" fill="#0014ff"/>
<polygon points="404.71,393.12 414.92,396.29 414.92,393.56 404.71,390.39" fill="#0044ff"/>
<polygon points="414.92,427.23 462.72,410.33 462.72,400.02 414.92,416.92" fill="#6300ff"/>
<polygon points="414.92,416.92 462.72,400.02 462.72,389.7 414.92,406.6" fill="#3300ff"/>
<polygon points="414.92,406.6 462.72,389.7 462.72,379.39 414.92,396.29" fill="#0014ff"/>
<polygon points="414.92,396.29 462.72,379.39 462.72,376.66 414.92,393.56" fill="#0044ff"/>
<polygon points="414.92,393.56 462.72,376.66 452.51,373.49 404.71,390.39" fill="#0044ff"/>
<polygon points="414.92,393.56 462.72,376.66 452.51,373.49 404.71,390.39" fill="none" stroke="#000"/>
<polygon points="404.71,424.06 414.92,427.23 414.92,393.56 404.71,390.39" fill="none" stroke="#000"/>
<polygon points="414.92,427.23 462.72,410.33 462.72,376.66 414.92,393.56" fill="none" stroke="#000"/>
<polygon points="414.92,427.23 425.12,430.4 425.12,420.09 414.92,416.92" fill="#6300ff"/>
<polygon points="414.92,416.92 425.12,420.09 425.12,409.77 414.92,406.6" fill="#3300ff"/>
<polygon points="414.92,406.6 425.12,409.77 425.12,399.46 414.92,396.29" fill="#0014ff"/>
<polygon points="414.92,396.29 425.12,399.46 425.12,396.38 414.92,393.21" fill="#0044ff"/>
<polygon points="425.12,430.4 472.92,413.5 472.92,403.19 425.12,420.09" fill="#6300ff"/>
<polygon points="425.12,420.09 472.92,403.19 472.92,392.87 425.12,409.77" fill="#3300ff"/>
<polygon points="425.12,409.77 472.92,392.87 472.92,382.56 425.12,399.46" fill="#0014ff"/>
<polygon points="425.12,399.46 472.92,382.56 472.92,379.48 425.12,396.38" fill="#0044ff"/>
<polygon points="425.12,396.38 472.92,379.48 462.72,376.31 414.92,393.21" fill="#0044ff"/>
<polygon points="425.12,396.38 472.92,379.48 462.72,376.31 414.92,393.21" fill="none" stroke="#000"/>
<polygon points="414.92,427.23 425.12,430.4 425.12,396.38 414.92,393.21" fill="none" stroke="#000"/>
<polygon points="425.12,430.4 472.92,413.5 472.92,379.48 425.12,396.38" fill="none" stroke="#000"/>
<polygon points="425.12,430.4 435.32,433.57 435.32,423.26 425.12,420.09" fill="#6300ff"/>
<polygon points="425.12,420.09 435.32,423.26 435.32,412.94 425.12,409.77" fill="#3300ff"/>
<polygon points="425.12,409.77 435.32,412.94 435.32,402.63 425.12,399.46" fill="#0014ff"/>
<polygon points="425.12,399.46 435.32,402.63 435.32,399.2 425.12,396.03" fill="#0044ff"/>
<polygon points="435.32,433.57 483.12,416.67 483.12,406.36 435.32,423.26" fill="#6300ff"/>
<polygon points="435.32,423.26 483.12,406.36 483.12,396.04 435.32,412.94" fill="#3300ff"/>
<polygon points="435.32,412.94 483.12,396.04 483.12,385.73 435.32,402.63" fill="#0014ff"/>
<polygon points="435.32,402.63 483.12,385.73 483.12,382.3 435.32,399.2" fill="#0044ff"/>
<polygon points="435.32,399.2 483.12,382.3 472.92,379.13 425.12,396.03" fill="#0044ff"/>
<polygon points="435.32,399.2 483.12,382.3 472.92,379.13 425.12,396.03" fill="none" stroke="#000"/>
<polygon points="425.12,430.4 435.32,433.57 435.32,399.2 425.12,396.03" fill="none" stroke="#000"/>
<polygon points="435.32,433.57 483.12,416.67 483.12,382.3 435.32,399.2" fill="none" stroke="#000"/>
<polygon points="435.32,433.57 445.53,436.74 445.53,426.43 435.32,423.26" fill="#6300ff"/>
<polygon points="435.32,423.26 445.53,426.43 445.53,416.11 435.32,412.94" fill="#3300ff"/>
<polygon points="435.32,412.94 445.53,416.11 445.53,405.8 435.32,402.63" fill="#0014ff"/>
<polygon points="435.32,402.63 445.53,405.8 445.53,401.67 435.32,398.5" fill="#0044ff"/>
<polygon points="445.53,436.74 493.33,419.84 493.33,409.53 445.53,426.43" fill="#6300ff"/>
<polygon points="445.53,426.43 493.33,409.53 493.33,399.21 445.53,416.11" fill="#3300ff"/>
<polygon points="445.53,416.11 493.33,399.21 493.33,388.9 445.53,405.8" fill="#0014ff"/>
<polygon points="445.53,405.8 493.33,388.9 493.33,384.77 445.53,401.67" fill="#0044ff"/>
<polygon points="445.53,401.67 493.33,384.77 483.12,381.6 435.32,398.5" fill="#0044ff"/>
<polygon points="445.53,401.67 493.33,384.77 483.12,381.6 435.32,398.5" fill="none" stroke="#000"/>
<polygon points="435.32,433.57 445.53,436.74 445.53,401.67 435.32,398.5" fill="none" stroke="#000"/>
<polygon points="445.53,436.74 493.33,419.84 493.33,384.77 445.53,401.67" fill="none" stroke="#000"/>
<polygon points="445.53,436.74 455.73,439.91 455.73,429.6 445.53,426.43" fill="#6300ff"/>
<polygon points="445.53,426.43 455.73,429.6 455.73,419.28 445.53,416.11" fill="#3300ff"/>
<polygon points="445.53,416.11 455.73,419.28 455.73,411.5 445.53,408.33" fill="#0014ff"/>
<polygon points="455.73,439.91 503.53,423.01 503.53,412.7 455.73,429.6" fill="#6300ff"/>
<polygon points="455.73,429.6 503.53,412.7 503.53,402.38 455.73,419.28" fill="#3300ff"/>
<polygon points="455.73,419.28 503.53,402.38 503.53,394.6 455.73,411.5" fill="#0014ff"/>
<polygon points="455.73,411.5 503.53,394.6 493.33,391.43 445.53,408.33" fill="#0014ff"/>
<polygon points="455.73,411.5 503.53,394.6 493.33,391.43 445.53,408.33" fill="none" stroke="#000"/>
<polygon points="445.53,436.74 455.73,439.91 455.73,411.5 445.53,408.33" fill="none" stroke="#000"/>
<polygon points="455.73,439.91 503.53,423.01 503.53,394.6 455.73,411.5" fill="none" stroke="#000"/>
<polygon points="455.73,439.91 465.94,443.08 465.94,432.77 455.73,429.6" fill="#6300ff"/>
<polygon points="455.73,429.6 465.94,432.77 465.94,422.45 455.73,419.28" fill="#3300ff"/>
<polygon points="455.73,419.28 465.94,422.45 465.94,415.73 455.73,412.56" fill="#0014ff"/>
<polygon points="465.94,443.08 513.74,426.18 513.74,415.87 465.94,432.77" fill="#6300ff"/>
<polygon points="465.94,432.77 513.74,415.87 513.74,405.55 465.94,422.45" fill="#3300ff"/>
<polygon points="465.94,422.45 513.74,405.55 513.74,398.83 465.94,415.73" fill="#0014ff"/>
<polygon points="465.94,415.73 513.74,398.83 503.53,395.66 455.73,412.56" fill="#0014ff"/>
<polygon points="465.94,415.73 513.74,398.83 503.53,395.66 455.73,412.56" fill="none" stroke="#000"/>
<polygon points="455.73,439.91 465.94,443.08 465.94,415.73 455.73,412.56" fill="none" stroke="#000"/>
<polygon points="465.94,443.08 513.74,426.18 513.74,398.83 465.94,415.73" fill="none" stroke="#000"/>
<polygon points="465.94,443.08 476.14,446.25 476.14,435.94 465.94,432.77" fill="#6300ff"/>
<polygon points="465.94,432.77 476.14,435.94 476.14,425.62 465.94,422.45" fill="#3300ff"/>
<polygon points="465.94,422.45 476.14,425.62 476.14,421.35 465.94,418.18" fill="#0014ff"/>
<polygon points="476.14,446.25 523.94,429.35 523.94,419.04 476.14,435.94" fill="#6300ff"/>
<polygon points="476.14,435.94 523.94,419.04 523.94,408.72 476.14,425.62" fill="#3300ff"/>
<polygon points="476.14,425.62 523.94,408.72 523.94,404.45 476.14,421.35" fill="#0014ff"/>
<polygon points="476.14,421.35 523.94,404.45 513.74,401.28 465.94,418.18" fill="#0014ff"/>
<polygon points="476.14,421.35 523.94,404.45 513.74,401.28 465.94,418.18" fill="none" stroke="#000"/>
<polygon points="465.94,443.08 476.14,446.25 476.14,421.35 465.94,418.18" fill="none" stroke="#000"/>
<polygon points="476.14,446.25 523.94,429.35 523.94,404.45 476.14,421.35" fill="none" stroke="#000"/>
<polygon points="476.14,446.25 486.34,449.42 486.34,439.11 476.14,435.94" fill="#6300ff"/>
<polygon points="476.14,435.94 486.34,439.11 486.34,431.18 476.14,428.01" fill="#3300ff"/>
<polygon points="486.34,449.42 534.14,432.52 534.14,422.21 486.34,439.11" fill="#6300ff"/>
<polygon points="486.34,439.11 534.14,422.21 534.14,414.28 486.34,431.18" fill="#3300ff"/>
<polygon points="486.34,431.18 534.14,414.28 523.94,411.11 476.14,428.01" fill="#3300ff"/>
<polygon points="486.34,431.18 534.14,414.28 523.94,411.11 476.14,428.01" fill="none" stroke="#000"/>
<polygon points="476.14,446.25 486.34,449.42 486.34,431.18 476.14,428.01" fill="none" stroke="#000"/>
<polygon points="486.34,449.42 534.14,432.52 534.14,414.28 486.34,431.18" fill="none" stroke="#000"/>
<polygon points="486.34,449.42 496.55,452.59 496.55,442.28 486.34,439.11" fill="#6300ff"/>
<polygon points="486.34,439.11 496.55,442.28 496.55,436.81 486.34,433.64" fill="#3300ff"/>
<polygon points="496.55,452.59 544.35,435.69 544.35,425.38 496.55,442.28" fill="#6300ff"/>
<polygon points="496.55,442.28 544.35,425.38 544.35,419.91 496.55,436.81" fill="#3300ff"/>
<polygon points="496.55,436.81 544.35,419.91 534.14,416.74 486.34,433.64" fill="#3300ff"/>
<polygon points="496.55,436.81 544.35,419.91 534.14,416.74 486.34,433.64" fill="none" stroke="#000"/>
<polygon points="486.34,449.42 496.55,452.59 496.55,436.81 486.34,433.64" fill="none" stroke="#000"/>
<polygon points="496.55,452.59 544.35,435.69 544.35,419.91 496.55,436.81" fill="none" stroke="#000"/>
<polygon points="496.55,452.59 506.75,455.76 506.75,446.99 496.55,443.82" fill="#6300ff"/>
<polygon points="506.75,455.76 554.55,438.86 554.55,430.09 506.75,446.99" fill="#6300ff"/>
<polygon points="506.75,446.99 554.55,430.09 544.35,426.92 496.55,443.82" fill="#6300ff"/>
<polygon points="506.75,446.99 554.55,430.09 544.35,426.92 496.55,443.82" fill="none" stroke="#000"/>
<polygon points="496.55,452.59 506.75,455.76 506.75,446.99 496.55,443.82" fill="none" stroke="#000"/>
<polygon points="506.75,455.76 554.55,438.86 554.55,430.09 506.75,446.99" fill="none" stroke="#000"/>
<polygon points="506.75,455.76 516.96,458.93 516.96,451.22 506.75,448.05" fill="#6300ff"/>
<polygon points="516.96,458.93 564.76,442.03 564.76,434.32 516.96,451.22" fill="#6300ff"/>
<polygon points="516.96,451.22 564.76,434.32 554.55,431.15 506.75,448.05" fill="#6300ff"/>
<polygon points="516.96,451.22 564.76,434.32 554.55,431.15 506.75,448.05" fill="none" stroke="#000"/>
<polygon points="506.75,455.76 516.96,458.93 516.96,451.22 506.75,448.05" fill="none" stroke="#000"/>
<polygon points="516.96,458.93 564.76,442.03 564.76,434.32 516.96,451.22" fill="none" stroke="#000"/>
<polygon points="516.96,458.93 527.16,462.1 527.16,456.71 516.96,453.54" fill="#6300ff"/>
<polygon points="527.16,462.1 574.96,445.2 574.96,439.81 527.16,456.71" fill="#6300ff"/>
<polygon points="527.16,456.71 574.96,439.81 564.76,436.64 516.96,453.54" fill="#6300ff"/>
<polygon points="527.16,456.71 574.96,439.81 564.76,436.64 516.96,453.54" fill="none" stroke="#000"/>
<polygon points="516.96,458.93 527.16,462.1 527.16,456.71 516.96,453.54" fill="none" stroke="#000"/>
<polygon points="527.16,462.1 574.96,445.2 574.96,439.81 527.16,456.71" fill="none" stroke="#000"/>
<polygon points="527.16,462.1 537.36,465.27 537.36,461.66 527.16,458.49" fill="#6300ff"/>
<polygon points="537.36,465.27 585.16,448.37 585.16,444.76 537.36,461.66" fill="#6300ff"/>
<polygon points="537.36,461.66 585.16,444.76 574.96,441.59 527.16,458.49" fill="#6300ff"/>
<polygon points="537.36,461.66 585.16,444.76 574.96,441.59 527.16,458.49" fill="none" stroke="#000"/>
<polygon points="527.16,462.1 537.36,465.27 537.36,461.66 527.16,458.49" fill="none" stroke="#000"/>
<polygon points="537.36,465.27 585.16,448.37 585.16,444.76 537.36,461.66" fill="none" stroke="#000"/>
<polygon points="537.36,465.27 547.57,468.44 547.57,466.11 537.36,462.94" fill="#6300ff"/>
<polygon points="547.57,468.44 595.37,451.54 595.37,449.21 547.57,466.11" fill="#6300ff"/>
<polygon points="547.57,466.11 595.37,449.21 585.16,446.04 537.36,462.94" fill="#6300ff"/>
<polygon points="547.57,466.11 595.37,449.21 585.16,446.04 537.36,462.94" fill="none" stroke="#000"/>
<polygon points="537.36,465.27 547.57,468.44 547.57,466.11 537.36,462.94" fill="none" stroke="#000"/>
<polygon points="547.57,468.44 595.37,451.54 595.37,449.21 547.57,466.11" fill="none" stroke="#000"/>
<polygon points="547.57,468.44 557.77,471.61 557.77,470.17 547.57,467" fill="#6300ff"/>
<polygon points="557.77,471.61 605.57,454.71 605.57,453.27 557.77,470.17" fill="#6300ff"/>
<polygon points="557.77,470.17 605.57,453.27 595.37,450.1 547.57,467" fill="#6300ff"/>
<polygon points="557.77,470.17 605.57,453.27 595.37,450.1 547.57,467" fill="none" stroke="#000"/>
<polygon points="547.57,468.44 557.77,471.61 557.77,470.17 547.57,467" fill="none" stroke="#000"/>
<polygon points="557.77,471.61 605.57,454.71 605.57,453.27 557.77,470.17" fill="none" stroke="#000"/>
<polygon points="557.77,471.61 567.98,474.78 567.98,473.92 557.77,470.75" fill="#6300ff"/>
<polygon points="567.98,474.78 615.78,457.88 615.78,457.02 567.98,473.92" fill="#6300ff"/>
<polygon points="567.98,473.92 615.78,457.02 605.57,453.85 557.77,470.75" fill="#6300ff"/>
<polygon points="567.98,473.92 615.78,457.02 605.57,453.85 557.77,470.75" fill="none" stroke="#000"/>
<polygon points="557.77,471.61 567.98,474.78 567.98,473.92 557.77,470.75" fill="none" stroke="#000"/>
<polygon points="567.98,474.78 615.78,457.88 615.78,457.02 567.98,473.92" fill="none" stroke="#000"/>
<polygon points="567.98,474.78 578.18,477.95 578.18,477.46 567.98,474.29" fill="#6300ff"/>
<polygon points="578.18,477.95 625.98,461.05 625.98,460.56 578.18,477.46" fill="#6300ff"/>
<polygon points="578.18,477.46 625.98,460.56 615.78,457.39 567.98,474.29" fill="#6300ff"/>
<polygon points="578.18,477.46 625.98,460.56 615.78,457.39 567.98,474.29" fill="none" stroke="#000"/>
<polygon points="567.98,474.78 578.18,477.95 578.18,477.46 567.98,474.29" fill="none" stroke="#000"/>
<polygon points="578.18,477.95 625.98,461.05 625.98,460.56 578.18,477.46" fill="none" stroke="#000"/>
<polygon points="578.18,477.95 588.38,481.12 588.38,480.85 578.18,477.68" fill="#6300ff"/>
<polygon points="588.38,481.12 636.18,464.22 636.18,463.95 588.38,480.85" fill="#6300ff"/>
<polygon points="588.38,480.85 636.18,463.95 625.98,460.78 578.18,477.68" fill="#6300ff"/>
<polygon points="588.38,480.85 636.18,463.95 625.98,460.78 578.18,477.68" fill="none" stroke="#000"/>
<polygon points="578.18,477.95 588.38,481.12 588.38,480.85 578.18,477.68" fill="none" stroke="#000"/>
<polygon points="588.38,481.12 636.18,464.22 636.18,463.95 588.38,480.85" fill="none" stroke="#000"/>
<polygon points="588.38,481.12 598.59,484.29 598.59,484.15 588.38,480.98" fill="#6300ff"/>
<polygon points="598.59,484.29 646.39,467.39 646.39,467.25 598.59,484.15" fill="#6300ff"/>
<polygon points="598.59,484.15 646.39,467.25 636.18,464.08 588.38,480.98" fill="#6300ff"/>
<polygon points="598.59,484.15 646.39,467.25 636.18,464.08 588.38,480.98" fill="none" stroke="#000"/>
<polygon points="588.38,481.12 598.59,484.29 598.59,484.15 588.38,480.98" fill="none" stroke="#000"/>
<polygon points="598.59,484.29 646.39,467.39 646.39,467.25 598.59,484.15" fill="none" stroke="#000"/>
<polygon points="598.59,484.29 608.79,487.46 608.79,487.39 598.59,484.22" fill="#6300ff"/>
<polygon points="608.79,487.46 656.59,470.56 656.59,470.49 608.79,487.39" fill="#6300ff"/>
<polygon points="608.79,487.39 656.59,470.49 646.39,467.32 598.59,484.22" fill="#6300ff"/>
<polygon points="608.79,487.39 656.59,470.49 646.39,467.32 598.59,484.22" fill="none" stroke="#000"/>
<polygon points="598.59,484.29 608.79,487.46 608.79,487.39 598.59,484.22" fill="none" stroke="#000"/>
<polygon points="608.79,487.46 656.59,470.56 656.59,470.49 608.79,487.39" fill="none" stroke="#000"/>
<polygon points="608.79,487.46 619,490.63 619,490.59 608.79,487.42" fill="#6300ff"/>
<polygon points="619,490.63 666.8,473.73 666.8,473.69 619,490.59" fill="#6300ff"/>
<polygon points="619,490.59 666.8,473.69 656.59,470.52 608.79,487.42" fill="#6300ff"/>
<polygon points="619,490.59 666.8,473.69 656.59,470.52 608.79,487.42" fill="none" stroke="#000"/>
<polygon points="608.79,487.46 619,490.63 619,490.59 608.79,487.42" fill="none" stroke="#000"/>
<polygon points="619,490.63 666.8,473.73 666.8,473.69 619,490.59" fill="none" stroke="#000"/>
<polygon points="619,490.63 629.2,493.8 629.2,493.78 619,490.61" fill="#6300ff"/>
<polygon points="629.2,493.8 677,476.9 677,476.88 629.2,493.78" fill="#6300ff"/>
<polygon points="629.2,493.78 677,476.88 666.8,473.71 619,490.61" fill="#6300ff"/>
<polygon points="629.2,493.78 677,476.88 666.8,473.71 619,490.61" fill="none" stroke="#000"/>
<polygon points="619,490.63 629.2,493.8 629.2,493.78 619,490.61" fill="none" stroke="#000"/>
<polygon points="629.2,493.8 677,476.9 677,476.88 629.2,493.78" fill="none" stroke="#000"/>
<polygon points="275.28,415.6 285.48,418.77 285.48,417.9 275.28,414.73" fill="#6300ff"/>
<polygon points="285.48,418.77 333.28,401.87 333.28,401 285.48,417.9" fill="#6300ff"/>
<polygon points="285.48,417.9 333.28,401 323.08,397.83 275.28,414.73" fill="#6300ff"/>
<polygon points="285.48,417.9 333.28,401 323.08,397.83 275.28,414.73" fill="none" stroke="#000"/>
<polygon points="275.28,415.6 285.48,418.77 285.48,417.9 275.28,414.73" fill="none" stroke="#000"/>
<polygon points="285.48,418.77 333.28,401.87 333.28,401 285.48,417.9" fill="none" stroke="#000"/>
<polygon points="285.48,418.77 295.69,421.94 295.69,420.7 285.48,417.53" fill="#6300ff"/>
<polygon points="295.69,421.94 343.49,405.04 343.49,403.8 295.69,420.7" fill="#6300ff"/>
<polygon points="295.69,420.7 343.49,403.8 333.28,400.63 285.48,417.53" fill="#6300ff"/>
<polygon points="295.69,420.7 343.49,403.8 333.28,400.63 285.48,417.53" fill="none" stroke="#000"/>
<polygon points="285.48,418.77 295.69,421.94 295.69,420.7 285.48,417.53" fill="none" stroke="#000"/>
<polygon points="295.69,421.94 343.49,405.04 343.49,403.8 295.69,420.7" fill="none" stroke="#000"/>
<polygon points="295.69,421.94 305.89,425.11 305.89,423.4 295.69,420.23" fill="#6300ff"/>
<polygon points="305.89,425.11 353.69,408.21 353.69,406.5 305.89,423.4" fill="#6300ff"/>
<polygon points="305.89,423.4 353.69,406.5 343.49,403.33 295.69,420.23" fill="#6300ff"/>
<polygon points="305.89,423.4 353.69,406.5 343.49,403.33 295.69,420.23" fill="none" stroke="#000"/>
<polygon points="295.69,421.94 305.89,425.11 305.89,423.4 295.69,420.23" fill="none" stroke="#000"/>
<polygon points="305.89,425.11 353.69,408.21 353.69,406.5 305.89,423.4" fill="none" stroke="#000"/>
<polygon points="305.89,425.11 316.1,428.28 316.1,426.02 305.89,422.85" fill="#6300ff"/>
<polygon points="316.1,428.28 363.9,411.38 363.9,409.12 316.1,426.02" fill="#6300ff"/>
<polygon points="316.1,426.02 363.9,409.12 353.69,405.95 305.89,422.85" fill="#6300ff"/>
<polygon points="316.1,426.02 363.9,409.12 353.69,405.95 305.89,422.85" fill="none" stroke="#000"/>
<polygon points="305.89,425.11 316.1,428.28 316.1,426.02 305.89,422.85" fill="none" stroke="#000"/>
<polygon points="316.1,428.28 363.9,411.38 363.9,409.12 316.1,426.02" fill="none" stroke="#000"/>
<polygon points="316.1,428.28 326.3,431.45 326.3,428.58 316.1,425.41" fill="#6300ff"/>
<polygon points="326.3,431.45 374.1,414.55 374.1,411.68 326.3,428.58" fill="#6300ff"/>
<polygon points="326.3,428.58 374.1,411.68 363.9,408.51 316.1,425.41" fill="#6300ff"/>
<polygon points="326.3,428.58 374.1,411.68 363.9,408.51 316.1,425.41" fill="none" stroke="#000"/>
<polygon points="316.1,428.28 326.3,431.45 326.3,428.58 316.1,425.41" fill="none" stroke="#000"/>
<polygon points="326.3,431.45 374.1,414.55 374.1,411.68 326.3,428.58" fill="none" stroke="#000"/>
<polygon points="326.3,431.45 336.5,434.62 336.5,431.12 326.3,427.95" fill="#6300ff"/>
<polygon points="336.5,434.62 384.3,417.72 384.3,414.22 336.5,431.12" fill="#6300ff"/>
<polygon points="336.5,431.12 384.3,414.22 374.1,411.05 326.3,427.95" fill="#6300ff"/>
<polygon points="336.5,431.12 384.3,414.22 374.1,411.05 326.3,427.95" fill="none" stroke="#000"/>
<polygon points="326.3,431.45 336.5,434.62 336.5,431.12 326.3,427.95" fill="none" stroke="#000"/>
<polygon points="336.5,434.62 384.3,417.72 384.3,414.22 336.5,431.12" fill="none" stroke="#000"/>
<polygon points="336.5,434.62 346.71,437.79 346.71,433.68 336.5,430.51" fill="#6300ff"/>
<polygon points="346.71,437.79 394.51,420.89 394.51,416.78 346.71,433.68" fill="#6300ff"/>
<polygon points="346.71,433.68 394.51,416.78 384.3,413.61 336.5,430.51" fill="#6300ff"/>
<polygon points="346.71,433.68 394.51,416.78 384.3,413.61 336.5,430.51" fill="none" stroke="#000"/>
<polygon points="336.5,434.62 346.71,437.79 346.71,433.68 336.5,430.51" fill="none" stroke="#000"/>
<polygon points="346.71,437.79 394.51,420.89 394.51,416.78 346.71,433.68" fill="none" stroke="#000"/>
<polygon points="346.71,437.79 356.91,440.96 356.91,436.33 346.71,433.16" fill="#6300ff"/>
<polygon points="356.91,440.96 404.71,424.06 404.71,419.43 356.91,436.33" fill="#6300ff"/>
<polygon points="356.91,436.33 404.71,419.43 394.51,416.26 346.71,433.16" fill="#6300ff"/>
<polygon points="356.91,436.33 404.71,419.43 394.51,416.26 346.71,433.16" fill="none" stroke="#000"/>
<polygon points="346.71,437.79 356.91,440.96 356.91,436.33 346.71,433.16" fill="none" stroke="#000"/>
<polygon points="356.91,440.96 404.71,424.06 404.71,419.43 356.91,436.33" fill="none" stroke="#000"/>
<polygon points="356.91,440.96 367.12,444.13 367.12,439.11 356.91,435.94" fill="#6300ff"/>
<polygon points="367.12,444.13 414.92,427.23 414.92,422.21 367.12,439.11" fill="#6300ff"/>
<polygon points="367.12,439.11 414.92,422.21 404.71,419.04 356.91,435.94" fill="#6300ff"/>
<polygon points="367.12,439.11 414.92,422.21 404.71,419.04 356.91,435.94" fill="none" stroke="#000"/>
<polygon points="356.91,440.96 367.12,444.13 367.12,439.11 356.91,435.94" fill="none" stroke="#000"/>
<polygon points="367.12,444.13 414.92,427.23 414.92,422.21 367.12,439.11" fill="none" stroke="#000"/>
<polygon points="367.12,444.13 377.32,447.3 377.32,442.08 367.12,438.91" fill="#6300ff"/>
<polygon points="377.32,447.3 425.12,430.4 425.12,425.18 377.32,442.08" fill="#6300ff"/>
<polygon points="377.32,442.08 425.12,425.18 414.92,422.01 367.12,438.91" fill="#6300ff"/>
<polygon points="377.32,442.08 425.12,425.18 414.92,422.01 367.12,438.91" fill="none" stroke="#000"/>
<polygon points="367.12,444.13 377.32,447.3 377.32,442.08 367.12,438.91" fill="none" stroke="#000"/>
<polygon points="377.32,447.3 425.12,430.4 425.12,425.18 377.32,442.08" fill="none" stroke="#000"/>
<polygon points="377.32,447.3 387.52,450.47 387.52,445.25 377.32,442.08" fill="#6300ff"/>
<polygon points="387.52,450.47 435.32,433.57 435.32,428.35 387.52,445.25" fill="#6300ff"/>
<polygon points="387.52,445.25 435.32,428.35 425.12,425.18 377.32,442.08" fill="#6300ff"/>
<polygon points="387.52,445.25 435.32,428.35 425.12,425.18 377.32,442.08" fill="none" stroke="#000"/>
<polygon points="377.32,447.3 387.52,450.47 387.52,445.25 377.32,442.08" fill="none" stroke="#000"/>
<polygon points="387.52,450.47 435.32,433.57 435.32,428.35 387.52,445.25" fill="none" stroke="#000"/>
<polygon points="387.52,450.47 397.73,453.64 397.73,448.62 387.52,445.45" fill="#6300ff"/>
<polygon points="397.73,453.64 445.53,436.74 445.53,431.72 397.73,448.62" fill="#6300ff"/>
<polygon points="397.73,448.62 445.53,431.72 435.32,428.55 387.52,445.45" fill="#6300ff"/>
<polygon points="397.73,448.62 445.53,431.72 435.32,428.55 387.52,445.45" fill="none" stroke="#000"/>
<polygon points="387.52,450.47 397.73,453.64 397.73,448.62 387.52,445.45" fill="none" stroke="#000"/>
<polygon points="397.73,453.64 445.53,436.74 445.53,431.72 397.73,448.62" fill="none" stroke="#000"/>
<polygon points="397.73,453.64 407.93,456.81 407.93,452.18 397.73,449.01" fill="#6300ff"/>
<polygon points="407.93,456.81 455.73,439.91 455.73,435.28 407.93,452.18" fill="#6300ff"/>
<polygon points="407.93,452.18 455.73,435.28 445.53,432.11 397.73,449.01" fill="#6300ff"/>
<polygon points="407.93,452.18 455.73,435.28 445.53,432.11 397.73,449.01" fill="none" stroke="#000"/>
<polygon points="397.73,453.64 407.93,456.81 407.93,452.18 397.73,449.01" fill="none" stroke="#000"/>
<polygon points="407.93,456.81 455.73,439.91 455.73,435.28 407.93,452.18" fill="none" stroke="#000"/>
<polygon points="407.93,456.81 418.14,459.98 418.14,455.87 407.93,452.7" fill="#6300ff"/>
<polygon points="418.14,459.98 465.94,443.08 465.94,438.97 418.14,455.87" fill="#6300ff"/>
<polygon points="418.14,455.87 465.94,438.97 455.73,435.8 407.93,452.7" fill="#6300ff"/>
<polygon points="418.14,455.87 465.94,438.97 455.73,435.8 407.93,452.7" fill="none" stroke="#000"/>
<polygon points="407.93,456.81 418.14,459.98 418.14,455.87 407.93,452.7" fill="none" stroke="#000"/>
<polygon points="418.14,459.98 465.94,443.08 465.94,438.97 418.14,455.87" fill="none" stroke="#000"/>
<polygon points="418.14,459.98 428.34,463.15 428.34,459.65 418.14,456.48" fill="#6300ff"/>
<polygon points="428.34,463.15 476.14,446.25 476.14,442.75 428.34,459.65" fill="#6300ff"/>
<polygon points="428.34,459.65 476.14,442.75 465.94,439.58 418.14,456.48" fill="#6300ff"/>
<polygon points="428.34,459.65 476.14,442.75 465.94,439.58 418.14,456.48" fill="none" stroke="#000"/>
<polygon points="418.14,459.98 428.34,463.15 428.34,459.65 418.14,456.48" fill="none" stroke="#000"/>
<polygon points="428.34,463.15 476.14,446.25 476.14,442.75 428.34,459.65" fill="none" stroke="#000"/>
<polygon points="428.34,463.15 438.54,466.32 438.54,463.45 428.34,460.28" fill="#6300ff"/>
<polygon points="438.54,466.32 486.34,449.42 486.34,446.55 438.54,463.45" fill="#6300ff"/>
<polygon points="438.54,463.45 486.34,446.55 476.14,443.38 428.34,460.28" fill="#6300ff"/>
<polygon points="438.54,463.45 486.34,446.55 476.14,443.38 428.34,460.28" fill="none" stroke="#000"/>
<polygon points="428.34,463.15 438.54,466.32 438.54,463.45 428.34,460.28" fill="none" stroke="#000"/>
<polygon points="438.54,466.32 486.34,449.42 486.34,446.55 438.54,463.45" fill="none" stroke="#000"/>
<polygon points="438.54,466.32 448.75,469.49 448.75,467.23 438.54,464.06" fill="#6300ff"/>
<polygon points="448.75,469.49 496.55,452.59 496.55,450.33 448.75,467.23" fill="#6300ff"/>
<polygon points="448.75,467.23 496.55,450.33 486.34,447.16 438.54,464.06" fill="#6300ff"/>
<polygon points="448.75,467.23 496.55,450.33 486.34,447.16 438.54,464.06" fill="none" stroke="#000"/>
<polygon points="438.54,466.32 448.75,469.49 448.75,467.23 438.54,464.06" fill="none" stroke="#000"/>
<polygon points="448.75,469.49 496.55,452.59 496.55,450.33 448.75,467.23" fill="none" stroke="#000"/>
<polygon points="448.75,469.49 458.95,472.66 458.95,470.95 448.75,467.78" fill="#6300ff"/>
<polygon points="458.95,472.66 506.75,455.76 506.75,454.05 458.95,470.95" fill="#6300ff"/>
<polygon points="458.95,470.95 506.75,454.05 496.55,450.88 448.75,467.78" fill="#6300ff"/>
<polygon points="458.95,470.95 506.75,454.05 496.55,450.88 448.75,467.78" fill="none" stroke="#000"/>
<polygon points="448.75,469.49 458.95,472.66 458.95,470.95 448.75,467.78" fill="none" stroke="#000"/>
<polygon points="458.95,472.66 506.75,455.76 506.75,454.05 458.95,470.95" fill="none" stroke="#000"/>
<polygon points="458.95,472.66 469.16,475.83 469.16,474.59 458.95,471.42" fill="#6300ff"/>
<polygon points="469.16,475.83 516.96,458.93 516.96,457.69 469.16,474.59" fill="#6300ff"/>
<polygon points="469.16,474.59 516.96,457.69 506.75,454.52 458.95,471.42" fill="#6300ff"/>
<polygon points="469.16,474.59 516.96,457.69 506.75,454.52 458.95,471.42" fill="none" stroke="#000"/>
<polygon points="458.95,472.66 469.16,475.83 469.16,474.59 458.95,471.42" fill="none" stroke="#000"/>
<polygon points="469.16,475.83 516.96,458.93 516.96,457.69 469.16,474.59" fill="none" stroke="#000"/>
<polygon points="469.16,475.83 479.36,479 479.36,478.13 469.16,474.96" fill="#6300ff"/>
<polygon points="479.36,479 527.16,462.1 527.16,461.23 479.36,478.13" fill="#6300ff"/>
<polygon points="479.36,478.13 527.16,461.23 516.96,458.06 469.16,474.96" fill="#6300ff"/>
<polygon points="479.36,478.13 527.16,461.23 516.96,458.06 469.16,474.96" fill="none" stroke="#000"/>
<polygon points="469.16,475.83 479.36,479 479.36,478.13 469.16,474.96" fill="none" stroke="#000"/>
<polygon points="479.36,479 527.16,462.1 527.16,461.23 479.36,478.13" fill="none" stroke="#000"/>
<polygon points="479.36,479 489.56,482.17 489.56,481.59 479.36,478.42" fill="#6300ff"/>
<polygon points="489.56,482.17 537.36,465.27 537.36,464.69 489.56,481.59" fill="#6300ff"/>
<polygon points="489.56,481.59 537.36,464.69 527.16,461.52 479.36,478.42" fill="#6300ff"/>
<polygon points="489.56,481.59 537.36,464.69 527.16,461.52 479.36,478.42" fill="none" stroke="#000"/>
<polygon points="479.36,479 489.56,482.17 489.56,481.59 479.36,478.42" fill="none" stroke="#000"/>
<polygon points="489.56,482.17 537.36,465.27 537.36,464.69 489.56,481.59" fill="none" stroke="#000"/>
<polygon points="489.56,482.17 499.77,485.34 499.77,484.96 489.56,481.79" fill="#6300ff"/>
<polygon points="499.77,485.34 547.57,468.44 547.57,468.06 499.77,484.96" fill="#6300ff"/>
<polygon points="499.77,484.96 547.57,468.06 537.36,464.89 489.56,481.79" fill="#6300ff"/>
<polygon points="499.77,484.96 547.57,468.06 537.36,464.89 489.56,481.79" fill="none" stroke="#000"/>
<polygon points="489.56,482.17 499.77,485.34 499.77,484.96 489.56,481.79" fill="none" stroke="#000"/>
<polygon points="499.77,485.34 547.57,468.44 547.57,468.06 499.77,484.96" fill="none" stroke="#000"/>
<polygon points="499.77,485.34 509.97,488.51 509.97,488.28 499.77,485.11" fill="#6300ff"/>
<polygon points="509.97,488.51 557.77,471.61 557.77,471.38 509.97,488.28" fill="#6300ff"/>
<polygon points="509.97,488.28 557.77,471.38 547.57,468.21 499.77,485.11" fill="#6300ff"/>
<polygon points="509.97,488.28 557.77,471.38 547.57,468.21 499.77,485.11" fill="none" stroke="#000"/>
<polygon points="499.77,485.34 509.97,488.51 509.97,488.28 499.77,485.11" fill="none" stroke="#000"/>
<polygon points="509.97,488.51 557.77,471.61 557.77,471.38 509.97,488.28" fill="none" stroke="#000"/>
<polygon points="509.97,488.51 520.18,491.68 520.18,491.54 509.97,488.37" fill="#6300ff"/>
<polygon points="520.18,491.68 567.98,474.78 567.98,474.64 520.18,491.54" fill="#6300ff"/>
<polygon points="520.18,491.54 567.98,474.64 557.77,471.47 509.97,488.37" fill="#6300ff"/>
<polygon points="520.18,491.54 567.98,474.64 557.77,471.47 509.97,488.37" fill="none" stroke="#000"/>
<polygon points="509.97,488.51 520.18,491.68 520.18,491.54 509.97,488.37" fill="none" stroke="#000"/>
<polygon points="520.18,491.68 567.98,474.78 567.98,474.64 520.18,491.54" fill="none" stroke="#000"/>
<polygon points="520.18,491.68 530.38,494.85 530.38,494.77 520.18,491.6" fill="#6300ff"/>
<polygon points="530.38,494.85 578.18,477.95 578.18,477.87 530.38,494.77" fill="#6300ff"/>
<polygon points="530.38,494.77 578.18,477.87 567.98,474.7 520.18,491.6" fill="#6300ff"/>
<polygon points="530.38,494.77 578.18,477.87 567.98,474.7 520.18,491.6" fill="none" stroke="#000"/>
<polygon points="520.18,491.68 530.38,494.85 530.38,494.77 520.18,491.6" fill="none" stroke="#000"/>
<polygon points="530.38,494.85 578.18,477.95 578.18,477.87 530.38,494.77" fill="none" stroke="#000"/>
<polygon points="530.38,494.85 540.58,498.02 540.58,497.98 530.38,494.81" fill="#6300ff"/>
<polygon points="540.58,498.02 588.38,481.12 588.38,481.08 540.58,497.98" fill="#6300ff"/>
<polygon points="540.58,497.98 588.38,481.08 578.18,477.91 530.38,494.81" fill="#6300ff"/>
<polygon points="540.58,497.98 588.38,481.08 578.18,477.91 530.38,494.81" fill="none" stroke="#000"/>
<polygon points="530.38,494.85 540.58,498.02 540.58,497.98 530.38,494.81" fill="none" stroke="#000"/>
<polygon points="540.58,498.02 588.38,481.12 588.38,481.08 540.58,497.98" fill="none" stroke="#000"/>
<polygon points="540.58,498.02 550.79,501.19 550.79,501.17 540.58,498" fill="#6300ff"/>
<polygon points="550.79,501.19 598.59,484.29 598.59,484.27 550.79,501.17" fill="#6300ff"/>
<polygon points="550.79,501.17 598.59,484.27 588.38,481.1 540.58,498" fill="#6300ff"/>
<polygon points="550.79,501.17 598.59,484.27 588.38,481.1 540.58,498" fill="none" stroke="#000"/>
<polygon points="540.58,498.02 550.79,501.19 550.79,501.17 540.58,498" fill="none" stroke="#000"/>
<polygon points="550.79,501.19 598.59,484.29 598.59,484.27 550.79,501.17" fill="none" stroke="#000"/>
<polygon points="550.79,501.19 560.99,504.36 560.99,504.35 550.79,501.18" fill="#6300ff"/>
<polygon points="560.99,504.36 608.79,487.46 608.79,487.45 560.99,504.35" fill="#6300ff"/>
<polygon points="560.99,504.35 608.79,487.45 598.59,484.28 550.79,501.18" fill="#6300ff"/>
<polygon points="560.99,504.35 608.79,487.45 598.59,484.28 550.79,501.18" fill="none" stroke="#000"/>
<polygon points="550.79,501.19 560.99,504.36 560.99,504.35 550.79,501.18" fill="none" stroke="#000"/>
<polygon points="560.99,504.36 608.79,487.46 608.79,487.45 560.99,504.35" fill="none" stroke="#000"/>
<polygon points="560.99,504.36 571.2,507.53 571.2,507.52 560.99,504.35" fill="#6300ff"/>
<polygon points="571.2,507.53 619,490.63 619,490.62 571.2,507.52" fill="#6300ff"/>
<polygon points="571.2,507.52 619,490.62 608.79,487.45 560.99,504.35" fill="#6300ff"/>
<polygon points="571.2,507.52 619,490.62 608.79,487.45 560.99,504.35" fill="none" stroke="#000"/>
<polygon points="560.99,504.36 571.2,507.53 571.2,507.52 560.99,504.35" fill="none" stroke="#000"/>
<polygon points="571.2,507.53 619,490.63 619,490.62 571.2,507.52" fill="none" stroke="#000"/>
<polygon points="571.2,507.53 581.4,510.7 581.4,510.7 571.2,507.53" fill="#6300ff"/>
<polygon points="581.4,510.7 629.2,493.8 629.2,493.8 581.4,510.7" fill="#6300ff"/>
<polygon points="581.4,510.7 629.2,493.8 619,490.63 571.2,507.53" fill="#6300ff"/>
<polygon points="581.4,510.7 629.2,493.8 619,490.63 571.2,507.53" fill="none" stroke="#000"/>
<polygon points="571.2,507.53 581.4,510.7 581.4,510.7 571.2,507.53" fill="none" stroke="#000"/>
<polygon points="581.4,510.7 629.2,493.8 629.2,493.8 581.4,510.7" fill="none" stroke="#000"/>
<polygon points="227.48,432.5 237.68,435.67 237.68,435.59 227.48,432.42" fill="#6300ff"/>
<polygon points="237.68,435.67 285.48,418.77 285.48,418.69 237.68,435.59" fill="#6300ff"/>
<polygon points="237.68,435.59 285.48,418.69 275.28,415.52 227.48,432.42" fill="#6300ff"/>
<polygon points="237.68,435.59 285.48,418.69 275.28,415.52 227.48,432.42" fill="none" stroke="#000"/>
<polygon points="227.48,432.5 237.68,435.67 237.68,435.59 227.48,432.42" fill="none" stroke="#000"/>
<polygon points="237.68,435.67 285.48,418.77 285.48,418.69 237.68,435.59" fill="none" stroke="#000"/>
<polygon points="237.68,435.67 247.89,438.84 247.89,438.73 237.68,435.56" fill="#6300ff"/>
<polygon points="247.89,438.84 295.69,421.94 295.69,421.83 247.89,438.73" fill="#6300ff"/>
<polygon points="247.89,438.73 295.69,421.83 285.48,418.66 237.68,435.56" fill="#6300ff"/>
<polygon points="247.89,438.73 295.69,421.83 285.48,418.66 237.68,435.56" fill="none" stroke="#000"/>
<polygon points="237.68,435.67 247.89,438.84 247.89,438.73 237.68,435.56" fill="none" stroke="#000"/>
<polygon points="247.89,438.84 295.69,421.94 295.69,421.83 247.89,438.73" fill="none" stroke="#000"/>
<polygon points="247.89,438.84 258.09,442.01 258.09,441.86 247.89,438.69" fill="#6300ff"/>
<polygon points="258.09,442.01 305.89,425.11 305.89,424.96 258.09,441.86" fill="#6300ff"/>
<polygon points="258.09,441.86 305.89,424.96 295.69,421.79 247.89,438.69" fill="#6300ff"/>
<polygon points="258.09,441.86 305.89,424.96 295.69,421.79 247.89,438.69" fill="none" stroke="#000"/>
<polygon points="247.89,438.84 258.09,442.01 258.09,441.86 247.89,438.69" fill="none" stroke="#000"/>
<polygon points="258.09,442.01 305.89,425.11 305.89,424.96 258.09,441.86" fill="none" stroke="#000"/>
<polygon points="258.09,442.01 268.3,445.18 268.3,444.98 258.09,441.81" fill="#6300ff"/>
<polygon points="268.3,445.18 316.1,428.28 316.1,428.08 268.3,444.98" fill="#6300ff"/>
<polygon points="268.3,444.98 316.1,428.08 305.89,424.91 258.09,441.81" fill="#6300ff"/>
<polygon points="268.3,444.98 316.1,428.08 305.89,424.91 258.09,441.81" fill="none" stroke="#000"/>
<polygon points="258.09,442.01 268.3,445.18 268.3,444.98 258.09,441.81" fill="none" stroke="#000"/>
<polygon points="268.3,445.18 316.1,428.28 316.1,428.08 268.3,444.98" fill="none" stroke="#000"/>
<polygon points="268.3,445.18 278.5,448.35 278.5,448.1 268.3,444.93" fill="#6300ff"/>
<polygon points="278.5,448.35 326.3,431.45 326.3,431.2 278.5,448.1" fill="#6300ff"/>
<polygon points="278.5,448.1 326.3,431.2 316.1,428.03 268.3,444.93" fill="#6300ff"/>
<polygon points="278.5,448.1 326.3,431.2 316.1,428.03 268.3,444.93" fill="none" stroke="#000"/>
<polygon points="268.3,445.18 278.5,448.35 278.5,448.1 268.3,444.93" fill="none" stroke="#000"/>
<polygon points="278.5,448.35 326.3,431.45 326.3,431.2 278.5,448.1" fill="none" stroke="#000"/>
<polygon points="278.5,448.35 288.7,451.52 288.7,451.21 278.5,448.04" fill="#6300ff"/>
<polygon points="288.7,451.52 336.5,434.62 336.5,434.31 288.7,451.21" fill="#6300ff"/>
<polygon points="288.7,451.21 336.5,434.31 326.3,431.14 278.5,448.04" fill="#6300ff"/>
<polygon points="288.7,451.21 336.5,434.31 326.3,431.14 278.5,448.04" fill="none" stroke="#000"/>
<polygon points="278.5,448.35 288.7,451.52 288.7,451.21 278.5,448.04" fill="none" stroke="#000"/>
<polygon points="288.7,451.52 336.5,434.62 336.5,434.31 288.7,451.21" fill="none" stroke="#000"/>
<polygon points="288.7,451.52 298.91,454.69 298.91,454.33 288.7,451.16" fill="#6300ff"/>
<polygon points="298.91,454.69 346.71,437.79 346.71,437.43 298.91,454.33" fill="#6300ff"/>
<polygon points="298.91,454.33 346.71,437.43 336.5,434.26 288.7,451.16" fill="#6300ff"/>
<polygon points="298.91,454.33 346.71,437.43 336.5,434.26 288.7,451.16" fill="none" stroke="#000"/>
<polygon points="288.7,451.52 298.91,454.69 298.91,454.33 288.7,451.16" fill="none" stroke="#000"/>
<polygon points="298.91,454.69 346.71,437.79 346.71,437.43 298.91,454.33" fill="none" stroke="#000"/>
<polygon points="298.91,454.69 309.11,457.86 309.11,457.46 298.91,454.29" fill="#6300ff"/>
<polygon points="309.11,457.86 356.91,440.96 356.91,440.56 309.11,457.46" fill="#6300ff"/>
<polygon points="309.11,457.46 356.91,440.56 346.71,437.39 298.91,454.29" fill="#6300ff"/>
<polygon points="309.11,457.46 356.91,440.56 346.71,437.39 298.91,454.29" fill="none" stroke="#000"/>
<polygon points="298.91,454.69 309.11,457.86 309.11,457.46 298.91,454.29" fill="none" stroke="#000"/>
<polygon points="309.11,457.86 356.91,440.96 356.91,440.56 309.11,457.46" fill="none" stroke="#000"/>
<polygon points="309.11,457.86 319.32,461.03 319.32,460.59 309.11,457.42" fill="#6300ff"/>
<polygon points="319.32,461.03 367.12,444.13 367.12,443.69 319.32,460.59" fill="#6300ff"/>
<polygon points="319.32,460.59 367.12,443.69 356.91,440.52 309.11,457.42" fill="#6300ff"/>
<polygon points="319.32,460.59 367.12,443.69 356.91,440.52 309.11,457.42" fill="none" stroke="#000"/>
<polygon points="309.11,457.86 319.32,461.03 319.32,460.59 309.11,457.42" fill="none" stroke="#000"/>
<polygon points="319.32,461.03 367.12,444.13 367.12,443.69 319.32,460.59" fill="none" stroke="#000"/>
<polygon points="319.32,461.03 329.52,464.2 329.52,463.74 319.32,460.57" fill="#6300ff"/>
<polygon points="329.52,464.2 377.32,447.3 377.32,446.84 329.52,463.74" fill="#6300ff"/>
<polygon points="329.52,463.74 377.32,446.84 367.12,443.67 319.32,460.57" fill="#6300ff"/>
<polygon points="329.52,463.74 377.32,446.84 367.12,443.67 319.32,460.57" fill="none" stroke="#000"/>
<polygon points="319.32,461.03 329.52,464.2 329.52,463.74 319.32,460.57" fill="none" stroke="#000"/>
<polygon points="329.52,464.2 377.32,447.3 377.32,446.84 329.52,463.74" fill="none" stroke="#000"/>
<polygon points="329.52,464.2 339.72,467.37 339.72,466.91 329.52,463.74" fill="#6300ff"/>
<polygon points="339.72,467.37 387.52,450.47 387.52,450.01 339.72,466.91" fill="#6300ff"/>
<polygon points="339.72,466.91 387.52,450.01 377.32,446.84 329.52,463.74" fill="#6300ff"/>
<polygon points="339.72,466.91 387.52,450.01 377.32,446.84 329.52,463.74" fill="none" stroke="#000"/>
<polygon points="329.52,464.2 339.72,467.37 339.72,466.91 329.52,463.74" fill="none" stroke="#000"/>
<polygon points="339.72,467.37 387.52,450.47 387.52,450.01 339.72,466.91" fill="none" stroke="#000"/>
<polygon points="339.72,467.37 349.93,470.54 349.93,470.1 339.72,466.93" fill="#6300ff"/>
<polygon points="349.93,470.54 397.73,453.64 397.73,453.2 349.93,470.1" fill="#6300ff"/>
<polygon points="349.93,470.1 397.73,453.2 387.52,450.03 339.72,466.93" fill="#6300ff"/>
<polygon points="349.93,470.1 397.73,453.2 387.52,450.03 339.72,466.93" fill="none" stroke="#000"/>
<polygon points="339.72,467.37 349.93,470.54 349.93,470.1 339.72,466.93" fill="none" stroke="#000"/>
<polygon points="349.93,470.54 397.73,453.64 397.73,453.2 349.93,470.1" fill="none" stroke="#000"/>
<polygon points="349.93,470.54 360.13,473.71 360.13,473.31 349.93,470.14" fill="#6300ff"/>
<polygon points="360.13,473.71 407.93,456.81 407.93,456.41 360.13,473.31" fill="#6300ff"/>
<polygon points="360.13,473.31 407.93,456.41 397.73,453.24 349.93,470.14" fill="#6300ff"/>
<polygon points="360.13,473.31 407.93,456.41 397.73,453.24 349.93,470.14" fill="none" stroke="#000"/>
<polygon points="349.93,470.54 360.13,473.71 360.13,473.31 349.93,470.14" fill="none" stroke="#000"/>
<polygon points="360.13,473.71 407.93,456.81 407.93,456.41 360.13,473.31" fill="none" stroke="#000"/>
<polygon points="360.13,473.71 370.34,476.88 370.34,476.52 360.13,473.35" fill="#6300ff"/>
<polygon points="370.34,476.88 418.14,459.98 418.14,459.62 370.34,476.52" fill="#6300ff"/>
<polygon points="370.34,476.52 418.14,459.62 407.93,456.45 360.13,473.35" fill="#6300ff"/>
<polygon points="370.34,476.52 418.14,459.62 407.93,456.45 360.13,473.35" fill="none" stroke="#000"/>
<polygon points="360.13,473.71 370.34,476.88 370.34,476.52 360.13,473.35" fill="none" stroke="#000"/>
<polygon points="370.34,476.88 418.14,459.98 418.14,459.62 370.34,476.52" fill="none" stroke="#000"/>
<polygon points="370.34,476.88 380.54,480.05 380.54,479.74 370.34,476.57" fill="#6300ff"/>
<polygon points="380.54,480.05 428.34,463.15 428.34,462.84 380.54,479.74" fill="#6300ff"/>
<polygon points="380.54,479.74 428.34,462.84 418.14,459.67 370.34,476.57" fill="#6300ff"/>
<polygon points="380.54,479.74 428.34,462.84 418.14,459.67 370.34,476.57" fill="none" stroke="#000"/>
<polygon points="370.34,476.88 380.54,480.05 380.54,479.74 370.34,476.57" fill="none" stroke="#000"/>
<polygon points="380.54,480.05 428.34,463.15 428.34,462.84 380.54,479.74" fill="none" stroke="#000"/>
<polygon points="380.54,480.05 390.74,483.22 390.74,482.97 380.54,479.8" fill="#6300ff"/>
<polygon points="390.74,483.22 438.54,466.32 438.54,466.07 390.74,482.97" fill="#6300ff"/>
<polygon points="390.74,482.97 438.54,466.07 428.34,462.9 380.54,479.8" fill="#6300ff"/>
<polygon points="390.74,482.97 438.54,466.07 428.34,462.9 380.54,479.8" fill="none" stroke="#000"/>
<polygon points="380.54,480.05 390.74,483.22 390.74,482.97 380.54,479.8" fill="none" stroke="#000"/>
<polygon points="390.74,483.22 438.54,466.32 438.54,466.07 390.74,482.97" fill="none" stroke="#000"/>
<polygon points="390.74,483.22 400.95,486.39 400.95,486.19 390.74,483.02" fill="#6300ff"/>
<polygon points="400.95,486.39 448.75,469.49 448.75,469.29 400.95,486.19" fill="#6300ff"/>
<polygon points="400.95,486.19 448.75,469.29 438.54,466.12 390.74,483.02" fill="#6300ff"/>
<polygon points="400.95,486.19 448.75,469.29 438.54,466.12 390.74,483.02" fill="none" stroke="#000"/>
<polygon points="390.74,483.22 400.95,486.39 400.95,486.19 390.74,483.02" fill="none" stroke="#000"/>
<polygon points="400.95,486.39 448.75,469.49 448.75,469.29 400.95,486.19" fill="none" stroke="#000"/>
<polygon points="400.95,486.39 411.15,489.56 411.15,489.41 400.95,486.24" fill="#6300ff"/>
<polygon points="411.15,489.56 458.95,472.66 458.95,472.51 411.15,489.41" fill="#6300ff"/>
<polygon points="411.15,489.41 458.95,472.51 448.75,469.34 400.95,486.24" fill="#6300ff"/>
<polygon points="411.15,489.41 458.95,472.51 448.75,469.34 400.95,486.24" fill="none" stroke="#000"/>
<polygon points="400.95,486.39 411.15,489.56 411.15,489.41 400.95,486.24" fill="none" stroke="#000"/>
<polygon points="411.15,489.56 458.95,472.66 458.95,472.51 411.15,489.41" fill="none" stroke="#000"/>
<polygon points="411.15,489.56 421.36,492.73 421.36,492.62 411.15,489.45" fill="#6300ff"/>
<polygon points="421.36,492.73 469.16,475.83 469.16,475.72 421.36,492.62" fill="#6300ff"/>
<polygon points="421.36,492.62 469.16,475.72 458.95,472.55 411.15,489.45" fill="#6300ff"/>
<polygon points="421.36,492.62 469.16,475.72 458.95,472.55 411.15,489.45" fill="none" stroke="#000"/>
<polygon points="411.15,489.56 421.36,492.73 421.36,492.62 411.15,489.45" fill="none" stroke="#000"/>
<polygon points="421.36,492.73 469.16,475.83 469.16,475.72 421.36,492.62" fill="none" stroke="#000"/>
<polygon points="421.36,492.73 431.56,495.9 431.56,495.82 421.36,492.65" fill="#6300ff"/>
<polygon points="431.56,495.9 479.36,479 479.36,478.92 431.56,495.82" fill="#6300ff"/>
<polygon points="431.56,495.82 479.36,478.92 469.16,475.75 421.36,492.65" fill="#6300ff"/>
<polygon points="431.56,495.82 479.36,478.92 469.16,475.75 421.36,492.65" fill="none" stroke="#000"/>
<polygon points="421.36,492.73 431.56,495.9 431.56,495.82 421.36,492.65" fill="none" stroke="#000"/>
<polygon points="431.56,495.9 479.36,479 479.36,478.92 431.56,495.82" fill="none" stroke="#000"/>
<polygon points="431.56,495.9 441.76,499.07 441.76,499.02 431.56,495.85" fill="#6300ff"/>
<polygon points="441.76,499.07 489.56,482.17 489.56,482.12 441.76,499.02" fill="#6300ff"/>
<polygon points="441.76,499.02 489.56,482.12 479.36,478.95 431.56,495.85" fill="#6300ff"/>
<polygon points="441.76,499.02 489.56,482.12 479.36,478.95 431.56,495.85" fill="none" stroke="#000"/>
<polygon points="431.56,495.9 441.76,499.07 441.76,499.02 431.56,495.85" fill="none" stroke="#000"/>
<polygon points="441.76,499.07 489.56,482.17 489.56,482.12 441.76,499.02" fill="none" stroke="#000"/>
<polygon points="441.76,499.07 451.97,502.24 451.97,502.21 441.76,499.04" fill="#6300ff"/>
<polygon points="451.97,502.24 499.77,485.34 499.77,485.31 451.97,502.21" fill="#6300ff"/>
<polygon points="451.97,502.21 499.77,485.31 489.56,482.14 441.76,499.04" fill="#6300ff"/>
<polygon points="451.97,502.21 499.77,485.31 489.56,482.14 441.76,499.04" fill="none" stroke="#000"/>
<polygon points="441.76,499.07 451.97,502.24 451.97,502.21 441.76,499.04" fill="none" stroke="#000"/>
<polygon points="451.97,502.24 499.77,485.34 499.77,485.31 451.97,502.21" fill="none" stroke="#000"/>
<polygon points="451.97,502.24 462.17,505.41 462.17,505.39 451.97,502.22" fill="#6300ff"/>
<polygon points="462.17,505.41 509.97,488.51 509.97,488.49 462.17,505.39" fill="#6300ff"/>
<polygon points="462.17,505.39 509.97,488.49 499.77,485.32 451.97,502.22" fill="#6300ff"/>
<polygon points="462.17,505.39 509.97,488.49 499.77,485.32 451.97,502.22" fill="none" stroke="#000"/>
<polygon points="451.97,502.24 462.17,505.41 462.17,505.39 451.97,502.22" fill="none" stroke="#000"/>
<polygon points="462.17,505.41 509.97,488.51 509.97,488.49 462.17,505.39" fill="none" stroke="#000"/>
<polygon points="462.17,505.41 472.38,508.58 472.38,508.57 462.17,505.4" fill="#6300ff"/>
<polygon points="472.38,508.58 520.18,491.68 520.18,491.67 472.38,508.57" fill="#6300ff"/>
<polygon points="472.38,508.57 520.18,491.67 509.97,488.5 462.17,505.4" fill="#6300ff"/>
<polygon points="472.38,508.57 520.18,491.67 509.97,488.5 462.17,505.4" fill="none" stroke="#000"/>
<polygon points="462.17,505.41 472.38,508.58 472.38,508.57 462.17,505.4" fill="none" stroke="#000"/>
<polygon points="472.38,508.58 520.18,491.68 520.18,491.67 472.38,508.57" fill="none" stroke="#000"/>
<polygon points="472.38,508.58 482.58,511.75 482.58,511.74 472.38,508.57" fill="#6300ff"/>
<polygon points="482.58,511.75 530.38,494.85 530.38,494.84 482.58,511.74" fill="#6300ff"/>
<polygon points="482.58,511.74 530.38,494.84 520.18,491.67 472.38,508.57" fill="#6300ff"/>
<polygon points="482.58,511.74 530.38,494.84 520.18,491.67 472.38,508.57" fill="none" stroke="#000"/>
<polygon points="472.38,508.58 482.58,511.75 482.58,511.74 472.38,508.57" fill="none" stroke="#000"/>
<polygon points="482.58,511.75 530.38,494.85 530.38,494.84 482.58,511.74" fill="none" stroke="#000"/>
<polygon points="482.58,511.75 492.78,514.92 492.78,514.92 482.58,511.75" fill="#6300ff"/>
<polygon points="492.78,514.92 540.58,498.02 540.58,498.02 492.78,514.92" fill="#6300ff"/>
<polygon points="492.78,514.92 540.58,498.02 530.38,494.85 482.58,511.75" fill="#6300ff"/>
<polygon points="492.78,514.92 540.58,498.02 530.38,494.85 482.58,511.75" fill="none" stroke="#000"/>
<polygon points="482.58,511.75 492.78,514.92 492.78,514.92 482.58,511.75" fill="none" stroke="#000"/>
<polygon points="492.78,514.92 540.58,498.02 540.58,498.02 492.78,514.92" fill="none" stroke="#000"/>
<polygon points="492.78,514.92 502.99,518.09 502.99,518.09 492.78,514.92" fill="#6300ff"/>
<polygon points="502.99,518.09 550.79,501.19 550.79,501.19 502.99,518.09" fill="#6300ff"/>
<polygon points="502.99,518.09 550.79,501.19 540.58,498.02 492.78,514.92" fill="#6300ff"/>
<polygon points="502.99,518.09 550.79,501.19 540.58,498.02 492.78,514.92" fill="none" stroke="#000"/>
<polygon points="492.78,514.92 502.99,518.09 502.99,518.09 492.78,514.92" fill="none" stroke="#000"/>
<polygon points="502.99,518.09 550.79,501.19 550.79,501.19 502.99,518.09" fill="none" stroke="#000"/>
<polygon points="502.99,518.09 513.19,521.26 513.19,521.26 502.99,518.09" fill="#6300ff"/>
<polygon points="513.19,521.26 560.99,504.36 560.99,504.36 513.19,521.26" fill="#6300ff"/>
<polygon points="513.19,521.26 560.99,504.36 550.79,501.19 502.99,518.09" fill="#6300ff"/>
<polygon points="513.19,521.26 560.99,504.36 550.79,501.19 502.99,518.09" fill="none" stroke="#000"/>
<polygon points="502.99,518.09 513.19,521.26 513.19,521.26 502.99,518.09" fill="none" stroke="#000"/>
<polygon points="513.19,521.26 560.99,504.36 560.99,504.36 513.19,521.26" fill="none" stroke="#000"/>
<polygon points="513.19,521.26 523.4,524.43 523.4,524.43 513.19,521.26" fill="#6300ff"/>
<polygon points="523.4,524.43 571.2,507.53 571.2,507.53 523.4,524.43" fill="#6300ff"/>
<polygon points="523.4,524.43 571.2,507.53 560.99,504.36 513.19,521.26" fill="#6300ff"/>
<polygon points="523.4,524.43 571.2,507.53 560.99,504.36 513.19,521.26" fill="none" stroke="#000"/>
<polygon points="513.19,521.26 523.4,524.43 523.4,524.43 513.19,521.26" fill="none" stroke="#000"/>
<polygon points="523.4,524.43 571.2,507.53 571.2,507.53 523.4,524.43" fill="none" stroke="#000"/>
<polygon points="523.4,524.43 533.6,527.6 533.6,527.6 523.4,524.43" fill="#6300ff"/>
<polygon points="533.6,527.6 581.4,510.7 581.4,510.7 533.6,527.6" fill="#6300ff"/>
<polygon points="533.6,527.6 581.4,510.7 571.2,507.53 523.4,524.43" fill="#6300ff"/>
<polygon points="533.6,527.6 581.4,510.7 571.2,507.53 523.4,524.43" fill="none" stroke="#000"/>
<polygon points="523.4,524.43 533.6,527.6 533.6,527.6 523.4,524.43" fill="none" stroke="#000"/>
<polygon points="533.6,527.6 581.4,510.7 581.4,510.7 533.6,527.6" fill="none" stroke="#000"/>
<line x1="533.6" y1="527.6" x2="533.6" y2="300.7" stroke="#000"/>
<line x1="227.48" y1="205.6" x2="533.6" y2="300.7" stroke="#000"/>
<line x1="533.6" y1="300.7" x2="820.4" y2="199.3" stroke="#000"/>
<line x1="227.48" y1="432.5" x2="227.48" y2="205.6" stroke="#000"/>
<line x1="217.48" y1="432.5" x2="227.48" y2="432.5" stroke="#000"/>
<line x1="222.48" y1="425.49" x2="227.48" y2="425.49" stroke="#000"/>
<line x1="222.48" y1="418.47" x2="227.48" y2="418.47" stroke="#000"/>
<line x1="222.48" y1="411.46" x2="227.48" y2="411.46" stroke="#000"/>
<line x1="222.48" y1="404.44" x2="227.48" y2="404.44" stroke="#000"/>
<line x1="217.48" y1="397.43" x2="227.48" y2="397.43" stroke="#000"/>
<line x1="222.48" y1="390.42" x2="227.48" y2="390.42" stroke="#000"/>
<line x1="222.48" y1="383.4" x2="227.48" y2="383.4" stroke="#000"/>
<line x1="222.48" y1="376.39" x2="227.48" y2="376.39" stroke="#000"/>
<line x1="222.48" y1="369.37" x2="227.48" y2="369.37" stroke="#000"/>
<line x1="217.48" y1="362.36" x2="227.48" y2="362.36" stroke="#000"/>
<line x1="222.48" y1="355.35" x2="227.48" y2="355.35" stroke="#000"/>
<line x1="222.48" y1="348.33" x2="227.48" y2="348.33" stroke="#000"/>
<line x1="222.48" y1="341.32" x2="227.48" y2="341.32" stroke="#000"/>
<line x1="222.48" y1="334.3" x2="227.48" y2="334.3" stroke="#000"/>
<line x1="217.48" y1="327.29" x2="227.48" y2="327.29" stroke="#000"/>
<line x1="222.48" y1="320.28" x2="227.48" y2="320.28" stroke="#000"/>
<line x1="222.48" y1="313.26" x2="227.48" y2="313.26" stroke="#000"/>
<line x1="222.48" y1="306.25" x2="227.48" y2="306.25" stroke="#000"/>
<line x1="222.48" y1="299.23" x2="227.48" y2="299.23" stroke="#000"/>
<line x1="217.48" y1="292.22" x2="227.48" y2="292.22" stroke="#000"/>
<line x1="222.48" y1="285.21" x2="227.48" y2="285.21" stroke="#000"/>
<line x1="222.48" y1="278.19" x2="227.48" y2="278.19" stroke="#000"/>
<line x1="222.48" y1="271.18" x2="227.48" y2="271.18" stroke="#000"/>
<line x1="222.48" y1="264.16" x2="227.48" y2="264.16" stroke="#000"/>
<line x1="217.48" y1="257.15" x2="227.48" y2="257.15" stroke="#000"/>
<line x1="222.48" y1="250.14" x2="227.48" y2="250.14" stroke="#000"/>
<line x1="222.48" y1="243.12" x2="227.48" y2="243.12" stroke="#000"/>
<line x1="222.48" y1="236.11" x2="227.48" y2="236.11" stroke="#000"/>
<line x1="222.48" y1="229.09" x2="227.48" y2="229.09" stroke="#000"/>
<line x1="217.48" y1="222.08" x2="227.48" y2="222.08" stroke="#000"/>
<line x1="222.48" y1="215.07" x2="227.48" y2="215.07" stroke="#000"/>
<line x1="222.48" y1="208.05" x2="227.48" y2="208.05" stroke="#000"/>
<line x1="533.6" y1="527.6" x2="820.4" y2="426.2" stroke="#000"/>
<line x1="533.6" y1="527.6" x2="538.3" y2="533.7" stroke="#000"/>
<line x1="539.58" y1="525.49" x2="540.93" y2="528.89" stroke="#000"/>
<line x1="545.55" y1="523.38" x2="546.9" y2="526.78" stroke="#000"/>
<line x1="551.52" y1="521.26" x2="552.87" y2="524.66" stroke="#000"/>
<line x1="557.5" y1="519.15" x2="558.85" y2="522.55" stroke="#000"/>
<line x1="563.48" y1="517.04" x2="568.18" y2="523.14" stroke="#000"/>
<line x1="569.45" y1="514.93" x2="570.8" y2="518.33" stroke="#000"/>
<line x1="575.43" y1="512.81" x2="576.78" y2="516.21" stroke="#000"/>
<line x1="581.4" y1="510.7" x2="582.75" y2="514.1" stroke="#000"/>
<line x1="587.38" y1="508.59" x2="588.73" y2="511.99" stroke="#000"/>
<line x1="593.35" y1="506.48" x2="598.05" y2="512.58" stroke="#000"/>
<line x1="599.33" y1="504.36" x2="600.68" y2="507.76" stroke="#000"/>
<line x1="605.3" y1="502.25" x2="606.65" y2="505.65" stroke="#000"/>
<line x1="611.27" y1="500.14" x2="612.62" y2="503.54" stroke="#000"/>
<line x1="617.25" y1="498.03" x2="618.6" y2="501.43" stroke="#000"/>
<line x1="623.23" y1="495.91" x2="627.93" y2="502.01" stroke="#000"/>
<line x1="629.2" y1="493.8" x2="630.55" y2="497.2" stroke="#000"/>
<line x1="635.18" y1="491.69" x2="636.53" y2="495.09" stroke="#000"/>
<line x1="641.15" y1="489.58" x2="642.5" y2="492.98" stroke="#000"/>
<line x1="647.12" y1="487.46" x2="648.47" y2="490.86" stroke="#000"/>
<line x1="653.1" y1="485.35" x2="657.8" y2="491.45" stroke="#000"/>
<line x1="659.08" y1="483.24" x2="660.43" y2="486.64" stroke="#000"/>
<line x1="665.05" y1="481.12" x2="666.4" y2="484.52" stroke="#000"/>
<line x1="671.03" y1="479.01" x2="672.38" y2="482.41" stroke="#000"/>
<line x1="677" y1="476.9" x2="678.35" y2="480.3" stroke="#000"/>
<line x1="682.98" y1="474.79" x2="687.68" y2="480.89" stroke="#000"/>
<line x1="688.95" y1="472.68" x2="690.3" y2="476.08" stroke="#000"/>
<line x1="694.93" y1="470.56" x2="696.28" y2="473.96" stroke="#000"/>
<line x1="700.9" y1="468.45" x2="702.25" y2="471.85" stroke="#000"/>
<line x1="706.88" y1="466.34" x2="708.23" y2="469.74" stroke="#000"/>
<line x1="712.85" y1="464.23" x2="717.55" y2="470.33" stroke="#000"/>
<line x1="718.83" y1="462.11" x2="720.18" y2="465.51" stroke="#000"/>
<line x1="724.8" y1="460" x2="726.15" y2="463.4" stroke="#000"/>
<line x1="730.78" y1="457.89" x2="732.13" y2="461.29" stroke="#000"/>
<line x1="736.75" y1="455.78" x2="738.1" y2="459.18" stroke="#000"/>
<line x1="742.73" y1="453.66" x2="747.43" y2="459.76" stroke="#000"/>
<line x1="748.7" y1="451.55" x2="750.05" y2="454.95" stroke="#000"/>
<line x1="754.68" y1="449.44" x2="756.03" y2="452.84" stroke="#000"/>
<line x1="760.65" y1="447.33" x2="762" y2="450.73" stroke="#000"/>
<line x1="766.62" y1="445.21" x2="767.97" y2="448.61" stroke="#000"/>
<line x1="772.6" y1="443.1" x2="777.3" y2="449.2" stroke="#000"/>
<line x1="778.58" y1="440.99" x2="779.93" y2="444.39" stroke="#000"/>
<line x1="784.55" y1="438.88" x2="785.9" y2="442.28" stroke="#000"/>
<line x1="790.53" y1="436.76" x2="791.88" y2="440.16" stroke="#000"/>
<line x1="796.5" y1="434.65" x2="797.85" y2="438.05" stroke="#000"/>
<line x1="802.48" y1="432.54" x2="807.18" y2="438.64" stroke="#000"/>
<line x1="808.45" y1="430.43" x2="809.8" y2="433.83" stroke="#000"/>
<line x1="814.42" y1="428.31" x2="815.77" y2="431.71" stroke="#000"/>
<line x1="820.4" y1="426.2" x2="821.75" y2="429.6" stroke="#000"/>
<line x1="227.48" y1="432.5" x2="533.6" y2="527.6" stroke="#000"/>
<line x1="533.6" y1="527.6" x2="530.2" y2="534.4" stroke="#000"/>
<line x1="523.4" y1="524.43" x2="522.05" y2="528.13" stroke="#000"/>
<line x1="513.19" y1="521.26" x2="511.84" y2="524.96" stroke="#000"/>
<line x1="502.99" y1="518.09" x2="501.64" y2="521.79" stroke="#000"/>
<line x1="492.78" y1="514.92" x2="491.43" y2="518.62" stroke="#000"/>
<line x1="482.58" y1="511.75" x2="479.18" y2="518.55" stroke="#000"/>
<line x1="472.38" y1="508.58" x2="471.03" y2="512.28" stroke="#000"/>
<line x1="462.17" y1="505.41" x2="460.82" y2="509.11" stroke="#000"/>
<line x1="451.97" y1="502.24" x2="450.62" y2="505.94" stroke="#000"/>
<line x1="441.76" y1="499.07" x2="440.41" y2="502.77" stroke="#000"/>
<line x1="431.56" y1="495.9" x2="428.16" y2="502.7" stroke="#000"/>
<line x1="421.36" y1="492.73" x2="420.01" y2="496.43" stroke="#000"/>
<line x1="411.15" y1="489.56" x2="409.8" y2="493.26" stroke="#000"/>
<line x1="400.95" y1="486.39" x2="399.6" y2="490.09" stroke="#000"/>
<line x1="390.74" y1="483.22" x2="389.39" y2="486.92" stroke="#000"/>
<line x1="380.54" y1="480.05" x2="377.14" y2="486.85" stroke="#000"/>
<line x1="370.34" y1="476.88" x2="368.99" y2="480.58" stroke="#000"/>
<line x1="360.13" y1="473.71" x2="358.78" y2="477.41" stroke="#000"/>
<line x1="349.93" y1="470.54" x2="348.58" y2="474.24" stroke="#000"/>
<line x1="339.72" y1="467.37" x2="338.37" y2="471.07" stroke="#000"/>
<line x1="329.52" y1="464.2" x2="326.12" y2="471" stroke="#000"/>
<line x1="319.32" y1="461.03" x2="317.97" y2="464.73" stroke="#000"/>
<line x1="309.11" y1="457.86" x2="307.76" y2="461.56" stroke="#000"/>
<line x1="298.91" y1="454.69" x2="297.56" y2="458.39" stroke="#000"/>
<line x1="288.7" y1="451.52" x2="287.35" y2="455.22" stroke="#000"/>
<line x1="278.5" y1="448.35" x2="275.1" y2="455.15" stroke="#000"/>
<line x1="268.3" y1="445.18" x2="266.95" y2="448.88" stroke="#000"/>
<line x1="258.09" y1="442.01" x2="256.74" y2="445.71" stroke="#000"/>
<line x1="247.89" y1="438.84" x2="246.54" y2="442.54" stroke="#000"/>
<line x1="237.68" y1="435.67" x2="236.33" y2="439.37" stroke="#000"/>
<line x1="227.48" y1="432.5" x2="224.08" y2="439.3" stroke="#000"/>
<text x="215" y="438" text-anchor="end" font-size="20">0</text>
<text x="215" y="402.93" text-anchor="end" font-size="20">100</text>
<text x="215" y="367.86" text-anchor="end" font-size="20">200</text>
<text x="215" y="332.79" text-anchor="end" font-size="20">300</text>
<text x="215" y="297.72" text-anchor="end" font-size="20">400</text>
<text x="215" y="262.65" text-anchor="end" font-size="20">500</text>
<text x="215" y="227.58" text-anchor="end" font-size="20">600</text>
<text x="215.2" y="454.4" text-anchor="middle" font-size="20">2</text>
<text x="268" y="471" text-anchor="middle" font-size="20">1</text>
<text x="318.5" y="486.6" text-anchor="middle" font-size="20">0</text>
<text x="370.3" y="502.8" text-anchor="middle" font-size="20">-1</text>
<text x="421.1" y="518.8" text-anchor="middle" font-size="20">-2</text>
<text x="472.2" y="534.4" text-anchor="middle" font-size="20">-3</text>
<text x="523" y="550.6" text-anchor="middle" font-size="20">-4</text>
<text x="544.9" y="550.3" font-size="20">-4</text>
<text x="574.78" y="539.74" font-size="20" letter-spacing="1">-3.5</text>
<text x="604.65" y="529.18" font-size="20">-3</text>
<text x="634.53" y="518.61" font-size="20" letter-spacing="1">-2.5</text>
<text x="664.4" y="508.05" font-size="20">-2</text>
<text x="694.28" y="497.49" font-size="20" letter-spacing="1">-1.5</text>
<text x="724.15" y="486.93" font-size="20">-1</text>
<text x="754.03" y="476.36" font-size="20" letter-spacing="1">-0.5</text>
<text x="783.9" y="465.8" font-size="20">0</text>
<text x="813.78" y="455.24" font-size="20" letter-spacing="1">0.5</text>
<rect x="824" y="505.965" width="33" height="21.735" fill="#6300ff"/>
<rect x="824" y="484.73" width="33" height="21.735" fill="#3300ff"/>
<rect x="824" y="463.495" width="33" height="21.735" fill="#0014ff"/>
<rect x="824" y="442.26" width="33" height="21.735" fill="#0044ff"/>
<rect x="824" y="421.025" width="33" height="21.735" fill="#008bff"/>
<rect x="824" y="399.79" width="33" height="21.735" fill="#00bbff"/>
<rect x="824" y="378.555" width="33" height="21.735" fill="#00fffc"/>
<rect x="824" y="357.32" width="33" height="21.735" fill="#00ffcc"/>
<rect x="824" y="336.085" width="33" height="21.735" fill="#00ff85"/>
<rect x="824" y="314.85" width="33" height="21.735" fill="#00ff55"/>
<rect x="824" y="293.615" width="33" height="21.735" fill="#00ff0e"/>
<rect x="824" y="272.38" width="33" height="21.735" fill="#22ff00"/>
<rect x="824" y="251.145" width="33" height="21.735" fill="#69ff00"/>
<rect x="824" y="229.91" width="33" height="21.735" fill="#99ff00"/>
<rect x="824" y="208.675" width="33" height="21.735" fill="#e0ff00"/>
<rect x="824" y="187.44" width="33" height="21.735" fill="#ffee00"/>
<rect x="824" y="166.205" width="33" height="21.735" fill="#ffa700"/>
<rect x="824" y="144.97" width="33" height="21.735" fill="#ff7700"/>
<rect x="824" y="123.735" width="33" height="21.735" fill="#ff3000"/>
<rect x="824" y="102.5" width="33" height="21.735" fill="#ff0000"/>
<line x1="857.5" y1="103.1" x2="857.5" y2="527.8" stroke="#000"/>
<line x1="840" y1="527.8" x2="857.5" y2="527.8" stroke="#000"/>
<line x1="840" y1="455.597" x2="857.5" y2="455.597" stroke="#000"/>
<line x1="840" y1="383.393" x2="857.5" y2="383.393" stroke="#000"/>
<line x1="840" y1="311.19" x2="857.5" y2="311.19" stroke="#000"/>
<line x1="840" y1="238.987" x2="857.5" y2="238.987" stroke="#000"/>
<line x1="840" y1="166.783" x2="857.5" y2="166.783" stroke="#000"/>
<text x="861" y="533.3" font-size="20">0</text>
<text x="861" y="461.097" font-size="20">100</text>
<text x="861" y="388.893" font-size="20">200</text>
<text x="861" y="316.69" font-size="20">300</text>
<text x="861" y="244.487" font-size="20">400</text>
<text x="861" y="172.283" font-size="20">500</text>
</svg>

<!-- title -->
<div class="a" style="left:184px;top:79px;width:119px;height:34px;background:#000"></div>
<div class="a" style="left:182px;top:77px;width:119px;height:34px;background:#f2f2f2;border:1px solid #000"></div>
<div class="t nb" style="left:189px;top:80.5px;font-weight:bold;font-size:26px">py vs px</div>

<!-- stats -->
<div class="a" style="left:661px;top:63px;width:150px;height:128px;background:#f2f2f2;border:1px solid #000;border-right-width:2px;border-bottom-width:2px"></div>
<div class="a" style="left:661px;top:84px;width:150px;height:1px;background:#000"></div>
<div class="t nb" style="left:661px;top:66px;width:150px;text-align:center;font-weight:bold;font-size:17px;transform:scaleX(1.1)">hpxpy</div>
<div class="t nb" style="left:669px;top:86.5px;font-weight:bold;font-size:16px;transform:scaleX(1.06);transform-origin:0 0">Entries</div>
<div class="t nb" style="left:660px;top:86.5px;width:141px;text-align:right;font-weight:bold;font-size:16px;transform:scaleX(1.06);transform-origin:100% 0">25000</div>
<div class="t nb" style="left:669px;top:107.7px;font-weight:bold;font-size:16px;transform:scaleX(1.06);transform-origin:0 0">Mean x</div>
<div class="t nb" style="left:660px;top:107.7px;width:141px;text-align:right;font-weight:bold;font-size:16px;transform:scaleX(1.06);transform-origin:100% 0">-0.387</div>
<div class="t nb" style="left:669px;top:128.9px;font-weight:bold;font-size:16px;transform:scaleX(1.06);transform-origin:0 0">Mean y</div>
<div class="t nb" style="left:660px;top:128.9px;width:141px;text-align:right;font-weight:bold;font-size:16px;transform:scaleX(1.06);transform-origin:100% 0">-0.05859</div>
<div class="t nb" style="left:669px;top:150.1px;font-weight:bold;font-size:16px;transform:scaleX(1.06);transform-origin:0 0">RMS x</div>
<div class="t nb" style="left:660px;top:150.1px;width:141px;text-align:right;font-weight:bold;font-size:16px;transform:scaleX(1.06);transform-origin:100% 0">0.7631</div>
<div class="t nb" style="left:669px;top:171.3px;font-weight:bold;font-size:16px;transform:scaleX(1.06);transform-origin:0 0">RMS y</div>
<div class="t nb" style="left:660px;top:171.3px;width:141px;text-align:right;font-weight:bold;font-size:16px;transform:scaleX(1.06);transform-origin:100% 0">0.94</div>

</body></html>
